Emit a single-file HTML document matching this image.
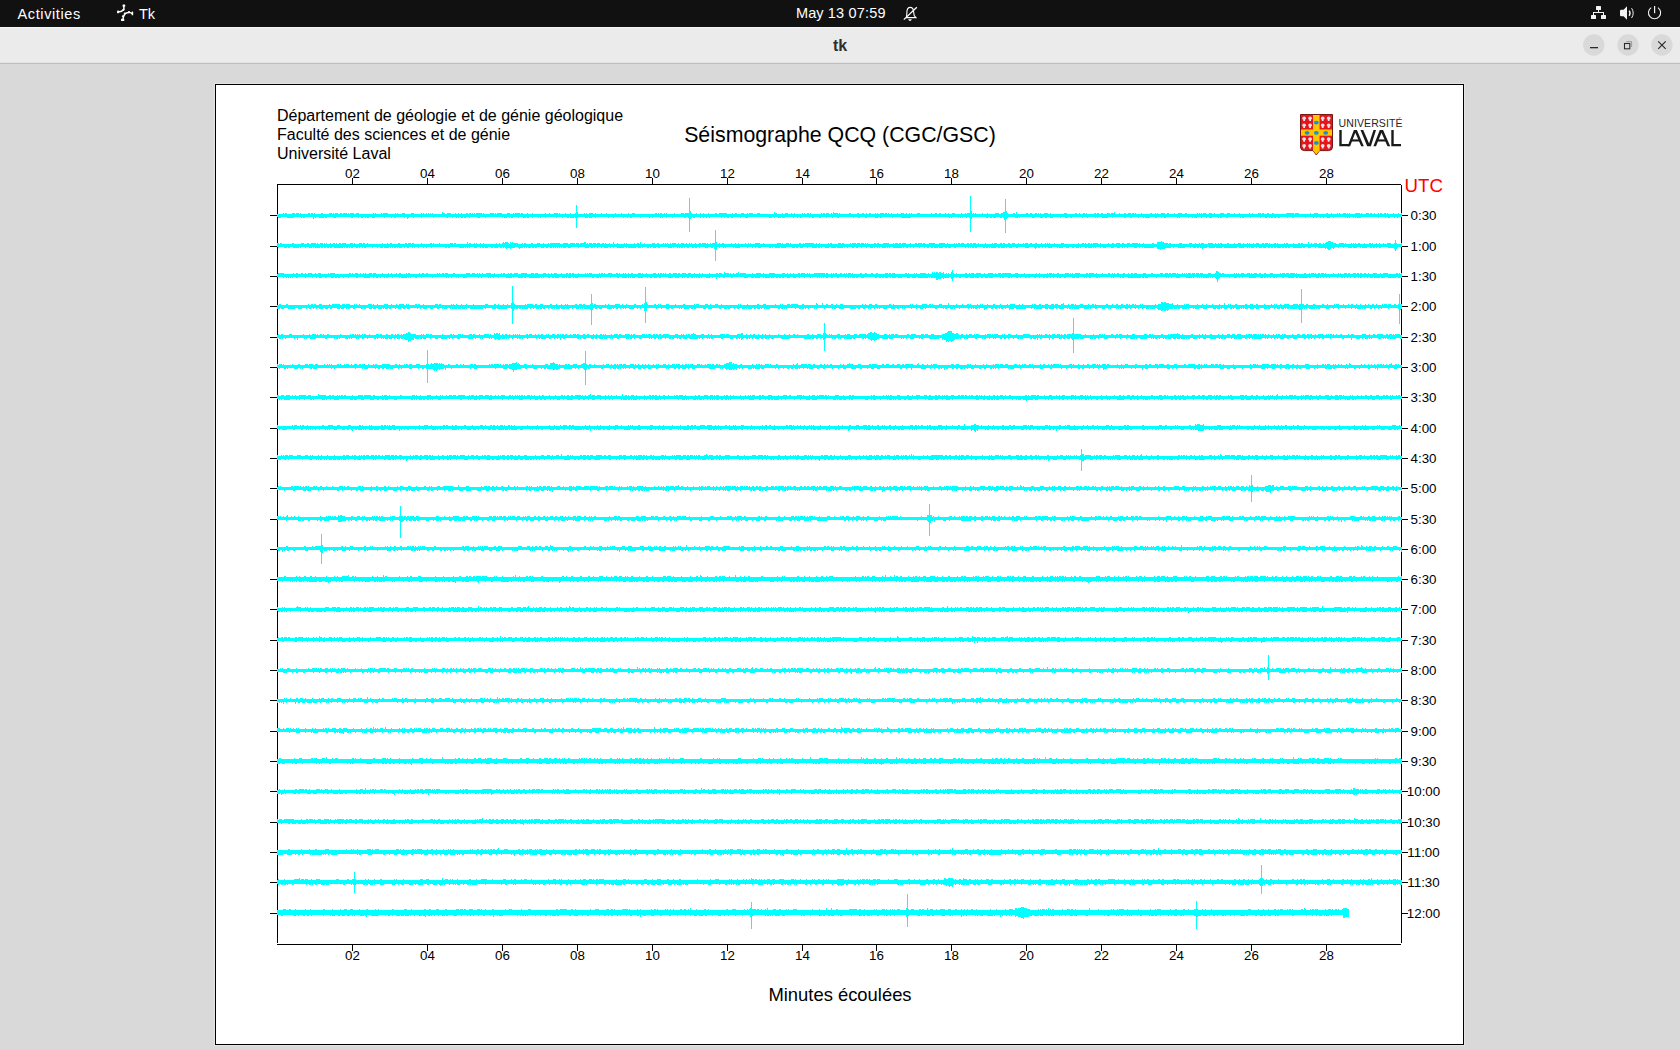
<!DOCTYPE html>
<html><head><meta charset="utf-8"><title>tk</title>
<style>
html,body{margin:0;padding:0}
body{width:1680px;height:1050px;overflow:hidden;background:#d9d9d9;position:relative;font-family:"Liberation Sans",sans-serif}
.abs{position:absolute}
.plot text{font-family:"Liberation Sans",sans-serif}
.t13{font-size:13.33px}.t16{font-size:16px}.t18{font-size:18.4px}.t20{font-size:21.33px}
</style></head><body>
<div class="abs" style="left:0;top:0;width:1680px;height:27px;background:#111111"></div>
<div class="abs" style="left:0;top:27px;width:1680px;height:1px;background:#f6f6f6"></div>
<div class="abs" style="left:0;top:28px;width:1680px;height:34px;background:#ebebeb"></div>
<div class="abs" style="left:0;top:62px;width:1680px;height:1px;background:#e3e3e3"></div>
<div class="abs" style="left:0;top:63px;width:1680px;height:1px;background:#bebebe"></div>
<svg class="abs" style="left:0;top:0" width="1680" height="64" viewBox="0 0 1680 64">
  <text x="17.5" y="19" style="font-family:'Liberation Sans',sans-serif;font-size:14.5px;letter-spacing:0.62px" fill="#ffffff">Activities</text>
  <g fill="none" stroke="#ffffff" stroke-width="1.5" stroke-linecap="round" stroke-linejoin="round">
    <path d="M123.8 5.6 L123.9 9.6 L121.6 11.2 L118.2 12"/>
    <path d="M125 13.6 L127.2 12.8 L129.2 12.4 L131 12.9 L132.3 13.2"/>
    <path d="M125 13.6 L123.6 16.4 L122.8 19.8"/>
  </g>
  <g fill="#ffffff">
    <rect x="122.6" y="4.6" width="2.6" height="2.2" rx="0.6"/>
    <rect x="117.1" y="10.6" width="1.8" height="2.6" rx="0.5"/>
    <rect x="131.6" y="11.6" width="1.6" height="3.6" rx="0.5"/>
    <rect x="121" y="18.8" width="3.3" height="2.3" rx="0.6"/>
    <circle cx="123.4" cy="9.7" r="1"/>
    <circle cx="129" cy="11.9" r="1"/>
    <circle cx="124.8" cy="13.4" r="1"/>
    <circle cx="122.8" cy="16.2" r="0.9"/>
  </g>
  <text x="139" y="19" style="font-family:'Liberation Sans',sans-serif;font-size:14.5px" fill="#ffffff">Tk</text>
  <text x="796" y="18" style="font-family:'Liberation Sans',sans-serif;font-size:14.5px;letter-spacing:0.1px" fill="#ffffff">May 13</text>
  <text x="848.5" y="18" style="font-family:'Liberation Sans',sans-serif;font-size:14.5px;letter-spacing:0.2px" fill="#ffffff">07:59</text>
  <g fill="none" stroke="#ffffff" stroke-width="1.1">
    <path d="M906.5 17.6 L907 11 Q907.5 7.4 910.2 7.4 Q913 7.4 913.5 11 L914.2 15.5 L916 17.6 Z"/>
    <path d="M903.8 19.6 L916.8 7.3" stroke-width="1.3"/>
  </g>
  <path d="M908.2 19.2 L911.8 19.2 Q911.2 21 910 21 Q908.8 21 908.2 19.2Z" fill="#ffffff"/>
  <g fill="#f2f2f2">
    <rect x="1596" y="6" width="5" height="4" rx="0.6"/>
    <rect x="1591" y="15" width="5" height="4" rx="0.6"/>
    <rect x="1601" y="15" width="5" height="4" rx="0.6"/>
    <rect x="1598" y="10" width="1" height="3"/>
    <rect x="1593" y="12" width="11" height="1"/>
    <rect x="1593" y="12" width="1" height="3"/>
    <rect x="1603" y="12" width="1" height="3"/>
    <path d="M1621.2 9.8 L1623.6 9.8 L1627 6.2 L1627 19.8 L1623.6 16.2 L1621.2 16.2 Q1620 16.2 1620 15 L1620 11 Q1620 9.8 1621.2 9.8 Z"/>
  </g>
  <g fill="none" stroke="#f2f2f2">
    <path d="M1629.3 10.6 Q1630.9 13.2 1629.3 15.8" stroke-width="1.6"/>
    <path d="M1631.6 8.2 Q1634.8 13.1 1631.6 18" stroke-width="1.0"/>
    <path d="M1651.2 7.6 A6.1 6.1 0 1 0 1657.9 7.6" stroke-width="1.1"/>
    <path d="M1654.6 6 L1654.6 13.2" stroke-width="1.2"/>
  </g>
  <text x="840" y="51" text-anchor="middle" style="font-family:'Liberation Sans',sans-serif;font-size:16px;font-weight:bold" fill="#2e2e2e">tk</text>
  <circle cx="1593.8" cy="45" r="10.7" fill="#d9d9d9"/>
  <circle cx="1628" cy="45" r="10.7" fill="#d9d9d9"/>
  <circle cx="1661.9" cy="45" r="10.7" fill="#d9d9d9"/>
  <rect x="1590" y="47" width="8" height="1.3" fill="#2a2a2a"/>
  <rect x="1624.5" y="43.5" width="5.3" height="5.3" fill="none" stroke="#2a2a2a" stroke-width="1.1"/>
  <path d="M1626.3 41.6 L1631.6 41.6 L1631.6 47" fill="none" stroke="#8a8a8a" stroke-width="0.8"/>
  <path d="M1658.2 41.3 L1665.7 48.8 M1665.7 41.3 L1658.2 48.8" stroke="#2a2a2a" stroke-width="1.2"/>
</svg>

<svg class="abs plot" style="left:0;top:0" width="1680" height="1050" viewBox="0 0 1680 1050" shape-rendering="crispEdges">
<rect x="214" y="83" width="1251" height="963" fill="#e4e4e4"/>
<rect x="215" y="84" width="1249" height="961" fill="#000"/>
<rect x="216" y="85" width="1247" height="959" fill="#fff"/>
<rect x="277" y="184" width="1124" height="1" fill="#000"/>
<rect x="277" y="944" width="1124" height="1" fill="#000"/>
<rect x="277" y="184" width="1" height="759" fill="#000"/>
<rect x="1401" y="185" width="1" height="758" fill="#000"/>
<rect x="352" y="178" width="1" height="6" fill="#000"/>
<rect x="352" y="945" width="1" height="6" fill="#000"/>
<text x="352.5" y="178" class="t13" text-anchor="middle">02</text>
<text x="352.5" y="960" class="t13" text-anchor="middle">02</text>
<rect x="427" y="178" width="1" height="6" fill="#000"/>
<rect x="427" y="945" width="1" height="6" fill="#000"/>
<text x="427.5" y="178" class="t13" text-anchor="middle">04</text>
<text x="427.5" y="960" class="t13" text-anchor="middle">04</text>
<rect x="502" y="178" width="1" height="6" fill="#000"/>
<rect x="502" y="945" width="1" height="6" fill="#000"/>
<text x="502.5" y="178" class="t13" text-anchor="middle">06</text>
<text x="502.5" y="960" class="t13" text-anchor="middle">06</text>
<rect x="577" y="178" width="1" height="6" fill="#000"/>
<rect x="577" y="945" width="1" height="6" fill="#000"/>
<text x="577.5" y="178" class="t13" text-anchor="middle">08</text>
<text x="577.5" y="960" class="t13" text-anchor="middle">08</text>
<rect x="652" y="178" width="1" height="6" fill="#000"/>
<rect x="652" y="945" width="1" height="6" fill="#000"/>
<text x="652.5" y="178" class="t13" text-anchor="middle">10</text>
<text x="652.5" y="960" class="t13" text-anchor="middle">10</text>
<rect x="727" y="178" width="1" height="6" fill="#000"/>
<rect x="727" y="945" width="1" height="6" fill="#000"/>
<text x="727.5" y="178" class="t13" text-anchor="middle">12</text>
<text x="727.5" y="960" class="t13" text-anchor="middle">12</text>
<rect x="802" y="178" width="1" height="6" fill="#000"/>
<rect x="802" y="945" width="1" height="6" fill="#000"/>
<text x="802.5" y="178" class="t13" text-anchor="middle">14</text>
<text x="802.5" y="960" class="t13" text-anchor="middle">14</text>
<rect x="876" y="178" width="1" height="6" fill="#000"/>
<rect x="876" y="945" width="1" height="6" fill="#000"/>
<text x="876.5" y="178" class="t13" text-anchor="middle">16</text>
<text x="876.5" y="960" class="t13" text-anchor="middle">16</text>
<rect x="951" y="178" width="1" height="6" fill="#000"/>
<rect x="951" y="945" width="1" height="6" fill="#000"/>
<text x="951.5" y="178" class="t13" text-anchor="middle">18</text>
<text x="951.5" y="960" class="t13" text-anchor="middle">18</text>
<rect x="1026" y="178" width="1" height="6" fill="#000"/>
<rect x="1026" y="945" width="1" height="6" fill="#000"/>
<text x="1026.5" y="178" class="t13" text-anchor="middle">20</text>
<text x="1026.5" y="960" class="t13" text-anchor="middle">20</text>
<rect x="1101" y="178" width="1" height="6" fill="#000"/>
<rect x="1101" y="945" width="1" height="6" fill="#000"/>
<text x="1101.5" y="178" class="t13" text-anchor="middle">22</text>
<text x="1101.5" y="960" class="t13" text-anchor="middle">22</text>
<rect x="1176" y="178" width="1" height="6" fill="#000"/>
<rect x="1176" y="945" width="1" height="6" fill="#000"/>
<text x="1176.5" y="178" class="t13" text-anchor="middle">24</text>
<text x="1176.5" y="960" class="t13" text-anchor="middle">24</text>
<rect x="1251" y="178" width="1" height="6" fill="#000"/>
<rect x="1251" y="945" width="1" height="6" fill="#000"/>
<text x="1251.5" y="178" class="t13" text-anchor="middle">26</text>
<text x="1251.5" y="960" class="t13" text-anchor="middle">26</text>
<rect x="1326" y="178" width="1" height="6" fill="#000"/>
<rect x="1326" y="945" width="1" height="6" fill="#000"/>
<text x="1326.5" y="178" class="t13" text-anchor="middle">28</text>
<text x="1326.5" y="960" class="t13" text-anchor="middle">28</text>
<rect x="270" y="215" width="7" height="1" fill="#000"/>
<rect x="1402" y="215" width="6" height="1" fill="#000"/>
<text x="1423.5" y="220" class="t13" text-anchor="middle">0:30</text>
<rect x="270" y="246" width="7" height="1" fill="#000"/>
<rect x="1402" y="246" width="6" height="1" fill="#000"/>
<text x="1423.5" y="251" class="t13" text-anchor="middle">1:00</text>
<rect x="270" y="276" width="7" height="1" fill="#000"/>
<rect x="1402" y="276" width="6" height="1" fill="#000"/>
<text x="1423.5" y="281" class="t13" text-anchor="middle">1:30</text>
<rect x="270" y="306" width="7" height="1" fill="#000"/>
<rect x="1402" y="306" width="6" height="1" fill="#000"/>
<text x="1423.5" y="311" class="t13" text-anchor="middle">2:00</text>
<rect x="270" y="337" width="7" height="1" fill="#000"/>
<rect x="1402" y="337" width="6" height="1" fill="#000"/>
<text x="1423.5" y="342" class="t13" text-anchor="middle">2:30</text>
<rect x="270" y="367" width="7" height="1" fill="#000"/>
<rect x="1402" y="367" width="6" height="1" fill="#000"/>
<text x="1423.5" y="372" class="t13" text-anchor="middle">3:00</text>
<rect x="270" y="397" width="7" height="1" fill="#000"/>
<rect x="1402" y="397" width="6" height="1" fill="#000"/>
<text x="1423.5" y="402" class="t13" text-anchor="middle">3:30</text>
<rect x="270" y="428" width="7" height="1" fill="#000"/>
<rect x="1402" y="428" width="6" height="1" fill="#000"/>
<text x="1423.5" y="433" class="t13" text-anchor="middle">4:00</text>
<rect x="270" y="458" width="7" height="1" fill="#000"/>
<rect x="1402" y="458" width="6" height="1" fill="#000"/>
<text x="1423.5" y="463" class="t13" text-anchor="middle">4:30</text>
<rect x="270" y="488" width="7" height="1" fill="#000"/>
<rect x="1402" y="488" width="6" height="1" fill="#000"/>
<text x="1423.5" y="493" class="t13" text-anchor="middle">5:00</text>
<rect x="270" y="519" width="7" height="1" fill="#000"/>
<rect x="1402" y="519" width="6" height="1" fill="#000"/>
<text x="1423.5" y="524" class="t13" text-anchor="middle">5:30</text>
<rect x="270" y="549" width="7" height="1" fill="#000"/>
<rect x="1402" y="549" width="6" height="1" fill="#000"/>
<text x="1423.5" y="554" class="t13" text-anchor="middle">6:00</text>
<rect x="270" y="579" width="7" height="1" fill="#000"/>
<rect x="1402" y="579" width="6" height="1" fill="#000"/>
<text x="1423.5" y="584" class="t13" text-anchor="middle">6:30</text>
<rect x="270" y="609" width="7" height="1" fill="#000"/>
<rect x="1402" y="609" width="6" height="1" fill="#000"/>
<text x="1423.5" y="614" class="t13" text-anchor="middle">7:00</text>
<rect x="270" y="640" width="7" height="1" fill="#000"/>
<rect x="1402" y="640" width="6" height="1" fill="#000"/>
<text x="1423.5" y="645" class="t13" text-anchor="middle">7:30</text>
<rect x="270" y="670" width="7" height="1" fill="#000"/>
<rect x="1402" y="670" width="6" height="1" fill="#000"/>
<text x="1423.5" y="675" class="t13" text-anchor="middle">8:00</text>
<rect x="270" y="700" width="7" height="1" fill="#000"/>
<rect x="1402" y="700" width="6" height="1" fill="#000"/>
<text x="1423.5" y="705" class="t13" text-anchor="middle">8:30</text>
<rect x="270" y="731" width="7" height="1" fill="#000"/>
<rect x="1402" y="731" width="6" height="1" fill="#000"/>
<text x="1423.5" y="736" class="t13" text-anchor="middle">9:00</text>
<rect x="270" y="761" width="7" height="1" fill="#000"/>
<rect x="1402" y="761" width="6" height="1" fill="#000"/>
<text x="1423.5" y="766" class="t13" text-anchor="middle">9:30</text>
<rect x="270" y="791" width="7" height="1" fill="#000"/>
<rect x="1402" y="791" width="6" height="1" fill="#000"/>
<text x="1423.5" y="796" class="t13" text-anchor="middle">10:00</text>
<rect x="270" y="822" width="7" height="1" fill="#000"/>
<rect x="1402" y="822" width="6" height="1" fill="#000"/>
<text x="1423.5" y="827" class="t13" text-anchor="middle">10:30</text>
<rect x="270" y="852" width="7" height="1" fill="#000"/>
<rect x="1402" y="852" width="6" height="1" fill="#000"/>
<text x="1423.5" y="857" class="t13" text-anchor="middle">11:00</text>
<rect x="270" y="882" width="7" height="1" fill="#000"/>
<rect x="1402" y="882" width="6" height="1" fill="#000"/>
<text x="1423.5" y="887" class="t13" text-anchor="middle">11:30</text>
<rect x="270" y="913" width="7" height="1" fill="#000"/>
<rect x="1402" y="913" width="6" height="1" fill="#000"/>
<text x="1423.5" y="918" class="t13" text-anchor="middle">12:00</text>
<path fill="#00ffff" d="M277 214h6v-1h1v1h1v-1h2v1h5v-1h3v1h1v-1h3v1h1v-1h1v1h7v-1h2v1h1v-1h2v1h1v-1h1v1h6v-1h2v1h6v-1h3v1h1v-1h1v1h1v-1h3v1h2v-1h2v1h1v-1h4v1h1v-1h1v1h1v-1h4v1h2v-1h3v1h14v-1h1v1h1v-1h1v1h5v-1h1v1h1v-1h5v1h7v-1h1v1h1v-1h1v1h4v-1h3v1h6v-1h3v1h7v-1h1v1h1v-1h1v1h2v-1h1v1h1v-1h1v1h1v-1h1v1h1v-1h1v1h9v-2h1v1h2v1h2v-1h4v1h4v-1h1v1h2v-1h1v1h2v-1h1v1h4v-1h2v1h1v-1h2v1h1v-1h1v1h1v-1h1v1h1v-1h6v1h1v-1h1v1h6v-1h4v1h1v-1h1v1h1v-1h5v1h5v-1h3v1h3v-1h1v1h1v-1h5v1h1v-1h2v1h4v-1h1v1h4v-1h1v1h12v-1h1v1h3v-1h1v1h4v-1h4v1h1v-1h1v1h5v-1h1v1h4v-1h1v1h4v-1h2v-1h1v2h6v-1h1v1h1v-1h1v1h2v-1h4v1h2v-1h1v1h5v-1h1v1h4v-1h1v1h8v-1h1v1h5v-1h1v1h6v-1h1v1h3v-1h3v1h20v-1h2v1h1v-1h1v1h1v-1h2v1h2v-1h1v1h1v-1h1v1h7v-1h1v1h6v-1h3v1h1v-1h5v-2h1v2h1v1h4v-1h1v1h3v-1h1v1h2v-1h1v1h4v-1h1v1h6v-1h2v1h2v-1h8v1h5v-1h1v1h2v-1h2v1h4v-1h3v1h3v-1h1v1h1v-1h4v1h4v-1h3v1h14v-2h1v1h2v1h5v-1h1v1h2v-1h3v1h3v-1h1v1h2v-1h1v1h7v-1h1v1h1v-1h1v1h2v-1h2v1h1v-1h1v1h10v-1h1v1h1v-1h2v1h1v-1h3v1h2v-1h1v1h1v-2h1v1h4v1h1v-1h1v1h9v-1h2v1h6v-1h2v1h3v-1h2v1h2v-1h1v1h2v-1h2v1h4v-1h1v1h1v-1h1v1h2v-1h4v1h1v-1h2v1h1v-1h1v1h2v-1h1v1h5v-1h1v1h3v-1h3v1h2v-1h1v1h2v-1h1v1h1v-1h1v1h5v-1h3v1h11v-1h1v1h3v-1h2v1h2v-1h2v1h4v-1h1v1h2v-1h1v1h3v-1h3v1h6v-1h1v1h3v-1h1v1h1v-1h4v-2h1v3h1v-1h1v1h1v-1h1v1h6v-1h1v1h4v-1h1v1h7v-1h4v1h2v-1h2v-1h2v1h1v-2h1v2h1v1h5v-1h2v1h1v-2h1v2h9v-1h2v1h2v-1h2v1h3v-1h2v1h1v-1h1v1h1v-1h1v1h3v-1h4v1h2v-1h1v1h13v-1h3v1h8v-1h2v1h2v-1h1v1h3v-1h2v1h1v-1h1v1h7v-1h2v1h1v-1h2v1h2v-1h2v1h4v-1h3v1h1v-1h3v-1h1v2h4v-1h1v1h4v-1h2v1h2v-1h3v1h1v-1h2v1h1v-1h1v1h5v-1h1v1h8v-1h2v1h3v-1h1v1h1v-1h1v1h3v-1h4v1h2v-1h2v1h5v-1h1v1h3v-1h4v1h3v-1h2v1h10v-1h1v1h1v-1h1v1h1v-1h1v1h1v-1h3v1h3v-1h3v1h2v-1h1v1h5v-1h4v1h3v-1h3v1h4v-1h1v1h4v-1h1v1h9v-1h1v1h2v-1h1v1h5v-1h3v1h1v-1h2v1h3v-1h2v1h3v-1h2v1h12v-1h8v1h1v-1h4v1h11v-1h1v1h3v-1h4v1h8v-1h2v1h3v-1h1v1h5v-1h1v1h1v-1h1v1h3v-1h3v1h1v-1h1v1h1v-1h1v1h5v-1h5v1h1v-1h1v1h4v-1h3v1h1v-1h2v1h2v-1h1v1h3v-1h1v1h1v-1h2v1h2v-1h2v1h1v-1h1v1h5v-1h1v1h4v-1h1v1h2v-1h1v4h-4v1h-1v-1h-2v1h-1v-1h-4v1h-2v-1h-2v1h-1v-1h-6v1h-1v-1h-17v1h-4v-1h-1v1h-1v-1h-1v1h-1v-1h-3v1h-1v-1h-1v1h-1v-1h-1v1h-1v-1h-11v1h-1v-1h-3v1h-3v-1h-3v1h-1v-1h-2v1h-1v-1h-3v1h-1v-1h-2v1h-1v-1h-7v1h-1v-1h-11v1h-2v-1h-4v1h-1v-1h-7v1h-2v-1h-2v1h-2v-1h-1v1h-2v-1h-1v1h-1v-1h-2v1h-2v-1h-4v1h-1v-1h-9v1h-1v-1h-6v1h-2v-1h-1v1h-1v-1h-12v1h-2v-1h-4v1h-2v-1h-1v1h-1v-1h-6v1h-3v-1h-2v1h-1v-1h-4v1h-1v-1h-4v1h-3v-1h-1v1h-1v-1h-3v1h-1v-1h-8v1h-1v-1h-1v1h-1v-1h-11v1h-2v-1h-2v1h-1v-1h-4v1h-2v-1h-5v1h-5v-1h-1v1h-1v-1h-4v1h-1v-1h-6v1h-2v-1h-4v1h-2v-1h-11v1h-1v-1h-4v1h-6v-1h-4v1h-1v-1h-1v1h-1v-1h-7v1h-1v-1h-4v1h-1v-1h-10v1h-2v-1h-2v1h-3v-1h-4v1h-1v-1h-7v1h-3v-1h-3v1h-2v-1h-2v1h-3v-1h-5v1h-3v-1h-12v1h-1v-1h-1v1h-3v-1h-7v1h-1v1h-1v-2h-1v3h-1v-2h-1v-1h-1v1h-2v-1h-4v1h-3v-1h-1v1h-2v-1h-2v1h-2v-1h-14v2h-1v-2h-1v1h-1v-1h-2v1h-1v-1h-3v1h-1v-1h-1v1h-1v-1h-1v1h-1v-1h-6v1h-1v-1h-1v1h-1v-1h-38v1h-10v-1h-8v1h-1v-1h-10v1h-2v-1h-2v1h-3v-1h-8v1h-2v-1h-5v1h-2v-1h-4v1h-1v-1h-14v1h-2v-1h-4v1h-1v-1h-5v1h-1v-1h-5v1h-2v-1h-5v1h-2v-1h-2v1h-1v-1h-7v1h-2v-1h-2v1h-1v-1h-3v1h-1v-1h-8v1h-3v-1h-1v1h-3v-1h-3v1h-1v-1h-2v1h-3v-1h-21v1h-3v-1h-4v1h-1v-1h-7v1h-2v-1h-2v1h-2v-1h-2v1h-1v-1h-2v1h-1v-1h-11v1h-1v-1h-2v1h-1v-1h-2v1h-1v-1h-2v1h-1v-1h-5v1h-2v-1h-1v1h-1v1h-1v-1h-2v-1h-2v1h-2v-1h-11v1h-1v-1h-5v1h-1v-1h-3v1h-1v-1h-1v1h-1v-1h-7v1h-1v-1h-2v1h-1v-1h-8v1h-1v-1h-8v1h-2v-1h-2v1h-1v-1h-3v1h-1v-1h-9v1h-1v-1h-4v1h-1v-1h-12v1h-1v-1h-3v1h-3v-1h-1v1h-3v-1h-7v1h-1v-1h-1v1h-1v-1h-1v1h-4v-1h-1v1h-2v-1h-4v1h-1v-1h-5v1h-1v-1h-10v1h-1v-1h-4v1h-1v-1h-1v1h-1v-1h-5v1h-1v-1h-3v1h-2v-1h-1v1h-3v-1h-4v1h-1v-1h-5v1h-2v-1h-1v1h-1v-1h-2v1h-3v-1h-1v1h-1v-1h-16v1h-1v-1h-5v1h-3v-1h-7v1h-1v-1h-3v1h-2v-1h-1v1h-2v-1h-2v1h-1v-1h-1v1h-1v-1h-3v1h-1v-1h-4v1h-2v-1h-12v1h-1v-1h-11v1h-1v-1h-7v1h-1v-1h-4v1h-1v1h-1v-2h-2v1h-1v-1h-8v1h-2v-1h-2v1h-1v-1h-6v1h-1v-1h-9v1h-3v-1h-3v1h-2v-1h-1v1h-1v-1h-2v1h-2v-1h-2v1h-1v-1h-5v1h-2v-1h-15v1h-3v-1h-6v1h-2v-1h-1v1h-5v-1h-3v1h-1v-1h-1v2h-1v-2h-8v1h-2v-1h-1v1h-1v-1h-7v1h-7v-1h-6v1h-3v-1h-1z M277 243h2v1h1v-1h2v1h10v-1h2v1h7v-1h3v1h3v-1h2v1h2v-1h5v1h1v-1h1v1h2v-1h3v1h1v-1h1v1h1v-1h1v1h3v-1h1v1h2v-1h2v1h1v-1h1v1h2v-1h2v1h1v-1h4v1h4v-1h3v1h1v-1h1v1h4v-1h3v1h1v-1h2v1h2v-1h1v1h14v-1h1v1h4v-1h1v1h2v-1h2v1h6v-1h2v1h5v-1h2v1h1v-1h3v1h1v-1h2v1h7v-1h1v1h8v-1h2v1h1v-1h1v1h5v-1h1v1h10v-1h3v1h1v-1h2v1h11v-2h1v2h1v-1h2v1h3v-1h1v1h1v-1h1v1h3v-1h1v1h2v-1h1v1h12v-1h1v1h2v-1h1v1h2v-1h1v-1h1v1h1v-1h3v1h1v1h1v-2h1v1h1v-1h1v1h5v1h4v-1h1v1h1v-1h2v1h5v-1h2v1h4v-1h3v1h3v-1h1v1h4v-1h1v1h1v-1h10v1h3v-1h5v1h2v-1h5v1h1v-1h3v1h1v-1h4v-1h2v2h1v-1h1v1h1v-1h3v1h1v-1h3v1h1v-1h3v1h2v-1h2v1h1v-1h1v1h3v-1h1v1h3v-2h1v2h3v-1h1v1h6v-1h1v1h1v-1h1v1h7v-1h1v1h2v-1h2v1h1v-2h1v2h3v-1h1v1h7v-1h3v1h2v-1h2v1h4v-1h1v1h1v-1h1v1h1v-1h1v1h2v-1h1v1h1v-1h4v1h2v-1h1v1h2v-1h3v1h2v-1h1v1h2v-1h1v1h1v-1h1v1h3v-1h1v1h3v-1h2v1h1v-1h4v1h1v-1h1v1h2v-1h1v1h1v-1h3v1h1v-2h1v2h2v-1h1v1h2v-1h2v1h7v-1h1v1h3v-1h1v1h2v-1h1v1h6v-1h1v1h2v-1h1v1h1v-1h1v1h4v-1h5v1h3v-1h1v1h13v-1h4v1h1v-1h1v1h3v-1h3v1h1v-1h1v1h8v-1h2v1h2v-1h1v1h1v-1h9v1h2v-1h1v1h2v-1h1v1h8v-1h1v1h1v-1h2v1h6v-1h3v1h1v-1h2v1h6v-1h1v1h1v-1h4v1h1v-1h3v1h1v-1h3v1h1v-1h1v1h1v-1h1v1h6v-1h2v1h1v-1h2v1h4v-1h6v1h4v-1h1v1h1v-1h3v1h1v-1h2v1h1v-1h4v1h4v-1h1v1h4v-1h2v1h1v-1h4v1h1v-1h2v1h4v-1h6v1h4v-1h6v1h2v-1h1v1h6v-1h1v1h1v-1h1v1h1v-1h2v1h1v-1h3v1h3v-1h2v1h1v-1h2v1h1v-1h3v1h2v-1h1v1h6v-1h1v1h6v-1h1v1h1v-1h3v1h3v-1h2v1h1v-1h2v1h3v-1h2v1h2v-1h3v1h3v-1h1v1h4v-1h1v1h1v-1h3v1h2v-1h2v1h3v-1h2v1h4v-1h1v1h3v-1h1v1h1v-1h1v1h1v-1h1v1h4v-1h1v1h6v-1h3v1h14v-1h1v1h3v-1h2v1h1v-1h1v1h2v-1h2v1h1v-1h1v1h1v-1h5v1h2v-1h1v1h7v-1h1v1h3v-1h2v1h2v-1h4v1h2v-1h2v1h3v-1h3v1h2v-1h6v1h1v-1h1v1h3v-1h1v1h8v-1h2v1h3v-2h4v-1h1v1h2v1h4v1h1v-1h2v1h8v-1h3v1h7v-1h3v1h3v-1h1v1h3v-1h1v1h1v-1h3v1h4v-1h5v1h2v-1h1v1h2v-1h1v1h1v-1h2v1h5v-1h2v1h5v-1h1v1h3v-1h3v1h2v-1h1v1h3v-1h1v1h1v-1h1v1h3v-1h1v1h2v-1h3v1h3v-1h2v1h1v-1h3v1h1v-1h1v1h4v-1h2v1h1v-1h1v1h6v-1h1v1h1v-1h2v1h5v-1h1v1h4v-1h2v1h1v-1h2v1h5v-2h1v2h2v-1h1v1h2v-1h3v1h2v-1h2v1h2v-1h1v1h1v-1h1v-1h2v-1h3v1h2v1h3v1h3v-1h5v1h1v-1h1v1h5v-1h1v1h1v-1h1v1h1v-1h1v1h2v-1h2v1h4v-1h1v1h4v-1h2v1h1v-1h1v1h3v-1h1v1h2v-1h1v1h3v-1h1v1h3v-1h4v1h3v-1h1v1h1v-1h1v1h4v-1h1v4h-4v1h-1v1h-1v-2h-1v2h-1v-1h-6v-1h-7v1h-2v-1h-2v1h-1v-1h-1v1h-2v-1h-1v1h-2v-1h-3v1h-5v-1h-1v1h-1v-1h-3v1h-4v-1h-1v1h-4v-1h-4v1h-1v-1h-4v1h-1v-1h-3v1h-1v1h-1v-1h-2v1h-1v1h-2v-1h-1v-1h-1v1h-1v-1h-7v-1h-2v1h-1v-1h-4v1h-3v-1h-3v1h-2v-1h-1v1h-9v-1h-3v1h-2v-1h-1v1h-2v-1h-1v1h-2v-1h-1v1h-4v-1h-1v1h-2v-1h-1v1h-2v-1h-1v1h-2v-1h-2v1h-3v-1h-1v1h-3v-1h-2v1h-1v-1h-2v1h-3v-1h-1v1h-1v-1h-1v1h-1v-1h-3v1h-5v-1h-2v1h-13v-1h-2v1h-6v-1h-1v1h-6v-1h-2v1h-4v1h-1v-1h-2v-1h-1v1h-2v-1h-1v1h-3v-1h-2v1h-1v-1h-5v1h-7v-1h-4v1h-1v-1h-2v1h-6v1h-4v1h-1v-1h-3v-2h-3v1h-10v-1h-1v1h-1v-1h-2v1h-1v-1h-2v1h-3v-1h-6v1h-1v-1h-2v1h-1v-1h-1v1h-1v-1h-2v1h-3v-1h-3v1h-3v-1h-5v1h-3v-1h-2v1h-1v-1h-4v1h-1v-1h-1v1h-1v-1h-1v1h-4v-1h-1v1h-2v-1h-4v1h-1v-1h-1v1h-3v-1h-2v1h-2v-1h-3v1h-3v-1h-3v1h-4v-1h-1v1h-1v-1h-5v1h-4v-1h-2v1h-1v-1h-2v1h-1v-1h-2v1h-2v-1h-1v1h-1v1h-1v-1h-1v-1h-5v1h-4v-1h-7v1h-2v-1h-4v1h-3v-1h-2v1h-1v-1h-1v1h-4v-1h-1v1h-2v-1h-2v1h-5v-1h-1v1h-1v-1h-1v1h-2v-1h-1v1h-2v-1h-6v1h-2v-1h-1v1h-2v-1h-1v1h-1v-1h-1v1h-1v-1h-2v1h-1v-1h-9v1h-2v-1h-3v1h-3v-1h-1v1h-2v-1h-2v1h-4v-1h-1v1h-4v-1h-1v1h-2v-1h-2v1h-2v-1h-2v1h-1v-1h-4v1h-1v-1h-5v1h-1v-1h-2v1h-1v-1h-2v1h-2v-1h-2v1h-1v-1h-1v1h-9v-1h-3v1h-1v-1h-1v1h-1v-1h-1v1h-4v-1h-2v1h-1v-1h-1v1h-1v-1h-2v1h-1v-1h-1v1h-3v-1h-3v1h-1v-1h-4v1h-1v-1h-3v1h-2v-1h-2v1h-2v-1h-4v1h-1v-1h-2v1h-1v-1h-1v1h-6v-1h-1v1h-5v-1h-2v1h-4v-1h-3v1h-1v-1h-1v1h-2v-1h-1v1h-5v-1h-4v1h-1v-1h-4v1h-3v-1h-2v1h-2v-1h-1v1h-3v-1h-6v1h-5v-1h-1v1h-5v-1h-2v1h-1v-1h-1v1h-2v-1h-8v1h-3v-1h-2v1h-1v-1h-2v1h-1v-1h-4v1h-1v-1h-7v1h-5v-1h-1v1h-1v-1h-7v1h-1v-1h-1v1h-1v-1h-3v1h-1v-1h-2v3h-1v-2h-1v1h-1v-2h-1v1h-2v-1h-3v1h-3v-1h-5v1h-1v-1h-2v1h-2v-1h-1v1h-2v-1h-3v1h-2v-1h-2v1h-1v-1h-1v1h-2v-1h-1v1h-1v-1h-1v1h-1v-1h-3v1h-1v-1h-1v1h-4v-1h-8v1h-2v-1h-2v1h-3v-1h-2v1h-1v-1h-1v1h-2v-1h-4v1h-1v-1h-1v1h-3v-1h-2v1h-8v-1h-1v1h-1v-1h-2v1h-7v-1h-3v1h-1v-1h-2v1h-1v-1h-2v1h-4v-1h-2v1h-1v-1h-3v1h-1v-1h-2v1h-1v-1h-1v1h-2v-1h-2v1h-4v-1h-6v1h-1v-1h-7v1h-3v-1h-2v1h-3v-1h-1v1h-1v-1h-1v1h-1v-1h-1v1h-1v-1h-1v1h-1v-1h-1v1h-1v-1h-1v1h-2v-1h-2v1h-2v-1h-2v1h-3v-1h-4v1h-2v-1h-1v1h-2v-1h-1v1h-3v-1h-1v1h-1v-1h-1v1h-1v-1h-1v1h-3v1h-1v-1h-1v-1h-3v1h-4v1h-1v-1h-3v1h-1v-1h-1v-1h-1v1h-1v-1h-1v1h-2v-1h-2v1h-4v-1h-1v1h-2v-1h-3v1h-3v-1h-1v1h-2v-1h-1v1h-1v-1h-3v1h-3v-1h-4v1h-1v-1h-1v1h-1v-1h-1v1h-1v-1h-1v1h-5v-1h-9v1h-2v-1h-1v1h-2v-1h-13v1h-1v-1h-4v1h-1v-1h-2v1h-1v-1h-4v1h-1v-1h-3v1h-1v-1h-1v1h-1v-1h-3v1h-2v-1h-2v1h-1v-1h-2v1h-3v-1h-1v1h-1v-1h-1v1h-2v-1h-1v1h-1v-1h-1v1h-1v-1h-1v1h-5v-1h-1v1h-3v-1h-2v1h-1v-1h-4v1h-1v-1h-6v1h-2v-1h-1v1h-1v-1h-2v1h-1v-1h-1v1h-2v-1h-3v1h-2v-1h-1v1h-1v-1h-1v1h-2v-1h-1v1h-1v-1h-1v1h-9v-1h-2v1h-2v-1h-1v1h-2v-1h-1v1h-2v-1h-1v1h-2v-1h-1v1h-5v-1h-1v1h-1v-1h-1v1h-3v-1h-3v1h-1v-1h-4v1h-1v-1h-1v1h-6v-1h-3v1h-2v-1h-1v1h-3v-1h-5v1h-1v-1h-1z M277 274h1v-1h6v1h9v-1h1v1h2v-1h2v1h3v-1h2v1h2v-1h1v1h2v-1h4v1h3v-1h1v1h2v-1h3v1h7v-1h1v1h1v-1h5v1h14v-1h2v1h1v-1h1v1h2v-1h3v1h2v-1h1v1h2v-1h1v1h1v-1h1v1h3v-1h3v1h1v-1h3v1h6v-1h1v1h5v-1h1v1h2v-1h1v1h4v-1h1v1h2v-1h2v1h5v-1h1v1h1v-1h2v1h9v-1h1v1h2v-1h2v1h2v-1h2v1h9v-1h1v1h1v-1h1v1h2v-1h2v1h1v-1h3v1h5v-1h2v1h11v-1h4v1h2v-1h3v1h2v-1h1v1h1v-1h1v1h2v-1h1v1h3v-1h5v1h3v-1h1v1h6v-1h1v1h1v-1h2v1h3v-1h1v1h1v-1h2v1h2v-1h4v1h3v-1h6v1h4v-1h3v1h1v-1h3v1h5v-1h3v1h2v-1h1v1h2v-1h1v1h2v-1h3v1h4v-1h1v1h4v-1h2v1h1v-1h2v1h1v-1h2v1h4v-1h1v1h6v-1h1v1h1v-1h1v1h1v-1h3v1h7v-1h1v1h1v-1h2v1h1v-1h1v1h3v-1h4v1h4v-1h2v1h1v-1h1v1h3v-1h1v1h1v-1h1v1h2v-1h1v1h2v-1h2v1h5v-1h3v1h1v-1h1v1h3v-1h1v1h6v-1h3v1h2v-1h1v1h1v-1h2v1h1v-1h1v1h1v-1h1v1h3v-1h2v1h2v-1h4v1h1v-1h2v1h2v-1h4v1h2v-1h3v1h3v-1h1v1h4v-1h1v1h2v-1h1v1h6v-1h1v1h6v-1h2v1h1v-1h3v1h2v-2h1v1h4v1h1v-1h1v1h2v-1h1v1h2v-1h2v-1h1v2h1v-1h6v1h6v-1h1v1h3v-1h5v1h2v-1h1v1h5v-1h6v1h7v-1h3v1h2v-1h1v1h2v-1h1v1h2v-1h1v1h4v-1h2v1h1v-1h4v1h2v-1h1v1h1v-1h1v1h4v-1h11v1h1v-1h2v1h3v-1h1v1h1v-1h1v1h1v-1h2v1h3v-1h2v1h2v-1h1v1h1v-1h1v1h1v-1h3v1h1v-1h1v1h7v-1h2v1h3v-1h2v1h4v-1h2v1h3v-1h2v1h7v-1h3v1h1v-1h2v1h1v-1h3v1h10v-1h2v1h1v-1h1v1h5v-1h1v1h1v-1h1v1h3v-1h6v1h2v-1h1v1h3v-2h1v1h1v-1h1v1h1v-1h2v1h1v-1h2v1h2v-1h1v2h2v-1h1v1h1v-1h1v1h2v-2h1v2h1v-1h1v1h2v-1h1v1h8v-1h2v1h2v-1h1v1h1v-1h3v1h2v-1h5v1h3v-1h1v1h3v-1h5v1h2v-1h1v1h2v-1h3v1h1v-1h9v1h4v-1h3v1h6v-1h1v1h11v-1h1v1h2v-1h1v1h7v-1h1v1h1v-1h3v1h1v-1h1v1h3v-1h2v1h6v-1h4v1h1v-1h1v1h1v-1h1v1h2v-1h5v1h6v-1h2v1h1v-1h5v1h2v-1h1v1h5v-1h1v1h5v-1h2v1h2v-1h1v1h1v-1h1v1h2v-1h2v1h4v-1h2v1h3v-1h1v1h2v-1h2v1h1v-1h3v1h6v-1h3v1h5v-1h2v1h7v-1h3v1h2v-1h3v1h1v-1h2v1h1v-1h4v1h1v-1h1v1h4v-1h1v1h1v-1h1v1h1v-1h1v1h1v-1h3v1h1v-1h3v1h1v-1h3v1h1v-1h3v1h5v-1h3v1h4v-1h1v-2h1v2h1v-1h1v1h2v1h1v-1h2v1h10v-1h1v1h1v-1h1v1h1v-1h1v1h2v-1h3v1h3v-1h3v1h1v-1h1v1h2v-1h3v1h2v-1h2v1h3v-1h2v1h4v-1h3v1h7v-1h1v1h1v-1h3v1h1v-1h3v1h1v-1h5v1h1v-1h1v1h7v-1h2v1h3v-1h1v1h1v-1h3v1h1v-1h1v1h2v-1h2v1h1v-1h3v1h1v-1h1v1h7v-1h1v1h4v-1h1v1h1v-1h1v1h3v-1h3v1h1v-1h2v1h3v-1h3v1h1v-1h2v1h1v-1h2v1h2v-1h2v1h2v-1h1v1h4v-1h4v1h3v-1h1v1h2v-1h5v1h8v-1h2v1h1v-1h1v1h1v-1h1v5h-4v-1h-2v1h-8v-1h-3v1h-4v-1h-1v1h-6v-1h-1v1h-3v-1h-2v1h-1v-1h-2v1h-1v-1h-2v1h-2v-1h-1v1h-1v-1h-2v1h-2v-1h-3v1h-1v-1h-2v1h-1v-1h-2v1h-1v-1h-1v1h-2v-1h-3v1h-1v-1h-7v1h-1v-1h-2v1h-1v-1h-2v1h-1v-1h-2v1h-1v-1h-1v1h-3v-1h-5v1h-2v-1h-1v1h-9v-1h-1v1h-2v-1h-2v1h-6v-1h-4v1h-2v-1h-5v1h-1v-1h-1v1h-2v-1h-2v1h-1v-1h-2v1h-1v-1h-1v1h-2v-1h-1v1h-3v-1h-4v1h-7v-1h-6v1h-1v-1h-2v1h-1v-1h-2v1h-3v-1h-4v1h-1v-1h-9v1h-1v1h-1v-1h-1v1h-1v-1h-1v-1h-2v1h-1v-1h-1v1h-1v-1h-1v1h-6v-1h-1v1h-1v-1h-1v1h-1v-1h-1v1h-1v-1h-3v1h-1v-1h-1v1h-6v-1h-6v1h-4v-1h-4v1h-1v-1h-2v1h-1v-1h-1v1h-1v-1h-9v1h-1v-1h-8v1h-3v-1h-1v1h-2v-1h-1v1h-13v-1h-4v1h-2v-1h-1v1h-1v-1h-6v1h-1v-1h-1v1h-1v-1h-11v1h-1v-1h-1v1h-2v-1h-5v1h-2v-1h-2v1h-1v-1h-1v1h-1v-1h-5v1h-3v-1h-1v1h-3v-1h-6v1h-2v-1h-3v1h-2v-1h-1v1h-1v-1h-3v1h-1v-1h-2v1h-1v-1h-2v1h-2v-1h-1v1h-2v-1h-3v1h-1v-1h-3v1h-2v-1h-4v1h-2v-1h-1v1h-2v-1h-4v1h-1v-1h-2v1h-2v-1h-4v1h-1v-1h-1v1h-2v-1h-4v1h-2v-1h-1v1h-1v-1h-7v1h-4v-1h-1v1h-3v-1h-2v1h-2v-1h-2v1h-4v-1h-1v1h-4v-1h-2v1h-3v-1h-4v1h-2v-1h-2v1h-1v-1h-2v1h-2v1h-1v-2h-2v1h-5v1h-1v-1h-2v1h-3v1h-2v-2h-5v-1h-1v1h-1v-1h-1v1h-10v-1h-2v1h-4v-1h-2v1h-3v-1h-5v1h-4v-1h-2v1h-4v-1h-1v1h-1v-1h-2v1h-3v-1h-1v1h-2v-1h-1v1h-2v-1h-2v1h-2v-1h-11v1h-3v-1h-3v1h-2v-1h-1v1h-3v-1h-1v1h-1v-1h-1v1h-1v-1h-2v1h-1v-1h-6v1h-2v-1h-4v1h-2v-1h-3v1h-2v-1h-2v1h-1v-1h-1v1h-1v-1h-1v1h-1v-1h-1v1h-1v-1h-4v1h-1v-1h-1v1h-1v-1h-5v1h-1v-1h-4v1h-1v-1h-3v1h-3v-1h-3v1h-3v-1h-3v1h-2v-1h-1v1h-2v-1h-1v1h-2v-1h-2v1h-3v-1h-1v1h-5v-1h-1v1h-1v-1h-3v1h-5v-1h-1v1h-3v-1h-3v1h-4v-1h-11v1h-2v-1h-6v1h-2v-1h-3v1h-1v-1h-2v2h-1v-2h-3v1h-1v-1h-2v1h-4v-1h-4v1h-1v-1h-1v1h-2v-1h-1v1h-1v-1h-1v1h-1v-1h-1v1h-2v-1h-2v1h-2v-1h-2v1h-1v-1h-1v1h-1v-1h-3v1h-4v-1h-2v1h-5v-1h-7v1h-2v-1h-2v1h-3v-1h-2v1h-2v-1h-2v1h-1v-1h-4v1h-5v-1h-3v1h-3v-1h-1v1h-1v-1h-1v1h-1v-1h-1v1h-5v-1h-3v1h-2v-1h-6v1h-1v-1h-9v1h-1v-1h-1v1h-3v-1h-2v1h-2v-1h-14v1h-3v-1h-1v1h-1v-1h-2v1h-3v-1h-1v1h-1v-1h-1v1h-3v-1h-3v1h-4v-1h-1v1h-2v-1h-2v1h-2v-1h-4v1h-1v-1h-1v1h-1v-1h-1v1h-11v-1h-3v1h-2v-1h-1v1h-5v-1h-4v1h-1v-1h-1v1h-6v-1h-7v1h-1v-1h-4v1h-1v-1h-2v1h-1v-1h-1v1h-1v-1h-6v1h-1v-1h-2v1h-1v-1h-11v1h-4v-1h-4v1h-1v-1h-1v1h-1v-1h-4v1h-1v-1h-2v1h-1v-1h-1v1h-1v-1h-13v1h-1v-1h-10v1h-1v-1h-4v1h-2v-1h-4v1h-1v-1h-1v1h-1v-1h-1v1h-6v-1h-1v1h-1v-1h-6v1h-1v-1h-4v1h-2v-1h-1v1h-1v-1h-3v1h-1v-1h-2v1h-2v-1h-2v1h-1v-1h-3v1h-6v-1h-6v1h-2v-1h-7v1h-1v-1h-4v1h-1v-1h-3v1h-2v-1h-1v1h-2v-1h-1v1h-3v-1h-4v1h-2v-1h-3v1h-3v-1h-2v1h-1v-1h-3v1h-1v-1h-6v1h-1v-1h-7v1h-2v-1h-3v1h-1v-1h-1v1h-1v-1h-1v1h-1v-1h-1v1h-1v-1h-2v1h-1v-1h-6z M277 305h2v-1h2v1h5v-1h2v1h20v-1h1v1h2v-1h2v1h1v-1h2v1h3v-1h3v1h7v-1h1v1h2v-1h8v1h2v-1h3v1h1v-1h4v1h4v-1h1v1h1v-1h1v1h2v-1h1v1h8v-1h4v1h1v-1h1v1h3v-1h1v1h6v-1h4v1h3v-1h1v1h4v-1h1v1h2v-1h5v1h2v-1h1v1h1v-1h1v1h6v-1h2v1h1v-1h2v1h3v-1h1v1h11v-1h3v1h1v-1h2v1h10v-1h1v1h1v-1h1v1h2v-1h1v1h4v-1h1v1h4v-1h1v1h6v-1h1v1h11v-1h3v1h6v-1h2v1h2v-1h1v1h4v-1h1v1h3v-1h1v1h3v-2h1v1h1v-2h1v2h1v1h10v-1h1v1h1v-1h6v1h2v-1h2v1h3v-1h3v1h7v-1h2v1h4v-1h1v1h4v-1h1v1h3v-1h1v1h1v-1h1v1h7v-1h2v1h2v-1h3v1h1v-1h2v1h5v-1h2v-1h1v2h1v-1h2v1h9v-1h1v1h2v-1h1v1h6v-1h5v1h2v-1h1v1h3v-1h1v1h7v-1h2v1h6v-1h1v1h1v-2h1v1h1v-2h1v2h1v1h6v-1h2v1h2v-1h1v1h1v-1h1v1h5v-1h3v1h6v-1h1v1h7v-1h2v1h9v-1h1v1h1v-1h3v1h6v-1h3v1h2v-1h1v1h4v-1h3v1h3v-1h1v1h16v-1h1v1h1v-1h1v1h6v-1h1v1h9v-1h2v1h4v-1h3v1h9v-1h1v1h4v-1h1v1h1v-1h1v1h4v-1h3v1h1v-1h7v1h4v-1h2v1h12v-2h1v1h1v1h4v-2h1v2h3v-1h2v1h3v-1h2v1h3v-1h1v1h3v-1h3v1h19v-1h1v1h2v-1h1v1h3v-1h3v1h3v-1h2v1h12v-1h2v1h2v-1h1v1h16v-1h1v1h1v-1h1v1h3v-1h1v1h5v-1h5v1h2v-1h2v1h1v-1h1v1h6v-1h3v1h6v-2h1v2h7v-1h1v1h5v-1h1v1h4v-1h2v1h1v-1h1v1h6v-1h1v1h2v-1h1v1h1v-1h1v1h4v-1h1v1h5v-1h2v1h5v-1h1v1h6v-1h1v1h2v-1h5v1h4v-1h1v1h2v-1h1v1h9v-1h1v1h1v-1h2v1h3v-1h2v1h4v-1h3v1h3v-1h3v1h1v-1h3v1h3v-1h2v-1h1v2h4v-1h1v1h2v-1h3v1h1v-1h1v1h4v-1h3v1h5v-1h1v1h3v-1h2v1h1v-1h1v1h10v-1h2v1h4v-1h1v1h3v-1h2v1h3v-1h2v1h3v-1h2v1h1v-1h1v1h2v-1h2v1h1v-1h1v1h4v-1h1v1h1v-1h1v1h12v-1h1v1h2v-1h3v-2h2v1h1v-1h2v1h3v1h3v-1h1v2h4v-1h1v1h6v-1h1v1h1v-1h3v1h8v-1h1v1h4v-1h1v1h3v-1h1v1h5v-1h1v1h6v-1h1v1h4v-2h1v2h3v-1h1v1h1v-1h1v1h4v-1h2v1h8v-1h2v1h3v-1h3v1h3v-1h2v1h6v-1h1v1h6v-1h1v1h2v-1h1v1h1v-1h1v1h3v-1h1v1h3v-1h5v1h4v-1h5v1h1v-1h2v1h1v-1h2v1h2v-1h2v1h5v-1h2v1h7v-1h2v1h3v-1h1v1h6v-1h1v1h1v-1h3v1h4v-1h1v1h4v-1h1v1h2v-1h2v1h3v-1h1v1h3v-1h1v1h4v-1h1v1h2v-1h1v1h3v-1h2v1h2v-1h1v1h5v-1h1v1h1v-1h3v1h1v-1h3v1h3v-1h2v1h2v-1h1v1h1v-1h2v5h-1v1h-1v-2h-1v1h-1v-1h-9v1h-1v-1h-6v1h-1v-1h-2v1h-1v-1h-3v1h-1v-1h-2v1h-2v-1h-4v1h-2v-1h-1v1h-1v-1h-1v1h-4v-1h-1v1h-1v-1h-3v1h-1v-1h-5v1h-1v-1h-6v1h-1v-1h-4v1h-1v-1h-4v1h-3v-1h-6v1h-2v-1h-1v1h-1v-1h-1v1h-6v-1h-2v1h-1v-1h-1v1h-1v-1h-1v1h-1v-1h-1v2h-2v-1h-1v-1h-1v1h-7v-1h-1v1h-2v-1h-1v1h-1v-1h-1v1h-3v-1h-1v1h-3v-1h-2v1h-1v-1h-4v1h-2v-1h-1v1h-3v-1h-5v1h-3v-1h-2v1h-4v-1h-2v1h-3v-1h-1v1h-1v-1h-1v1h-1v-1h-1v1h-4v-1h-2v1h-1v-1h-1v1h-2v-1h-3v1h-3v-1h-2v1h-1v-1h-1v1h-3v-1h-1v1h-3v-1h-6v1h-4v-1h-4v1h-4v-1h-1v1h-1v-1h-4v1h-1v-1h-1v1h-5v-1h-2v1h-2v-1h-1v1h-3v-1h-1v1h-4v1h-1v1h-1v-1h-1v1h-2v-1h-1v1h-2v-1h-3v-1h-1v-1h-2v1h-5v-1h-1v1h-3v-1h-3v1h-1v-1h-3v1h-1v-1h-2v1h-1v-1h-4v1h-1v-1h-2v1h-3v-1h-4v1h-1v-1h-1v1h-1v-1h-1v1h-1v-1h-5v1h-1v-1h-1v1h-1v-1h-3v1h-3v-1h-5v1h-2v-1h-4v1h-1v-1h-1v1h-5v-1h-5v1h-5v-1h-1v1h-1v-1h-1v1h-2v-1h-1v1h-1v-1h-3v1h-5v-1h-2v1h-1v-1h-2v1h-5v-1h-1v1h-3v-1h-3v1h-6v-1h-1v1h-1v-1h-2v1h-1v-1h-5v1h-10v-1h-2v1h-4v1h-1v-2h-3v1h-1v-1h-2v1h-2v-1h-1v1h-1v-1h-2v1h-2v-1h-2v1h-2v-1h-4v1h-2v1h-1v-2h-4v1h-1v-1h-2v1h-2v-1h-1v1h-1v-1h-1v1h-1v-1h-2v1h-1v-1h-8v1h-1v-1h-4v1h-1v-1h-1v1h-3v-1h-3v1h-2v-1h-1v1h-1v-1h-6v1h-2v-1h-9v1h-1v-1h-2v1h-3v-1h-3v1h-1v-1h-4v1h-1v-1h-6v1h-1v-1h-1v1h-1v-1h-3v1h-2v-1h-2v1h-4v-1h-4v1h-4v-1h-3v1h-1v-1h-1v1h-1v-1h-2v1h-1v-1h-3v1h-1v-1h-1v1h-1v-1h-3v1h-2v-1h-3v1h-2v-1h-2v1h-6v-1h-6v1h-5v-1h-3v1h-2v-1h-1v1h-1v-1h-7v1h-1v-1h-7v1h-1v-1h-1v1h-1v-1h-5v1h-1v-1h-2v1h-1v-1h-1v1h-2v-1h-1v1h-2v-1h-3v1h-1v-1h-8v1h-1v-1h-1v1h-1v-1h-1v1h-2v-1h-1v1h-2v-1h-8v1h-4v-1h-1v1h-1v-1h-2v1h-1v-1h-1v1h-3v-1h-1v1h-2v-1h-2v1h-4v-1h-1v1h-1v-1h-1v1h-3v-1h-3v1h-2v-1h-2v1h-1v-1h-4v1h-2v-1h-1v1h-3v-1h-3v1h-2v-1h-7v1h-4v-1h-2v1h-3v-1h-7v1h-2v-1h-1v1h-2v-1h-2v1h-5v-1h-2v1h-1v-1h-1v1h-1v-1h-6v1h-2v-1h-2v1h-3v-1h-4v1h-1v-1h-4v1h-1v-1h-9v3h-1v-3h-1v3h-1v-3h-3v1h-1v-1h-2v1h-1v-1h-3v1h-5v-1h-3v1h-1v-1h-1v1h-1v-1h-2v1h-1v-1h-2v1h-2v-1h-2v1h-1v-1h-1v1h-5v-1h-5v1h-3v-1h-2v1h-2v-1h-2v2h-1v-1h-1v1h-1v-1h-6v-1h-1v1h-1v-1h-1v1h-1v-1h-1v1h-3v-1h-3v1h-1v-1h-3v1h-3v-1h-1v1h-4v-1h-1v1h-4v-1h-1v1h-1v-1h-1v1h-2v-1h-2v1h-1v-1h-3v1h-2v-1h-1v1h-2v-1h-1v1h-3v-1h-2v1h-1v-1h-2v1h-1v-1h-2v1h-6v-1h-1v1h-2v-1h-1v1h-2v-1h-1v1h-1v2h-1v-2h-2v-1h-4v1h-10v-1h-1v1h-4v-1h-6v1h-1v-1h-2v1h-13v-1h-3v1h-1v-1h-1v1h-3v-1h-1v1h-3v-1h-1v1h-5v-1h-1v1h-1v-1h-3v1h-3v-1h-1v1h-1v-1h-3v1h-2v-1h-4v1h-3v-1h-3v1h-4v-1h-2v1h-1v-1h-2v1h-1v-1h-7v1h-3v-1h-2v1h-2v-1h-2v1h-3v-1h-2v1h-1v-1h-4v1h-2v-1h-1v1h-3v-1h-1v1h-1v-1h-1v1h-4v-1h-2v1h-3v-1h-1v1h-3v-1h-3v1h-2v-1h-1v1h-2v-1h-6v1h-2v-1h-3v1h-2v-1h-1v1h-1v-1h-2v1h-3v-1h-1v1h-3v-1h-5v1h-2v-1h-2v1h-3v-1h-2v1h-4v-1h-2v1h-1v-1h-2v1h-1v-1h-2v1h-2v-1h-2v1h-1v-1h-4v1h-4v-1h-3v1h-7v-1h-4v1h-3v-1h-1v1h-3z M277 335h1v-1h1v1h2v-1h2v1h6v-1h3v1h11v-1h1v1h5v-1h1v1h2v-1h4v1h1v-1h1v1h2v-1h2v1h1v-1h1v1h3v-1h2v1h11v-1h1v1h9v-1h1v1h1v-1h2v1h1v-1h1v1h1v-1h1v1h1v-1h1v1h2v-1h1v1h1v-1h2v1h3v-1h1v1h6v-1h3v1h1v-1h2v1h4v-1h2v1h3v-1h2v1h2v-1h1v1h1v-1h2v1h2v-1h1v1h1v-1h3v-1h2v-1h2v1h1v1h5v1h5v-1h1v1h1v-1h1v1h2v-1h3v1h1v-1h2v1h10v-1h1v1h7v-1h2v1h1v-1h1v1h4v-1h3v1h1v-1h1v1h6v-1h3v1h1v-1h2v1h4v-1h1v1h4v-1h5v1h1v-1h1v1h3v-2h1v1h1v-1h2v1h1v-1h1v2h2v-1h1v1h2v-1h2v1h2v-1h1v1h3v-1h1v1h1v-1h1v1h1v-1h1v1h1v-1h1v1h6v-1h2v1h1v-1h3v1h3v-1h1v1h2v-1h1v1h2v-1h2v1h3v-1h1v1h1v-1h1v1h3v-1h3v1h2v-1h2v1h1v-1h1v1h1v-1h2v1h1v-1h2v1h3v-1h1v1h2v-1h3v1h1v-1h2v1h4v-1h2v1h2v-1h2v1h4v-1h1v1h2v-1h1v1h3v-1h2v1h1v-1h1v1h1v-1h1v1h5v-1h1v1h2v-1h4v1h1v-1h2v1h4v-1h5v1h1v-1h1v1h1v-1h2v1h7v-1h3v1h1v-1h1v1h1v-1h3v1h2v-1h2v1h1v-1h2v1h1v-1h2v1h2v-1h6v1h6v-1h3v1h3v-1h1v1h1v-1h1v1h2v-1h1v1h1v-1h2v1h1v-1h2v-1h1v1h2v1h5v-1h3v1h4v-1h1v1h2v-1h1v1h8v-1h5v1h1v-1h3v1h8v-1h4v-1h2v2h3v-1h1v1h3v-1h1v1h2v-1h2v1h3v-1h1v1h3v-1h1v1h2v-1h1v1h3v-1h1v1h8v-1h1v1h5v-1h1v1h4v-1h1v1h3v-1h2v1h2v-1h1v1h9v-1h2v1h3v-1h1v1h4v-1h4v1h2v-2h1v2h1v-2h1v1h1v1h2v-1h1v1h1v-1h1v1h5v-1h3v1h5v-1h1v1h1v-1h3v1h4v-1h3v1h2v-1h7v1h1v-1h1v-1h2v-1h2v1h2v-1h1v1h2v1h2v1h5v-1h3v1h2v-1h1v1h1v-1h3v1h1v-1h3v1h9v-1h2v1h2v-1h5v1h5v-1h3v1h1v-1h3v1h3v-1h3v1h8v-1h3v-1h2v-1h1v-1h4v2h2v1h2v-1h2v1h1v1h2v-1h2v1h3v-1h1v1h2v-1h3v1h2v-1h1v1h1v-1h3v1h6v-1h1v1h1v-1h4v1h1v-1h1v1h1v-1h4v1h4v-1h1v1h1v-1h1v1h3v-1h3v1h5v-1h1v1h6v-1h7v1h7v-1h1v1h1v-1h1v1h1v-1h1v1h3v-1h2v1h2v-1h1v1h2v-1h3v1h2v-1h3v1h1v-1h1v1h2v-1h2v1h1v-1h5v-1h1v2h1v-1h7v1h4v-1h1v1h7v-1h1v1h5v-1h2v1h1v-1h1v1h1v-1h1v1h6v-1h2v1h3v-1h2v1h1v-1h3v1h5v-1h1v1h4v-1h3v1h9v-1h3v1h2v-1h2v1h1v-1h1v1h8v-1h2v1h5v-1h1v1h1v-1h7v-1h1v1h2v1h2v-1h1v1h8v-1h2v1h6v-1h1v1h2v-1h1v1h2v-1h1v1h4v-1h2v1h6v-1h1v1h3v-1h1v1h4v-1h3v1h2v-1h3v1h2v-1h4v1h5v-1h1v1h1v-1h4v1h1v-1h4v1h1v-1h1v1h1v-1h1v1h1v-1h2v1h1v-1h1v1h2v-1h1v1h4v-1h1v1h2v-1h1v1h1v-1h2v1h2v-1h1v1h1v-1h2v1h6v-1h1v1h4v-1h3v1h2v-1h3v1h2v-1h2v1h1v-1h2v1h3v-1h1v1h2v-1h5v1h3v-1h1v1h1v-1h1v1h1v-1h2v1h1v-1h1v1h2v-1h1v1h3v-1h2v1h6v-1h1v1h2v-1h3v1h8v-1h4v1h3v-1h1v1h3v-1h2v1h2v-1h6v1h3v-1h2v1h1v-1h3v1h1v-1h1v1h1v-1h5v1h2v4h-2v-1h-4v1h-6v-1h-1v1h-2v-1h-1v1h-1v-1h-1v1h-1v-1h-2v1h-3v-1h-6v1h-1v-1h-1v1h-1v-1h-1v1h-3v-1h-2v1h-1v-1h-2v1h-4v-1h-4v2h-1v-2h-7v1h-2v-1h-11v1h-1v-1h-6v1h-2v-1h-2v1h-1v-1h-4v1h-1v-1h-2v1h-1v-1h-2v1h-1v-1h-2v1h-2v-1h-7v1h-4v-1h-4v1h-2v-1h-3v1h-4v-1h-2v1h-1v-1h-2v1h-1v-1h-2v1h-1v-1h-3v1h-1v-1h-1v1h-1v-1h-3v1h-8v-1h-1v1h-1v-1h-2v1h-1v-1h-2v1h-2v-1h-3v1h-4v-1h-1v1h-3v-1h-2v1h-1v-1h-5v1h-2v-1h-1v1h-2v-1h-1v1h-1v-1h-3v1h-6v-1h-4v1h-3v-1h-3v1h-1v-1h-2v1h-4v-1h-3v1h-2v-1h-1v1h-1v-1h-1v1h-4v-1h-1v1h-3v-1h-1v1h-3v-1h-2v1h-3v-1h-1v1h-2v-1h-1v1h-1v-1h-3v1h-1v-1h-2v1h-2v-1h-1v1h-1v-1h-1v1h-1v-1h-4v1h-7v-1h-3v1h-1v-1h-1v1h-5v-1h-3v1h-1v-1h-5v1h-1v-1h-4v1h-1v-1h-7v1h-4v-1h-5v1h-1v-1h-2v1h-2v-1h-1v1h-3v-1h-6v1h-4v-1h-1v1h-6v1h-1v-1h-1v-1h-1v1h-3v-1h-2v1h-2v-1h-1v1h-3v-1h-5v1h-2v-1h-2v2h-1v-2h-7v1h-2v-1h-2v2h-1v-2h-1v1h-3v-1h-1v1h-2v-1h-7v1h-3v-1h-1v1h-2v-1h-3v1h-1v-1h-4v1h-1v-1h-2v1h-2v-1h-2v1h-2v-1h-4v1h-1v-1h-1v1h-1v-1h-3v1h-1v-1h-3v1h-2v-1h-1v1h-1v-1h-5v1h-2v-1h-7v1h-2v-1h-1v1h-1v-1h-3v1h-1v-1h-1v1h-4v1h-1v1h-2v1h-1v-1h-2v1h-1v-1h-1v1h-1v-2h-2v-1h-1v1h-1v-2h-3v1h-10v-1h-6v1h-2v-1h-1v1h-1v-1h-5v1h-4v-1h-3v1h-1v-1h-2v1h-1v-1h-1v1h-1v-1h-8v1h-4v-1h-1v1h-6v-1h-3v1h-2v1h-2v1h-1v-1h-2v1h-1v-1h-1v-1h-2v-1h-2v1h-1v-1h-1v1h-2v-1h-7v1h-2v-1h-1v1h-6v-1h-1v1h-1v-1h-3v1h-1v-1h-1v1h-1v-1h-2v1h-2v-1h-1v1h-1v-1h-6v1h-1v-1h-1v2h-1v-2h-2v1h-1v-1h-2v1h-2v-1h-2v1h-2v-1h-1v1h-7v-1h-14v1h-9v-1h-7v1h-3v-1h-2v1h-1v-1h-1v1h-2v-1h-2v1h-2v-1h-2v1h-4v-1h-2v1h-1v-1h-2v1h-1v-1h-1v1h-2v-1h-3v1h-1v1h-1v-2h-1v1h-1v-1h-1v1h-2v-1h-3v1h-3v-1h-7v1h-2v-1h-8v1h-2v-1h-1v1h-1v-1h-1v1h-1v-1h-4v1h-1v-1h-2v1h-1v-1h-1v1h-9v-1h-2v1h-4v-1h-2v1h-2v-1h-1v1h-1v-1h-3v1h-2v-1h-1v1h-2v-1h-3v1h-1v-1h-3v1h-2v-1h-1v1h-1v-1h-2v1h-2v-1h-2v1h-1v-1h-1v1h-1v-1h-7v1h-3v-1h-4v1h-1v-1h-2v1h-2v-1h-1v1h-3v-1h-7v1h-2v-1h-4v1h-1v-1h-1v1h-1v-1h-3v1h-3v-1h-1v1h-4v-1h-2v1h-2v-1h-1v1h-3v-1h-5v1h-3v-1h-2v1h-1v-1h-1v1h-2v-1h-12v1h-2v-1h-2v2h-1v-2h-2v1h-1v-1h-2v1h-1v-1h-3v1h-2v-1h-3v1h-5v-1h-1v1h-1v-1h-2v1h-1v-1h-8v1h-1v-1h-4v1h-1v-1h-1v1h-2v-1h-1v1h-1v-1h-4v1h-1v-1h-3v1h-1v-1h-1v1h-1v-1h-1v1h-3v-1h-1v1h-1v1h-2v-1h-2v1h-1v-1h-1v-1h-2v1h-1v-1h-1v1h-1v-1h-6v1h-1v-1h-1v1h-1v-1h-4v1h-1v-1h-2v1h-5v-1h-8v1h-3v-1h-4v1h-1v-1h-2v1h-1v-1h-2v1h-6v-1h-3v1h-3v-1h-4v1h-1v-1h-4v1h-3v-1h-1v1h-2v-1h-1v1h-4v-1h-1v2h-3v1h-2v1h-1v-2h-3v-1h-1v-1h-1v1h-2v-1h-1v1h-3v-1h-2v1h-1v-1h-2v1h-3v-1h-1v1h-3v-1h-1v1h-1v-1h-1v1h-1v-1h-3v1h-1v-1h-1v1h-2v-1h-6v1h-1v-1h-3v1h-2v-1h-3v1h-1v-1h-1v1h-1v-1h-4v1h-1v-1h-1v1h-1v-1h-1v1h-3v-1h-5v1h-1v-1h-1v1h-2v-1h-1v1h-1v-1h-7v1h-2v-1h-9v1h-6v-1h-3v1h-1v-1h-1v1h-1v-1h-6v2h-1v-2h-2v1h-1v-1h-8v1h-1v-1h-2v1h-1v-1h-1v1h-2v-1h-1v1h-1z M277 364h1v1h1v-1h3v1h1v-1h1v1h8v-1h1v1h5v-1h2v1h5v-1h3v1h1v-1h4v1h2v-1h3v1h6v-1h1v1h2v-1h1v1h1v-1h1v1h1v-1h1v1h5v-1h2v1h1v-1h1v1h3v-1h1v1h1v-1h3v1h2v-1h1v1h2v-1h3v1h2v-1h2v1h1v-1h3v1h3v-1h1v1h4v-1h1v1h1v-1h2v1h5v-1h8v1h5v-1h2v1h2v-1h1v1h4v-1h1v1h1v-1h2v1h1v-1h3v1h4v-1h4v1h6v-1h1v1h1v-1h1v1h1v-1h1v-1h1v1h2v-1h4v1h1v-1h1v1h1v-1h1v1h2v1h4v-1h2v1h6v-1h2v1h2v-1h1v1h2v-1h1v1h6v-1h3v1h1v-1h2v1h13v-1h1v1h1v-1h2v1h1v-1h5v1h1v-1h1v1h2v-1h1v1h1v-1h3v1h1v-1h3v-1h4v-1h1v2h1v-1h1v1h1v1h4v-1h3v1h5v-1h1v1h12v-1h3v1h2v-2h3v-1h1v1h1v1h3v1h1v-1h1v1h5v-1h2v1h1v-1h2v1h3v-1h4v1h4v-1h2v-1h2v2h1v-1h1v1h2v-1h2v1h3v-1h1v1h8v-1h1v1h2v-1h3v1h2v-1h1v1h2v-1h2v1h1v-1h1v1h1v-1h3v1h1v-1h3v1h4v-1h4v1h1v-1h1v1h2v-1h1v1h3v-1h1v1h2v-1h1v1h2v-1h1v1h4v-1h1v1h2v-1h1v1h1v-1h1v1h4v-1h3v1h2v-1h1v1h3v-1h3v1h1v-1h4v1h2v-1h1v1h2v-1h2v1h1v-1h1v1h1v-1h3v1h4v-1h3v1h1v-1h1v1h3v-1h1v1h1v-1h4v1h1v-1h2v1h2v-1h2v1h1v-1h1v1h4v-1h2v-1h3v-1h3v2h1v-1h1v1h3v1h3v-1h2v1h10v-1h1v1h3v-1h1v1h1v-1h2v1h1v-1h1v1h3v-1h4v1h1v-1h1v1h5v-1h2v1h15v-1h1v1h2v-1h1v-1h1v2h3v-1h6v1h1v-1h3v1h2v-1h2v1h5v-1h2v1h2v-1h1v1h2v-1h1v1h2v-1h2v1h8v-1h1v1h2v-1h1v1h3v-1h2v-1h1v1h3v1h5v-1h3v1h8v-1h2v1h1v-1h5v1h5v-1h2v1h2v-1h3v1h3v-1h2v1h3v-1h3v1h2v-1h2v1h1v-1h8v1h4v-1h1v-1h1v2h3v-1h2v1h3v-1h1v1h3v-1h1v1h1v-1h4v1h14v-1h3v1h2v-1h3v1h8v-1h2v1h1v-1h1v1h4v-1h1v1h7v-1h1v1h2v-1h1v1h6v-1h1v1h1v-1h4v1h1v-1h3v1h2v-1h3v1h6v-1h3v1h2v-1h1v1h2v-1h1v1h1v-1h2v1h3v-1h2v1h1v-1h1v1h7v-1h1v1h2v-1h2v1h3v-1h1v1h2v-1h1v1h1v-1h6v1h1v-1h1v1h8v-1h3v1h1v-1h1v1h4v-1h1v1h4v-1h1v1h3v-1h2v1h3v-1h4v1h1v-1h1v1h1v-1h1v1h2v-1h4v1h1v-1h2v1h8v-1h1v1h3v-1h1v1h3v-1h3v1h7v-1h2v1h8v-1h2v1h2v-1h2v1h4v-1h3v1h1v-1h5v1h3v-1h2v1h5v-1h3v1h7v-1h2v1h2v-1h7v1h3v-1h2v1h1v-1h1v1h2v-1h1v1h1v-1h1v1h4v-1h3v1h1v-1h3v1h1v-1h2v1h2v-1h1v1h9v-1h1v1h16v-1h1v1h2v-1h3v1h1v-1h1v1h4v-1h7v1h2v-1h5v1h1v-1h1v1h2v-1h2v1h4v-1h3v1h3v-1h2v1h3v-1h1v1h7v-1h4v1h8v-1h1v1h4v-1h2v1h1v-1h1v1h1v-1h3v1h3v-1h1v1h1v-1h1v1h2v-1h1v1h2v-1h1v1h4v-1h1v1h2v-2h1v1h1v1h10v-1h1v1h2v-1h1v1h3v-1h1v1h2v-1h1v1h2v-1h1v1h2v-1h2v1h1v-1h2v1h1v-1h1v1h2v-1h1v1h2v-1h2v-1h1v2h3v-1h2v1h1v-1h1v1h3v3h-5v1h-3v-1h-5v1h-1v-1h-10v2h-1v-2h-1v1h-1v-1h-5v1h-2v-1h-8v1h-1v-1h-3v1h-2v-1h-6v1h-1v-1h-1v1h-1v-1h-10v1h-2v-1h-1v1h-4v-1h-1v1h-2v-1h-7v1h-1v-1h-2v1h-1v-1h-4v1h-4v-1h-5v1h-2v-1h-1v1h-2v-1h-3v1h-1v-1h-2v1h-2v-1h-1v1h-2v-1h-4v1h-1v-1h-5v1h-3v-1h-4v1h-1v-1h-2v1h-4v-1h-9v1h-2v-1h-7v1h-1v-1h-6v1h-3v-1h-3v1h-3v-1h-3v1h-4v-1h-18v1h-1v-1h-1v1h-3v-1h-1v1h-2v-1h-17v1h-1v-1h-3v1h-1v-1h-2v1h-3v-1h-9v1h-1v-1h-9v1h-3v-1h-2v2h-1v-2h-6v1h-1v-1h-3v1h-1v-1h-7v1h-1v-1h-1v1h-1v-1h-1v1h-1v-1h-12v1h-3v1h-1v-2h-4v1h-1v-1h-4v1h-1v-1h-3v1h-1v-1h-5v1h-2v-1h-2v1h-2v-1h-6v1h-1v-1h-4v1h-1v-1h-4v1h-1v-1h-9v1h-2v-1h-7v1h-3v-1h-6v1h-1v-1h-12v1h-1v-1h-6v1h-4v-1h-1v1h-1v-1h-9v1h-1v-1h-2v1h-1v-1h-1v1h-1v-1h-1v1h-2v-1h-4v1h-2v-1h-3v1h-2v-1h-5v1h-3v-1h-3v1h-1v-1h-2v1h-1v-1h-1v1h-3v-1h-2v1h-2v-1h-2v1h-2v-1h-4v1h-2v-1h-1v2h-1v-2h-2v1h-1v-1h-1v1h-2v-1h-3v1h-1v-1h-3v1h-1v-1h-4v1h-5v-1h-9v2h-1v-2h-4v1h-1v-1h-4v1h-2v-1h-20v1h-3v-1h-3v1h-3v-1h-3v1h-1v-1h-5v1h-2v-1h-4v1h-5v-1h-5v1h-3v-1h-4v1h-1v-1h-5v1h-1v-1h-7v1h-2v-1h-4v1h-2v-1h-4v1h-4v-1h-1v1h-1v-1h-3v1h-1v-1h-3v1h-1v-1h-1v1h-3v-1h-2v1h-2v-1h-2v1h-2v-1h-3v1h-1v-1h-4v1h-1v-1h-2v1h-1v-1h-11v1h-3v-1h-1v1h-5v-1h-1v1h-1v-1h-1v1h-4v-1h-5v1h-1v-1h-2v1h-1v-1h-2v2h-1v-1h-2v1h-1v-1h-1v1h-3v-1h-2v1h-1v-1h-1v-1h-2v1h-1v-1h-1v1h-1v-1h-5v1h-6v-1h-14v1h-3v-1h-3v1h-1v-1h-2v1h-4v-1h-2v1h-2v-1h-2v1h-2v-1h-5v1h-1v-1h-1v1h-1v-1h-8v1h-2v-1h-5v1h-3v-1h-3v1h-2v-1h-2v1h-3v-1h-3v1h-2v-1h-3v1h-1v-1h-3v1h-1v-1h-1v1h-1v-1h-2v1h-1v-1h-1v1h-2v-1h-1v1h-3v-1h-2v1h-1v-1h-7v1h-2v-1h-11v1h-2v-1h-1v2h-1v-2h-1v2h-1v-1h-1v-1h-4v1h-1v-1h-2v1h-1v-1h-3v1h-8v-1h-4v1h-2v1h-2v-1h-1v1h-2v-1h-6v-1h-1v1h-2v-1h-2v1h-1v-1h-4v1h-4v-1h-6v1h-2v-1h-4v1h-4v1h-3v2h-1v-2h-1v-1h-3v-1h-2v1h-4v-1h-7v1h-1v-1h-18v1h-3v-1h-3v1h-1v-1h-18v1h-1v-1h-5v2h-1v-2h-1v1h-4v1h-1v-1h-1v1h-1v1h-1v-1h-1v1h-1v-1h-1v-1h-5v-1h-1v1h-1v-1h-2v1h-2v-1h-3v1h-1v-1h-6v1h-3v-1h-7v1h-1v-1h-2v1h-1v-1h-5v1h-3v-1h-1v1h-3v-1h-2v1h-2v-1h-2v1h-2v-1h-2v1h-1v-1h-7v1h-4v-1h-1v1h-1v-1h-6v1h-1v-1h-20v1h-1v-1h-2v1h-1v-1h-14v1h-4v-1h-1v1h-2v-1h-7v1h-1v-1h-1v1h-1v-1h-2v1h-4v-1h-6v1h-1v-1h-1v1h-2v-1h-4v1h-1v-1h-2z M277 395h2v1h2v-1h3v1h2v-1h4v1h2v-1h1v1h2v-1h1v1h3v-1h7v1h2v-1h3v1h7v-2h1v1h7v1h3v-1h2v1h1v-1h2v1h3v-1h1v1h1v-1h1v1h1v-1h2v1h1v-1h2v1h6v-1h1v1h5v-1h5v1h1v-1h7v1h2v-1h2v1h7v-1h1v1h1v-1h3v1h2v-1h1v1h10v-1h2v1h10v-1h3v1h1v-1h1v1h3v-1h1v1h6v-1h4v1h5v-1h1v1h3v-1h1v1h1v-1h1v1h3v-1h1v1h2v-1h3v1h1v-1h3v1h2v-1h7v1h4v-1h1v1h1v-1h3v1h2v-1h1v1h2v-1h4v1h2v-1h4v1h1v-1h2v1h3v-1h1v1h2v-1h1v1h2v-1h4v1h4v-1h2v1h1v-1h1v1h2v-1h1v1h1v-1h1v1h1v-1h1v1h1v-1h2v1h1v-1h1v1h2v-1h3v1h1v-1h1v1h2v-1h1v1h4v-1h1v1h2v-1h2v1h5v-1h1v1h5v-1h1v1h5v-1h2v1h1v-1h1v1h2v-1h2v1h2v-1h2v1h2v-1h6v1h1v-1h1v1h2v-1h1v1h2v-1h2v-1h1v2h1v-1h3v1h2v-1h4v1h4v-1h1v1h2v-1h1v1h2v-1h1v1h4v-1h1v1h5v-2h1v2h2v-1h2v1h1v-1h1v1h2v-1h3v1h2v-1h1v1h7v-1h1v1h4v-1h2v1h1v-1h2v1h1v-1h2v1h2v-1h1v1h3v-1h2v1h3v-1h1v1h5v-1h1v1h1v-1h2v1h1v-1h4v1h2v-1h1v1h9v-1h1v1h2v-1h2v1h4v-1h4v1h2v-1h3v1h1v-1h1v1h1v-1h3v1h5v-1h1v1h1v-1h2v1h2v-1h1v1h2v-1h1v1h6v-1h1v1h4v-1h1v1h2v-1h1v1h1v-1h1v1h1v-1h3v1h4v-1h2v1h1v-1h2v1h4v-1h4v1h6v-1h1v1h4v-1h4v1h2v-1h2v1h6v-1h5v1h1v-1h1v1h5v-1h1v1h2v-1h3v1h2v-1h1v1h1v-1h5v1h1v-1h2v1h1v-1h1v1h6v-1h4v1h4v-1h1v1h5v-1h2v1h1v-1h2v1h17v-1h1v1h1v-1h2v1h8v-1h1v1h2v-1h1v1h1v-1h1v1h1v-1h2v1h5v-1h3v1h7v-1h2v1h3v-1h1v1h3v-1h4v1h4v-1h3v1h2v-1h2v1h4v-1h2v1h1v-1h2v1h2v-1h1v1h1v-1h1v1h1v-1h2v1h3v-1h3v1h4v-1h2v1h1v-1h3v1h1v-1h2v1h2v-1h1v1h1v-1h2v1h3v-1h2v1h1v-1h1v1h1v-1h1v1h2v-1h1v1h4v-1h1v1h3v-1h2v1h2v-1h1v1h2v-1h3v1h2v-1h1v1h3v-1h2v1h14v-1h2v1h1v-1h1v1h2v-1h5v1h1v-1h2v1h5v-1h1v1h4v-1h3v1h4v-1h1v1h2v-1h1v1h2v-1h3v1h6v-1h3v1h1v-1h1v1h4v-1h3v1h2v-1h1v1h1v-1h1v1h2v-1h1v1h10v-1h1v1h4v-1h1v1h7v-1h1v1h4v-1h2v1h2v-1h1v1h3v-1h3v1h2v-1h2v1h3v-1h1v1h3v-1h1v1h9v-1h2v1h6v-1h3v1h2v-1h2v1h1v-1h1v1h6v-1h2v1h2v-1h1v1h1v-1h1v1h1v-1h2v1h3v-1h1v1h4v-1h3v1h3v-1h2v1h2v-1h3v1h3v-1h4v1h2v-1h1v1h1v-1h2v1h1v-1h2v1h7v-1h1v1h1v-1h2v1h8v-1h4v1h1v-1h2v1h4v-1h2v1h3v-1h2v1h5v-1h1v1h4v-1h1v1h1v-1h1v1h1v-1h1v1h3v-1h1v-1h1v2h4v-1h1v1h3v-1h1v1h2v-1h4v1h1v-1h2v1h5v-1h1v1h1v-1h1v1h1v-1h4v1h1v-1h2v1h4v-1h1v1h2v-1h2v1h4v-1h4v1h2v-1h1v1h3v-1h3v1h1v-1h3v1h1v-1h1v1h6v-1h1v1h1v-1h1v1h4v-1h1v1h3v-1h1v1h3v-1h2v1h3v-1h2v1h4v-1h3v1h4v-1h2v1h1v-1h2v1h2v-1h1v1h1v-1h1v1h3v-1h1v1h1v-1h2v1h2v3h-10v1h-2v-1h-8v1h-1v-1h-1v1h-1v-1h-4v1h-3v-1h-3v1h-1v-1h-12v1h-1v-1h-1v1h-2v-1h-2v1h-3v-1h-1v1h-1v-1h-4v1h-1v-1h-1v1h-4v-1h-4v1h-4v-1h-8v1h-2v-1h-4v1h-1v-1h-1v1h-2v-1h-3v1h-1v-1h-3v1h-1v-1h-2v1h-2v-1h-5v1h-1v-1h-9v1h-1v-1h-4v1h-1v-1h-1v1h-1v-1h-4v1h-2v-1h-1v1h-3v-1h-4v1h-1v-1h-2v1h-2v-1h-1v1h-1v-1h-2v1h-5v-1h-2v1h-3v-1h-7v1h-3v-1h-7v1h-1v-1h-3v1h-2v-1h-1v1h-2v-1h-3v1h-2v-1h-2v1h-2v-1h-2v1h-1v-1h-9v1h-1v-1h-7v1h-3v-1h-2v1h-2v-1h-2v1h-2v-1h-2v1h-2v-1h-8v1h-3v-1h-1v1h-1v-1h-3v1h-1v-1h-4v1h-1v-1h-1v1h-3v-1h-1v1h-1v-1h-4v1h-2v-1h-2v1h-1v-1h-2v1h-2v-1h-6v1h-7v-1h-7v1h-1v-1h-1v1h-1v-1h-4v1h-2v-1h-3v1h-2v-1h-4v1h-1v-1h-2v1h-1v-1h-1v1h-2v-1h-3v1h-1v-1h-1v1h-1v-1h-3v1h-1v-1h-3v1h-1v-1h-3v1h-1v-1h-3v1h-2v-1h-2v1h-1v-1h-6v1h-2v-1h-2v1h-1v-1h-2v1h-1v-1h-7v1h-3v-1h-2v1h-6v1h-1v-1h-3v-1h-2v1h-3v-1h-1v1h-1v-1h-3v1h-1v-1h-8v1h-1v-1h-4v1h-3v-1h-1v1h-1v-1h-1v1h-2v-1h-1v1h-3v-1h-2v1h-2v-1h-4v1h-3v-1h-23v1h-1v-1h-2v1h-4v-1h-3v1h-1v-1h-4v1h-3v-1h-2v1h-5v-1h-2v1h-1v-1h-7v1h-1v-1h-5v1h-4v-1h-2v1h-2v-1h-3v1h-3v-1h-2v1h-1v-1h-1v1h-1v-1h-1v1h-3v-1h-1v1h-1v-1h-6v1h-1v-1h-4v1h-3v-1h-1v1h-1v-1h-3v1h-3v-1h-12v1h-2v-1h-1v1h-1v-1h-3v1h-3v-1h-1v1h-3v-1h-1v1h-1v-1h-1v1h-3v-1h-6v1h-1v-1h-9v1h-5v-1h-2v1h-4v-1h-5v1h-1v-1h-5v1h-1v-1h-8v1h-1v-1h-3v1h-1v-1h-2v1h-5v-1h-1v1h-2v-1h-1v1h-2v-1h-2v1h-1v-1h-4v1h-2v-1h-5v1h-5v-1h-5v1h-1v-1h-1v1h-1v-1h-10v1h-1v-1h-1v1h-1v-1h-1v1h-2v-1h-2v1h-2v-1h-2v1h-3v-1h-1v1h-1v-1h-1v1h-1v-1h-1v1h-1v-1h-2v1h-1v-1h-3v1h-1v-1h-1v1h-3v-1h-1v1h-1v-1h-1v1h-3v-1h-4v1h-1v-1h-1v1h-1v-1h-1v1h-3v-1h-3v1h-1v-1h-13v1h-1v-1h-3v1h-1v-1h-1v1h-4v-1h-2v1h-1v-1h-1v1h-1v-1h-3v1h-1v-1h-1v1h-1v-1h-4v1h-1v-1h-2v1h-4v-1h-1v1h-1v-1h-1v1h-2v-1h-1v1h-4v-1h-1v1h-1v-1h-8v1h-1v-1h-2v1h-1v-1h-3v1h-1v-1h-4v1h-1v-1h-5v1h-3v-1h-3v1h-1v-1h-3v1h-2v-1h-3v1h-2v-1h-5v1h-6v-1h-3v1h-1v-1h-3v1h-3v-1h-3v1h-1v-1h-2v1h-1v-1h-4v1h-2v-1h-2v1h-2v-1h-2v1h-3v-1h-4v1h-1v-1h-7v1h-4v-1h-5v1h-1v-1h-4v1h-1v-1h-5v1h-1v-1h-10v1h-3v-1h-9v1h-1v-1h-2v1h-3v-1h-3v1h-1v-1h-1v1h-1v-1h-6v1h-2v-1h-19v1h-3v-1h-5v1h-1v-1h-1v1h-1v-1h-1v1h-2v-1h-2v1h-2v-1h-1v1h-3v-1h-2v1h-1v-1h-1v1h-1v-1h-1v1h-2v-1h-14v1h-3v-1h-6v1h-3v-1h-1v1h-2v-1h-3v1h-2v-1h-3v1h-4v-1h-6v1h-3v-1h-4v1h-3v-1h-1v1h-3v-1h-11v1h-5v-1h-3v1h-1v-1h-3v1h-1v-1h-1v1h-3v-1h-8v1h-1v-1h-1v1h-2v-1h-5v1h-1v-1h-4v1h-1v-1h-2v1h-1v-1h-6v1h-6v-1h-2v1h-1v-1h-1v1h-1v-1h-2z M277 425h1v1h14v-1h1v1h1v-1h3v1h3v-1h1v1h1v-1h2v1h3v-1h1v1h14v-1h2v1h4v-1h5v1h4v-1h3v1h8v-1h3v1h8v-1h2v1h1v-1h1v1h6v-1h1v1h1v-1h1v1h9v-1h2v1h1v-1h2v1h1v-1h1v1h1v-1h1v1h2v-1h3v1h24v-1h1v1h4v-1h4v1h3v-1h1v1h11v-1h2v1h1v-1h2v1h4v-1h1v1h2v-1h2v1h7v-1h2v1h6v-1h1v1h7v-1h3v1h2v-1h1v1h4v-1h2v1h1v-1h2v1h2v-1h1v1h2v-1h3v1h1v-1h1v1h3v-1h2v1h1v-1h1v1h2v-1h1v1h12v-1h1v1h9v-1h1v1h11v-1h1v1h4v-1h1v1h5v-1h1v1h2v-1h4v1h2v-1h2v1h1v-1h2v1h11v-1h1v1h3v-1h1v1h7v-1h1v1h2v-1h1v1h8v-1h1v1h5v-1h3v1h3v-1h1v1h6v-1h1v1h1v-1h1v1h1v-1h1v1h5v-1h2v1h10v-1h3v1h6v-1h1v1h3v-1h1v1h8v-1h1v1h7v-1h1v1h6v-1h2v1h2v-1h2v1h1v-1h2v1h4v-1h5v1h2v-1h5v1h3v-1h1v1h2v-1h1v1h6v-1h2v1h2v-1h1v1h3v-1h1v1h1v-1h1v1h5v-1h3v1h7v-1h1v1h10v-1h1v1h2v-1h2v1h2v-1h2v1h3v-1h1v1h11v-1h2v1h1v-1h3v1h1v-1h1v1h3v-1h1v1h2v-1h1v1h3v-1h1v1h4v-1h1v1h1v-1h1v1h1v-1h1v1h6v-1h1v1h8v-1h1v1h8v-1h1v1h3v-1h1v1h6v-1h2v1h5v-1h3v1h4v-1h4v1h1v-1h2v1h2v-1h1v1h4v-1h2v1h3v-1h1v1h1v-1h1v1h4v-1h2v1h4v-1h1v1h6v-1h1v1h7v-1h3v1h2v-1h2v1h1v-1h1v1h2v-1h2v1h4v-1h1v1h1v-1h2v1h7v-1h4v1h4v-1h1v1h5v-1h1v1h5v-1h2v1h4v-2h1v2h6v-1h3v-1h2v1h3v1h2v-1h1v1h6v-1h1v1h4v-1h1v1h8v-1h2v1h5v-1h2v1h2v-1h2v1h8v-1h4v1h1v-1h1v1h1v-1h3v1h12v-1h3v1h1v-1h1v1h9v-1h2v1h4v-1h1v1h1v-1h3v1h4v-1h1v1h8v-1h1v1h3v-1h1v1h4v-1h2v1h3v-1h1v1h8v-1h3v1h2v-1h1v1h12v-1h2v1h1v-1h2v1h13v-1h2v1h15v-1h3v1h3v-1h2v1h8v-1h1v1h1v-1h1v1h11v-1h2v1h4v-2h1v1h1v-1h3v1h3v-1h1v2h13v-1h4v1h9v-1h1v1h1v-1h3v1h2v-1h1v1h1v-1h1v1h14v-1h1v1h4v-1h1v1h5v-1h1v1h2v-1h1v1h5v-1h1v1h3v-1h1v1h2v-1h1v1h3v-1h2v1h6v-1h1v1h3v-1h2v1h5v-1h1v1h34v-1h1v1h14v-1h1v1h7v-1h1v1h2v-1h1v1h11v-1h1v1h1v-1h1v1h12v-1h4v1h3v-1h1v1h2v4h-1v-1h-3v1h-1v-1h-1v1h-2v-1h-2v1h-4v-1h-3v1h-4v-1h-6v1h-3v-1h-3v1h-6v-1h-1v1h-2v-1h-2v1h-4v-1h-3v1h-3v-1h-6v1h-3v-1h-2v1h-3v-1h-3v1h-3v-1h-3v1h-2v-1h-1v1h-1v-1h-4v1h-5v-1h-3v1h-1v-1h-4v1h-1v-1h-1v1h-3v-1h-1v1h-1v-1h-2v1h-1v-1h-2v1h-3v-1h-2v1h-1v-1h-3v1h-1v-1h-1v1h-2v-1h-1v1h-2v-1h-4v1h-1v-1h-2v1h-1v-1h-2v1h-6v-1h-1v1h-1v-1h-4v1h-3v-1h-2v1h-2v-1h-10v1h-1v-1h-4v1h-3v-1h-6v1h-4v-1h-1v1h-4v-1h-2v1h-1v-1h-1v1h-1v-1h-3v1h-1v-1h-1v2h-6v-1h-3v-1h-1v1h-1v-1h-1v1h-2v-1h-6v1h-3v-1h-9v1h-2v-1h-5v1h-1v-1h-1v1h-1v-1h-3v1h-1v-1h-1v1h-2v-1h-2v1h-1v-1h-4v1h-1v-1h-2v1h-3v-1h-10v1h-2v-1h-1v1h-4v-1h-2v1h-5v-1h-3v1h-3v-1h-1v1h-2v-1h-2v1h-1v-1h-1v1h-3v-1h-3v1h-1v-1h-3v1h-1v-1h-3v1h-1v-1h-1v1h-1v-1h-5v1h-2v-1h-3v1h-9v-1h-9v1h-1v-1h-2v2h-1v-2h-2v1h-1v-1h-2v1h-2v-1h-4v1h-3v-1h-2v1h-3v-1h-3v1h-1v-1h-2v1h-2v-1h-2v1h-1v-1h-2v1h-3v-1h-8v1h-2v-1h-2v1h-2v-1h-1v1h-1v-1h-1v1h-2v-1h-3v1h-2v-1h-2v1h-1v-1h-1v1h-1v-1h-3v1h-2v-1h-1v1h-1v-1h-7v2h-1v-1h-1v2h-1v-1h-1v-1h-2v1h-1v-2h-3v1h-1v-1h-1v1h-5v-1h-3v1h-1v-1h-10v1h-2v-1h-2v1h-2v-1h-1v1h-1v-1h-1v1h-1v-1h-1v1h-3v-1h-1v1h-2v-1h-2v1h-1v-1h-10v1h-1v-1h-1v1h-1v-1h-1v1h-1v-1h-2v1h-1v-1h-5v1h-3v-1h-1v1h-2v-1h-3v1h-2v-1h-2v1h-1v-1h-3v1h-1v-1h-1v1h-1v-1h-3v1h-3v-1h-2v1h-1v-1h-1v1h-1v-1h-2v1h-5v-1h-1v1h-1v-1h-4v1h-1v-1h-2v1h-1v-1h-1v1h-1v-1h-4v1h-1v1h-1v-2h-8v1h-2v-1h-1v1h-2v-1h-5v1h-1v-1h-1v1h-2v-1h-5v1h-4v-1h-1v1h-3v-1h-1v1h-1v-1h-3v1h-2v-1h-2v1h-1v-1h-8v1h-1v-1h-1v1h-2v-1h-7v1h-1v-1h-4v1h-1v-1h-2v1h-4v-1h-5v1h-1v-1h-1v1h-1v-1h-1v1h-1v-1h-2v1h-1v-1h-4v1h-1v-1h-1v1h-1v-1h-1v1h-1v-1h-2v1h-1v-1h-4v1h-2v-1h-2v1h-1v-1h-1v1h-3v-1h-1v1h-4v-1h-7v1h-2v-1h-1v1h-1v-1h-1v1h-1v-1h-1v1h-2v-1h-1v1h-4v-1h-8v1h-3v-1h-4v1h-1v-1h-1v1h-1v-1h-1v1h-6v-1h-2v1h-1v-1h-1v1h-1v-1h-6v1h-3v-1h-4v1h-3v-1h-1v1h-1v-1h-1v1h-1v-1h-2v1h-1v-1h-3v1h-3v-1h-1v1h-1v-1h-6v1h-4v-1h-1v1h-3v-1h-3v1h-6v-1h-8v1h-2v-1h-4v1h-3v-1h-2v1h-2v-1h-2v1h-3v-1h-1v1h-1v-1h-1v1h-1v-1h-3v2h-1v-2h-1v1h-3v-1h-2v1h-1v-1h-1v1h-8v-1h-2v1h-1v-1h-1v1h-1v-1h-4v1h-2v-1h-3v1h-4v-1h-2v1h-4v-1h-7v1h-2v-1h-2v1h-1v-1h-1v1h-1v-1h-3v1h-1v-1h-1v1h-1v-1h-7v1h-3v-1h-3v1h-6v-1h-1v1h-1v-1h-1v1h-3v-1h-1v1h-6v-1h-2v1h-4v-1h-1v1h-3v-1h-4v1h-1v-1h-4v1h-1v-1h-2v1h-3v-1h-2v1h-4v-1h-5v1h-1v-1h-2v1h-1v-1h-1v1h-5v-1h-8v1h-1v-1h-2v1h-1v-1h-2v1h-1v-1h-1v1h-4v-1h-6v1h-1v-1h-1v1h-1v-1h-3v1h-1v-1h-3v1h-1v-1h-6v1h-2v-1h-2v1h-1v-1h-2v1h-1v-1h-1v2h-1v-2h-3v1h-3v-1h-1v1h-4v-1h-3v1h-4v-1h-2v1h-5v-1h-1v1h-4v-1h-3v1h-1v-1h-1v1h-1v-1h-1v1h-4v-1h-1v1h-2v-1h-2v2h-1v-1h-1v-1h-2v1h-2v-1h-2v1h-3v-1h-5v1h-3v-1h-4v1h-1v-1h-1v1h-1v-1h-1v1h-1v-1h-5v1h-1v-1h-3v1h-1v-1h-2v1h-1v-1h-1v1h-1v-1h-1v1h-1v-1h-1v1h-1v-1h-3v1h-2v-1h-6v1h-2v-1h-6v1h-5v-1h-2v1h-1v-1h-2z M277 455h1v1h3v-1h1v1h1v-1h1v1h1v-1h3v1h1v-1h4v1h4v-1h4v1h4v-1h3v1h2v-1h1v1h1v-1h1v1h5v-1h1v1h2v-1h1v1h5v-1h1v1h6v-1h1v1h8v-1h2v1h1v-1h3v1h3v-1h1v1h1v-1h2v1h3v-1h1v1h1v-1h1v1h1v-1h2v1h1v-1h3v1h2v-1h3v1h1v-1h2v1h1v-1h2v1h2v-1h1v1h2v-1h5v1h1v-1h3v1h1v-1h2v1h2v-1h3v1h8v-1h1v1h2v-1h1v1h1v-1h3v1h2v-1h2v1h2v-1h4v1h1v-1h2v1h1v-1h1v1h5v-1h1v1h3v-1h2v1h3v-1h1v1h1v-1h3v1h1v-1h3v1h1v-1h1v1h2v-1h5v1h3v-1h1v1h2v-1h3v1h2v-1h2v1h4v-1h1v1h1v-1h2v1h1v-1h3v1h8v-1h1v1h1v-1h1v1h1v-1h3v1h2v-1h2v1h1v-1h3v1h2v-1h1v1h2v-1h2v1h4v-1h3v1h8v-1h1v1h5v-1h3v1h3v-1h3v1h2v-1h1v1h3v-1h3v1h2v-2h1v2h5v-1h2v1h1v-1h1v1h1v-1h1v1h7v-1h2v1h1v-1h3v1h1v-1h2v1h1v-1h3v1h3v-1h6v1h2v-1h2v1h2v-1h3v1h8v-1h3v1h1v-1h3v1h4v-1h2v1h2v-1h1v1h1v-1h1v1h1v-1h4v1h1v-1h2v1h1v-1h1v1h3v-1h2v1h1v-1h1v1h7v-1h3v1h1v-1h1v1h6v-1h1v1h1v-1h1v1h1v-1h5v1h2v-1h3v1h1v-1h2v1h1v-1h3v1h1v-1h1v1h1v-1h1v1h1v-1h2v1h4v-1h2v-1h1v1h1v1h1v-1h4v1h3v-1h2v1h1v-1h2v1h4v-1h5v1h7v-1h2v1h5v-1h1v1h7v-1h4v1h2v-1h5v1h1v-1h2v1h1v-1h1v1h10v-1h2v1h5v-1h1v1h4v-1h1v1h2v-1h1v1h1v-1h1v1h1v-1h2v1h5v-1h3v1h1v-1h1v1h1v-1h1v1h1v-1h1v1h8v-1h2v1h1v-1h4v1h2v-1h2v1h2v-1h1v1h5v-1h1v1h7v-1h3v1h8v-1h1v1h3v-1h1v1h2v-1h1v1h2v-1h3v1h2v-1h1v1h1v-1h3v1h2v-1h2v1h2v-1h1v1h1v-1h3v1h4v-1h1v1h1v-1h3v1h2v-1h1v1h1v-1h1v1h1v-1h2v1h2v-1h1v1h1v-2h1v2h1v-1h1v1h9v-1h1v1h3v-1h1v1h3v-1h12v1h2v-1h2v1h2v-1h2v1h4v-1h2v1h2v-1h1v1h1v-1h3v1h2v-1h3v1h2v-1h1v1h10v-1h1v1h6v-1h1v1h1v-1h1v1h3v-1h4v1h1v-1h1v1h1v-1h1v1h5v-1h3v1h5v-1h3v1h1v-1h2v1h3v-1h2v1h3v-1h2v1h3v-1h2v1h1v-1h1v1h8v-1h2v1h8v-1h1v1h2v-1h3v1h3v-1h1v1h1v-1h1v1h1v-1h1v1h3v-1h1v1h1v-1h1v1h3v-1h2v-1h2v2h1v-1h6v1h3v-1h1v1h1v-1h2v1h1v-1h3v1h2v-1h2v1h7v-1h1v1h1v-1h5v1h4v-1h3v1h2v-1h1v1h2v-1h3v1h2v-1h1v1h2v-1h1v-1h1v2h4v-1h1v1h4v-1h1v1h5v-1h2v1h19v-1h2v1h1v-1h1v1h1v-1h2v1h1v-1h1v1h3v-1h2v1h2v-1h1v1h4v-1h1v1h1v-1h2v1h6v-1h3v1h2v-1h1v1h3v-1h1v1h1v-2h1v1h1v1h3v-1h5v1h1v-1h4v1h2v-1h4v1h1v-1h1v1h5v-1h2v1h2v-1h1v1h2v-1h3v1h4v-1h1v1h3v-1h1v1h3v-1h3v1h5v-1h1v1h4v-1h2v1h2v-1h1v1h1v-1h1v1h2v-1h3v1h1v-1h2v1h1v-1h1v1h5v-1h1v1h5v-1h2v1h3v-1h1v1h4v-1h1v1h1v-1h1v1h6v-1h2v1h3v-1h2v1h1v-1h2v1h7v-1h2v1h7v-1h1v1h2v-1h3v1h2v-1h1v1h5v-1h2v1h1v-1h2v1h1v-1h2v1h2v-1h7v1h3v-1h1v1h1v-1h1v1h3v-1h1v1h1v-1h2v1h2v3h-4v1h-2v-1h-7v1h-3v-1h-3v1h-1v-1h-1v1h-4v-1h-2v1h-1v-1h-2v1h-1v-1h-2v1h-2v-1h-6v1h-1v-1h-2v1h-2v-1h-8v1h-1v-1h-1v1h-1v-1h-3v1h-2v-1h-4v1h-2v-1h-2v1h-2v-1h-8v1h-1v-1h-1v1h-1v-1h-1v1h-1v-1h-1v1h-2v-1h-1v1h-2v-1h-2v1h-2v-1h-1v1h-2v-1h-8v1h-1v-1h-7v1h-5v-1h-7v1h-1v-1h-2v1h-2v-1h-5v1h-2v-1h-5v1h-3v-1h-1v1h-1v-1h-5v1h-1v-1h-2v1h-5v-1h-2v1h-3v-1h-1v1h-1v-1h-11v1h-1v-1h-2v1h-1v-1h-3v1h-2v-1h-2v1h-1v-1h-6v1h-6v-1h-1v1h-3v-1h-5v1h-1v-1h-2v1h-1v-1h-7v1h-2v-1h-2v1h-1v-1h-1v1h-4v-1h-1v1h-1v-1h-2v1h-2v-1h-4v1h-2v-1h-3v1h-1v-1h-2v1h-3v-1h-5v1h-5v-1h-1v1h-3v-1h-1v1h-3v-1h-2v1h-1v-1h-6v1h-4v-1h-2v1h-1v-1h-1v1h-1v-1h-1v1h-1v-1h-1v1h-1v-1h-4v1h-1v-1h-2v1h-1v-1h-3v1h-1v-1h-3v1h-3v-1h-4v1h-2v1h-2v-2h-1v1h-2v-1h-9v1h-1v-1h-3v1h-3v-1h-6v1h-4v-1h-3v1h-1v1h-1v-2h-1v1h-1v-1h-1v1h-1v-1h-3v1h-2v-1h-2v1h-1v-1h-3v1h-2v-1h-4v1h-3v-1h-1v1h-6v-1h-5v1h-2v-1h-5v1h-1v-1h-1v1h-1v-1h-7v1h-4v-1h-1v1h-2v-1h-3v1h-1v-1h-1v1h-1v-1h-5v1h-2v-1h-3v1h-1v-1h-5v1h-2v-1h-1v1h-2v-1h-1v1h-2v-1h-1v1h-1v-1h-1v1h-1v-1h-3v1h-1v-1h-2v1h-1v-1h-2v1h-2v-1h-1v1h-1v-1h-2v1h-3v-1h-2v1h-5v-1h-8v1h-3v-1h-4v1h-1v-1h-5v1h-2v-1h-3v1h-1v-1h-3v1h-1v-1h-2v1h-3v-1h-3v1h-1v-1h-7v1h-3v-1h-1v1h-3v-1h-3v1h-6v-1h-5v1h-1v-1h-3v1h-2v-1h-3v1h-1v-1h-1v1h-1v-1h-1v1h-3v-1h-2v1h-1v-1h-3v1h-2v-1h-3v1h-3v-1h-1v1h-2v-1h-2v1h-2v-1h-4v2h-1v-1h-1v-1h-2v1h-1v-1h-3v1h-1v-1h-2v1h-2v-1h-2v1h-4v-1h-3v1h-2v-1h-8v1h-2v-1h-2v1h-1v-1h-2v1h-1v-1h-1v1h-2v-1h-3v1h-1v-1h-1v1h-2v-1h-3v1h-1v-1h-3v1h-1v-1h-3v1h-1v-1h-9v1h-2v-1h-1v1h-1v-1h-2v1h-1v-1h-1v1h-2v-1h-10v1h-1v-1h-1v1h-1v-1h-2v1h-1v-1h-1v1h-1v-1h-1v1h-1v-1h-2v1h-1v-1h-2v1h-3v-1h-2v1h-1v-1h-2v1h-4v-1h-1v1h-1v-1h-1v1h-1v-1h-2v1h-1v-1h-5v1h-4v-1h-3v1h-4v-1h-2v1h-2v-1h-5v1h-2v-1h-3v1h-1v-1h-1v1h-1v-1h-2v1h-5v-1h-1v1h-2v-1h-4v1h-2v-1h-2v1h-2v-1h-1v1h-5v-1h-2v1h-1v-1h-7v1h-2v-1h-4v1h-1v-1h-2v1h-1v-1h-5v1h-2v-1h-9v1h-6v-1h-3v1h-3v-1h-2v1h-3v-1h-3v1h-2v-1h-2v1h-2v-1h-4v1h-6v-1h-10v1h-1v-1h-1v1h-1v-1h-6v1h-1v-1h-4v1h-1v-1h-2v1h-1v-1h-2v1h-1v-1h-1v1h-2v-1h-1v1h-4v-1h-2v1h-3v-1h-2v1h-4v-1h-2v1h-1v-1h-2v1h-2v-1h-2v1h-2v-1h-3v1h-4v-1h-2v1h-2v-1h-2v1h-4v-1h-6v1h-2v-1h-4v1h-1v-1h-5v1h-4v-1h-7v1h-1v-1h-5v1h-1v-1h-1v1h-2v-1h-3v1h-1v-1h-3v1h-2v-1h-3v1h-5v-1h-2v1h-2v-1h-4v1h-3v-1h-2v1h-1v-1h-3v1h-1v-1h-1v1h-1v-1h-2v1h-1v1h-1v-2h-2v1h-1v-1h-2v1h-1v-1h-4v1h-1v-1h-1v1h-2v-1h-1v1h-3v-1h-2v1h-2v-1h-8v1h-1v-1h-1v1h-1v-1h-8v1h-2v-1h-2v1h-4v-1h-1v1h-2v-1h-5v1h-1v-1h-2v1h-3v-1h-1v1h-1v-1h-1v1h-3v-1h-1v1h-3v-1h-1v1h-3v-1h-2v1h-1v-1h-1v1h-1v-1h-2v1h-2v-1h-1v1h-1v-1h-1v1h-1v-1h-4v1h-3v-1h-6v1h-1v-1h-13v1h-1v-1h-2v1h-2v-1h-3v1h-4z M277 487h1v-1h1v1h1v-1h1v1h10v-1h2v1h1v-1h5v1h1v-1h1v1h2v-1h1v1h1v-1h2v1h1v-1h1v1h4v-1h2v1h1v-1h1v1h3v-1h2v1h4v-1h1v1h5v-1h1v1h6v-1h4v1h1v-1h1v1h2v-1h2v1h9v-1h3v1h1v-1h1v1h8v-1h1v1h4v-1h2v1h6v-1h2v1h2v-1h1v1h8v-1h1v1h2v-1h3v1h5v-1h3v1h5v-1h1v1h7v-1h2v1h3v-1h1v1h1v-1h1v1h5v-1h3v1h3v-1h10v1h5v-2h1v2h7v-1h3v1h12v-1h1v1h2v-1h3v1h1v-1h2v1h2v-1h2v1h2v-1h1v1h4v-1h2v1h5v-2h1v1h1v1h4v-1h1v1h2v-1h1v1h8v-1h2v1h1v-1h1v1h1v-1h1v1h5v-1h1v1h1v-1h2v1h2v-1h3v1h1v-1h3v1h1v-1h1v1h5v-1h3v1h3v-1h1v1h5v-1h3v1h1v-1h1v1h2v-1h5v1h3v-1h5v1h1v-1h8v1h1v-1h1v1h5v-1h3v1h1v-1h4v1h1v-1h1v1h4v-1h1v1h1v-1h1v1h5v-1h1v1h1v-1h3v1h1v-1h1v1h3v-1h6v1h2v-1h1v1h8v-1h1v1h3v-1h1v1h2v-1h1v1h1v-1h1v1h2v-1h3v1h1v-1h4v1h1v-1h3v-1h1v2h2v-1h2v1h4v-1h1v1h5v-1h1v1h5v-1h1v1h1v-1h2v1h2v-1h1v1h1v-1h3v1h3v-1h1v1h2v-1h1v1h3v-1h1v1h2v-1h1v1h1v-1h6v1h1v-1h4v1h1v-1h1v1h2v-1h3v1h1v-1h1v1h1v-1h2v1h1v-1h1v1h2v-1h2v1h2v-1h2v1h1v-1h2v1h5v-1h2v1h3v-1h3v1h1v-1h2v1h1v-1h6v1h1v-1h1v1h1v-1h2v1h1v-1h1v1h2v-1h3v1h4v-1h2v1h2v-1h2v1h1v-1h2v1h2v-1h4v1h2v-1h1v1h1v-1h2v1h2v-1h4v1h3v-1h4v1h1v-1h1v1h3v-1h3v1h10v-1h1v1h1v-1h5v1h1v-1h1v1h2v-1h4v1h3v-1h2v1h3v-1h1v1h3v-1h2v1h2v-1h1v1h3v-1h1v1h1v-1h2v1h2v-1h4v1h3v-1h3v1h1v-1h1v1h2v-1h4v1h2v-1h1v1h3v-1h1v1h1v-1h1v1h1v-1h1v1h2v-1h4v1h5v-1h1v1h5v-1h2v1h3v-1h1v1h1v-1h3v1h1v-1h1v1h1v-1h6v1h7v-1h1v1h4v-1h1v1h2v-1h1v1h6v-1h5v1h3v-1h3v1h1v-1h1v1h3v-1h3v1h1v-1h4v1h2v-1h1v1h2v-1h4v1h4v-1h1v1h2v-2h1v1h1v1h1v-1h1v1h7v-1h3v1h6v-1h4v1h5v-1h1v1h2v-1h1v1h1v-1h1v1h3v-1h3v1h3v-1h2v1h3v-1h1v1h6v-1h3v1h1v-1h2v1h2v-1h3v1h1v-1h1v1h3v-1h2v1h1v-1h1v1h5v-1h2v1h4v-1h1v1h1v-1h1v1h1v-1h3v1h1v-1h4v1h2v-1h1v1h7v-1h1v1h1v-1h3v1h5v-1h2v1h2v-1h1v1h3v-1h1v1h7v-1h1v1h2v-1h1v1h4v-1h2v1h9v-1h5v1h3v-1h3v1h8v-1h1v1h1v-1h1v1h6v-1h2v1h3v-1h1v1h2v-1h1v1h1v-1h4v1h2v-1h3v1h4v-1h1v1h2v-1h1v1h1v-1h2v1h1v-1h1v1h2v-1h3v1h2v-1h3v1h2v-1h1v1h2v-2h1v1h2v-1h1v2h4v-1h1v1h7v-1h3v-1h3v1h1v-1h2v2h2v-1h1v1h3v-1h4v1h4v-1h3v1h1v-1h5v1h8v-1h3v1h2v-1h1v1h7v-1h2v1h2v-1h1v1h3v-1h1v1h4v-1h2v1h5v-1h2v1h4v-1h1v1h3v-1h2v1h3v-1h3v1h6v-1h1v1h1v-1h1v1h6v-1h7v1h2v-1h4v1h3v-1h2v1h3v-1h2v1h2v-1h1v1h5v4h-1v-1h-4v1h-2v-1h-1v1h-1v-1h-4v1h-3v-1h-2v1h-1v-1h-2v1h-3v-1h-2v1h-1v-1h-7v1h-2v-1h-9v1h-1v-1h-4v1h-1v-1h-8v1h-1v-1h-2v1h-1v-1h-2v1h-1v-1h-1v1h-3v-1h-4v1h-1v-1h-1v1h-4v-1h-2v1h-1v-1h-8v1h-1v-1h-2v1h-1v-1h-1v1h-5v-1h-10v1h-2v-1h-10v1h-2v-1h-3v1h-3v2h-1v-1h-4v-1h-1v-1h-1v1h-3v-1h-2v1h-3v-1h-1v1h-1v-1h-1v2h-1v-2h-1v1h-3v-1h-2v1h-2v-1h-1v1h-2v-1h-5v1h-4v-1h-2v1h-1v-1h-2v1h-2v-1h-2v1h-1v-1h-7v1h-1v-1h-6v1h-1v-1h-1v1h-1v-1h-2v1h-1v-1h-1v1h-2v-1h-2v1h-1v-1h-2v1h-1v1h-1v-2h-3v1h-1v-1h-1v1h-1v-1h-1v1h-1v-1h-4v1h-1v-1h-10v1h-1v-1h-3v1h-2v-1h-3v1h-2v-1h-6v1h-1v-1h-7v1h-1v-1h-3v1h-4v-1h-4v1h-1v-1h-1v1h-1v-1h-2v1h-1v-1h-2v1h-3v-1h-9v1h-3v-1h-1v1h-2v-1h-5v1h-1v-1h-2v1h-2v-1h-8v1h-1v-1h-7v1h-1v-1h-1v1h-1v-1h-3v1h-1v-1h-8v1h-2v-1h-2v1h-1v-1h-5v1h-1v-1h-1v1h-1v-1h-4v1h-2v-1h-4v1h-1v-1h-1v1h-3v-1h-1v1h-2v-1h-2v1h-3v-1h-2v1h-1v-1h-1v1h-1v-1h-13v1h-2v-1h-2v1h-2v-1h-7v1h-4v-1h-2v1h-1v-1h-1v1h-1v-1h-5v1h-1v-1h-4v1h-2v-1h-1v1h-1v-1h-3v1h-3v-1h-3v1h-1v-1h-2v1h-1v-1h-5v1h-3v-1h-1v1h-1v-1h-4v1h-1v-1h-5v1h-1v-1h-11v1h-3v-1h-1v1h-1v-1h-3v1h-1v-1h-10v1h-1v-1h-7v1h-1v-1h-2v1h-1v-1h-1v1h-3v-1h-4v1h-1v-1h-5v1h-2v1h-1v-2h-6v1h-2v-1h-1v1h-3v-1h-7v1h-4v-1h-4v1h-1v-1h-3v1h-2v-1h-2v1h-2v-1h-8v1h-1v-1h-2v1h-1v-1h-1v1h-4v-1h-1v1h-1v-1h-9v1h-2v-1h-1v1h-1v-1h-13v1h-1v-1h-1v1h-1v-1h-1v1h-1v-1h-7v1h-1v-1h-1v1h-2v-1h-1v1h-1v-1h-2v1h-2v-1h-11v1h-2v-1h-2v1h-1v-1h-1v1h-2v-1h-4v1h-2v-1h-1v1h-2v-1h-9v1h-1v-1h-3v1h-2v-1h-5v1h-3v-1h-1v1h-1v-1h-1v1h-1v-1h-3v1h-1v-1h-3v1h-1v-1h-1v1h-1v-1h-11v1h-1v-1h-1v1h-1v-1h-8v1h-1v-1h-4v1h-1v-1h-10v1h-1v-1h-5v1h-1v-1h-1v1h-2v-1h-1v1h-1v-1h-14v1h-3v-1h-1v1h-1v-1h-1v1h-2v-1h-1v1h-2v-1h-2v1h-1v-1h-2v1h-1v-1h-1v1h-1v-1h-11v1h-1v-1h-11v1h-1v-1h-7v1h-2v-1h-6v1h-1v-1h-13v1h-2v-1h-3v1h-3v-1h-3v1h-1v-1h-12v2h-1v-2h-1v1h-2v-1h-1v1h-1v-1h-3v1h-3v-1h-2v1h-3v-1h-1v1h-1v-1h-3v1h-2v-1h-2v1h-1v-1h-10v1h-1v-1h-8v1h-2v-1h-1v1h-2v-1h-7v1h-1v-1h-1v1h-1v-1h-3v1h-3v-1h-5v1h-4v-1h-6v1h-5v-1h-3v1h-4v-1h-6v1h-1v-1h-1v1h-3v-1h-3v1h-1v-1h-6v1h-1v-1h-4v1h-2v-1h-2v1h-2v-1h-8v1h-2v-1h-2v1h-4v-1h-1v1h-1v-1h-1v1h-2v-1h-5v1h-1v-1h-3v1h-4v-1h-6v1h-3v-1h-3v1h-1v-1h-2v1h-2v-1h-4v1h-2v-1h-6v1h-4v-1h-2v1h-2v-1h-4v1h-1v-1h-8v1h-1v-1h-3v1h-2v-1h-13v1h-1v-1h-4v1h-1v-1h-7v1h-4v-1h-1v1h-3v-1h-8v1h-2v-1h-8v1h-1v-1h-7z M277 516h2v1h1v-1h1v1h2v-1h1v1h2v-1h1v-1h1v2h3v-1h1v1h2v-1h1v1h3v-1h1v1h21v-1h1v1h5v-1h1v1h1v-1h3v1h1v-1h1v1h1v-1h2v1h2v-2h1v1h1v-1h2v1h3v1h6v-1h2v1h4v-1h3v1h2v-1h1v1h1v-1h1v1h7v-1h1v1h1v-1h1v1h1v-1h2v1h1v-1h1v1h1v-1h2v1h7v-1h1v1h1v-1h3v1h4v-1h1v1h1v-1h2v1h1v-1h2v1h1v-1h2v1h1v-1h4v1h2v-1h3v1h17v-1h3v1h5v-1h1v1h4v-1h1v1h3v-1h6v1h4v-1h2v1h1v-1h2v1h4v-1h5v1h1v-1h1v1h10v-1h3v1h1v-1h3v1h1v-1h1v1h1v-1h3v1h1v-1h3v1h2v-1h1v1h1v-1h1v1h1v-1h3v1h2v-1h3v1h3v-1h1v1h1v-1h1v1h1v-1h3v1h4v-1h2v1h2v-1h2v1h3v-1h2v1h2v-1h1v1h2v-1h3v1h2v-1h2v1h3v-1h3v1h2v-1h1v1h2v-1h1v1h4v-1h3v1h1v-1h4v1h3v-1h2v1h3v-1h1v1h1v-1h1v1h2v-1h2v1h13v-1h1v1h4v-1h3v1h1v-1h2v1h16v-1h3v1h2v-1h5v1h5v-1h3v1h1v-1h3v1h5v-1h2v1h4v-1h2v1h2v-1h1v1h3v-1h4v1h1v-1h4v1h3v-1h1v1h11v-1h1v1h8v-1h4v1h6v-1h1v1h6v-1h2v1h1v-1h2v1h3v-1h1v1h1v-1h5v1h2v-1h2v1h12v-1h2v1h1v-1h1v1h3v-1h2v1h11v-1h2v1h4v-1h1v1h6v-1h3v1h1v-1h2v1h1v-1h1v1h1v-1h3v1h1v-1h1v1h2v-1h1v1h1v-1h4v1h1v-1h1v1h4v-1h1v1h7v-1h3v1h4v-1h1v1h5v-1h1v1h1v-1h2v1h2v-1h3v1h4v-1h1v1h2v-1h4v1h3v-1h1v1h3v-1h2v1h10v-1h1v1h6v-1h1v1h1v-1h1v1h1v-1h1v1h1v-1h6v1h2v-1h1v1h20v-1h1v1h5v-2h2v1h1v-1h2v2h1v-1h1v1h4v-1h1v1h10v-1h3v1h2v-1h1v1h4v-1h1v1h1v-1h4v1h1v-1h2v1h1v-1h3v1h2v-1h2v1h5v-1h2v1h2v-1h3v1h1v-1h1v1h2v-1h3v1h3v-1h2v1h1v-1h1v1h2v-1h1v1h4v-1h1v1h2v-1h2v1h2v-1h4v1h4v-1h1v1h1v-1h1v1h8v-1h2v1h1v-1h3v1h1v-1h6v1h4v-1h1v1h1v-1h2v1h11v-1h1v1h2v-1h1v1h1v-1h3v1h5v-1h2v1h9v-1h1v1h3v-1h2v1h1v-1h3v1h2v-1h1v1h2v-1h1v1h3v-1h2v1h6v-1h1v1h1v-1h3v1h3v-1h2v1h3v-1h3v1h1v-1h3v1h1v-1h2v1h17v-1h1v1h7v-1h5v1h3v-1h1v1h3v-1h1v1h3v-1h3v1h1v-1h1v1h7v-1h1v1h5v-1h3v1h3v-1h1v1h1v-1h4v1h10v-1h3v1h1v-1h4v1h2v-1h1v1h6v-1h2v1h1v-1h2v1h6v-1h1v1h4v-1h2v1h1v-1h2v1h1v-1h5v1h4v-1h1v1h5v-1h1v1h2v-1h1v1h4v-1h1v1h3v-1h7v1h14v-1h1v1h1v-1h1v1h1v-1h1v1h3v-1h1v1h9v-1h2v1h1v-1h1v1h1v-1h1v1h4v-1h1v1h12v-1h5v1h5v-1h2v1h1v-1h1v1h4v-1h2v1h2v-1h3v1h4v-1h1v1h2v-1h1v1h1v-1h2v1h1v-1h1v1h1v-1h1v1h1v-1h1v1h6v-1h2v1h2v3h-3v1h-1v-1h-3v1h-2v-1h-2v1h-1v-1h-5v1h-1v-1h-1v1h-2v-1h-5v1h-4v-1h-1v1h-2v-1h-1v1h-1v-1h-1v1h-1v-1h-6v1h-5v-1h-1v1h-1v-1h-7v1h-1v-1h-2v2h-1v-2h-2v1h-1v-1h-4v1h-1v-1h-3v1h-2v-1h-2v1h-2v-1h-6v1h-3v-1h-6v1h-2v-1h-1v1h-1v-1h-1v1h-2v-1h-9v1h-3v-1h-5v1h-1v-1h-2v1h-8v-1h-5v1h-1v-1h-5v1h-1v-1h-1v1h-1v-1h-5v1h-1v-1h-6v1h-2v-1h-1v1h-1v-1h-11v1h-4v-1h-5v1h-1v-1h-1v1h-1v-1h-3v1h-1v-1h-1v1h-1v1h-1v-1h-3v-1h-4v1h-2v-1h-2v1h-5v-1h-7v1h-3v-1h-1v1h-1v-1h-3v1h-1v-1h-2v1h-2v-1h-6v1h-1v-1h-4v2h-1v-2h-2v1h-1v-1h-3v1h-1v-1h-3v1h-1v-1h-5v1h-1v-1h-1v1h-1v-1h-9v1h-1v-1h-4v1h-1v-1h-7v1h-2v-1h-1v1h-3v-1h-2v1h-4v-1h-4v1h-1v-1h-12v1h-1v-1h-6v1h-8v-1h-2v1h-1v-1h-4v1h-3v-1h-2v1h-1v-1h-3v1h-1v-1h-1v1h-2v-1h-6v1h-2v-1h-1v1h-2v-1h-2v1h-1v-1h-4v1h-2v-1h-4v1h-1v-1h-15v1h-1v-1h-2v1h-4v-1h-1v1h-1v-1h-12v1h-3v-1h-1v1h-3v-1h-1v1h-1v-1h-8v1h-2v-1h-5v1h-2v-1h-3v1h-10v-1h-11v1h-1v-1h-3v1h-3v-1h-8v2h-1v-2h-1v1h-2v2h-1v-3h-1v2h-1v-1h-1v-1h-9v1h-1v-1h-31v1h-3v-1h-1v1h-1v-1h-3v1h-4v-1h-7v1h-1v-1h-2v1h-1v-1h-1v1h-1v-1h-3v1h-2v-1h-3v1h-1v-1h-3v1h-1v-1h-2v1h-2v-1h-17v1h-10v-1h-6v1h-1v-1h-1v1h-5v-1h-4v1h-3v-1h-2v1h-1v-1h-2v1h-3v-1h-6v1h-5v-1h-1v1h-1v-1h-10v1h-2v-1h-4v1h-4v-1h-3v1h-1v-1h-4v1h-3v-1h-3v1h-1v-1h-2v1h-1v-1h-1v1h-1v-1h-3v1h-1v-1h-15v1h-1v-1h-6v1h-2v-1h-6v1h-3v-1h-7v1h-2v-1h-13v1h-1v-1h-1v1h-1v-1h-2v1h-2v-1h-3v1h-1v-1h-7v1h-1v-1h-10v1h-1v-1h-1v1h-2v-1h-1v1h-1v-1h-1v1h-4v-1h-2v1h-4v-1h-2v1h-2v-1h-5v1h-2v-1h-2v1h-1v-1h-1v1h-1v-1h-3v1h-1v-1h-2v1h-1v-1h-1v1h-3v-1h-11v1h-1v-1h-1v1h-1v-1h-1v1h-1v-1h-3v1h-1v-1h-4v1h-5v-1h-1v1h-1v-1h-5v1h-1v-1h-2v1h-4v-1h-2v1h-1v-1h-3v1h-1v-1h-6v1h-3v-1h-5v1h-2v-1h-4v1h-4v-1h-2v1h-2v-1h-3v1h-1v-1h-5v1h-1v-1h-8v1h-1v-1h-2v1h-1v-1h-9v1h-3v-1h-3v1h-2v-1h-4v1h-1v-1h-4v1h-2v-1h-1v1h-1v-1h-2v1h-2v-1h-5v1h-3v-1h-1v1h-3v-1h-1v1h-3v-1h-2v1h-3v-1h-8v1h-1v-1h-1v1h-3v-1h-2v1h-1v-1h-4v1h-3v-1h-7v1h-2v-1h-1v1h-3v-1h-1v1h-3v-1h-2v1h-1v-1h-2v1h-1v1h-2v-2h-1v1h-1v-1h-6v1h-1v-1h-1v1h-1v-1h-2v1h-1v-1h-2v1h-6v-1h-2v1h-2v-1h-1v1h-1v-1h-3v1h-1v-1h-1v1h-2v-1h-3v1h-1v-1h-5v1h-2v-1h-3v1h-1v-1h-2v1h-1v-1h-2v1h-4v1h-4v-2h-9v1h-5v-1h-2v1h-2v-1h-2v1h-1v-1h-7v1h-2v-1h-4v1h-2v-1h-1v1h-3v-1h-11v1h-1v-1h-9z M277 547h9v-1h2v1h16v-1h2v1h6v-1h1v1h2v-1h6v1h1v-2h1v2h18v-1h2v1h2v-1h1v1h4v-1h3v1h11v-1h2v1h4v-1h1v1h1v-1h1v1h12v-1h1v1h1v-1h1v1h2v-1h1v1h3v-1h2v1h4v-1h2v1h5v-1h2v1h1v-1h1v1h1v-1h2v1h1v-1h1v1h2v-1h1v1h1v-1h1v1h1v-1h3v1h9v-1h2v1h26v-1h2v1h1v-1h4v1h4v-1h1v1h4v-1h1v1h1v-1h1v1h1v-1h1v1h1v-1h4v1h6v-1h2v1h2v-1h4v1h16v-1h4v1h5v-1h3v1h2v-1h1v1h2v-1h2v1h2v-1h2v1h4v-1h3v1h2v-2h1v1h2v1h16v-1h2v1h13v-1h2v1h4v-1h1v1h2v-1h1v1h5v-1h3v1h5v-1h1v1h2v-1h1v1h1v-1h3v1h7v-1h3v1h3v-1h4v1h8v-1h4v1h4v-1h1v1h1v-1h1v1h3v-1h1v1h1v-1h1v1h2v-1h2v1h3v-1h2v1h7v-1h1v1h1v-1h1v1h2v-1h1v1h1v-1h1v1h5v-2h1v2h7v-1h1v1h4v-1h1v1h5v-1h5v1h1v-1h2v1h3v-1h2v1h5v-1h7v1h9v-1h1v1h1v-1h3v1h10v-1h1v1h5v-1h1v1h5v-1h2v1h2v-1h2v1h8v-1h3v1h8v-1h1v1h4v-1h3v1h8v-1h1v1h1v-1h1v1h14v-1h2v1h1v-1h2v1h2v-1h1v1h1v-1h1v1h6v-1h2v1h1v-1h2v1h7v-1h1v1h3v-1h2v1h5v-1h1v1h5v-1h1v1h5v-1h1v1h6v-1h1v1h1v-1h1v1h3v-1h1v1h5v-1h1v1h6v-1h1v1h5v-1h1v1h8v-1h3v1h6v-1h1v1h2v-1h1v1h1v-1h1v1h8v-1h2v1h4v-1h1v1h8v-1h1v1h11v-1h3v1h2v-1h2v1h4v-1h4v1h3v-1h1v1h1v-1h2v1h2v-1h1v1h3v-1h1v1h10v-1h1v1h1v-1h2v1h2v-1h2v1h1v-1h1v1h5v-1h1v1h1v-1h1v1h7v-1h1v1h2v-1h4v1h1v-1h1v1h2v-1h1v1h1v-1h3v1h17v-1h2v1h7v-1h2v1h1v-1h5v1h3v-1h5v1h1v-1h1v1h3v-1h1v1h10v-1h1v1h7v-1h1v1h1v-1h1v1h1v-1h3v1h2v-1h1v1h12v-1h3v1h3v-1h3v1h2v-1h1v1h1v-1h1v1h3v-1h1v1h1v-1h1v1h2v-1h3v1h3v-1h1v1h1v-1h1v1h3v-1h1v1h3v-1h1v1h2v-1h1v1h5v-2h1v2h15v-1h1v1h1v-1h3v1h2v-1h1v1h7v-1h1v1h1v-1h2v1h2v-1h3v1h2v-1h2v1h4v-1h2v1h19v-1h1v1h3v-1h1v1h2v-1h1v1h1v-1h1v1h4v-1h3v1h16v-1h3v1h12v-1h3v1h1v-1h3v1h4v-1h1v1h6v-1h2v1h2v-1h5v1h4v-1h1v1h4v-1h1v1h9v-1h1v1h10v-1h1v1h1v-1h2v1h2v-2h1v1h1v1h3v-1h1v1h2v-1h3v1h2v-1h2v1h6v-1h1v1h4v-1h2v1h4v-1h4v1h5v5h-1v-2h-1v1h-1v-1h-6v1h-1v-1h-1v1h-1v-1h-9v1h-1v-1h-5v1h-3v-1h-1v1h-3v-1h-1v1h-1v-1h-8v1h-1v-1h-3v1h-1v-1h-2v1h-1v-1h-2v1h-1v-1h-3v1h-2v-1h-2v1h-1v-1h-2v1h-3v-1h-1v1h-1v-1h-7v1h-1v-1h-1v1h-1v-1h-5v1h-1v-1h-9v1h-1v-1h-6v1h-3v-1h-6v1h-1v-1h-5v1h-2v-1h-1v1h-2v-1h-1v1h-2v-1h-15v1h-2v-1h-4v1h-1v-1h-5v1h-2v-1h-8v1h-2v-1h-9v1h-1v-1h-2v1h-1v-1h-1v1h-1v-1h-7v1h-1v-1h-2v1h-1v-1h-1v1h-2v-1h-6v1h-1v-1h-2v1h-1v-1h-5v1h-1v-1h-5v1h-1v-1h-5v1h-3v-1h-13v1h-5v-1h-2v1h-1v-1h-2v1h-1v-1h-9v1h-1v-1h-1v1h-1v-1h-8v1h-1v-1h-3v1h-1v-1h-3v1h-1v-1h-3v1h-6v-1h-4v1h-1v-1h-3v1h-3v-1h-4v1h-1v-1h-1v1h-1v-1h-1v1h-2v-1h-2v1h-1v-1h-3v1h-3v-1h-1v1h-1v-1h-3v1h-1v-1h-4v1h-1v-1h-3v1h-1v-1h-1v1h-1v-1h-3v1h-3v-1h-2v1h-1v-1h-3v1h-1v-1h-3v1h-1v-1h-2v1h-2v-1h-4v1h-1v-1h-15v1h-1v-1h-1v1h-2v-1h-2v1h-1v-1h-5v1h-5v-1h-3v1h-1v-1h-10v1h-2v-1h-1v1h-2v-1h-4v1h-1v-1h-3v1h-1v-1h-7v1h-1v-1h-6v1h-6v-1h-8v1h-1v-1h-1v1h-1v-1h-4v1h-1v-1h-9v1h-1v-1h-11v1h-3v-1h-4v1h-1v-1h-3v1h-1v-1h-2v1h-1v-1h-13v1h-1v-1h-7v1h-3v-1h-7v1h-2v-1h-2v1h-2v-1h-4v1h-1v-1h-13v1h-1v-1h-7v1h-1v-1h-1v1h-2v-1h-3v1h-1v-1h-1v1h-1v-1h-5v1h-3v-1h-8v1h-1v-1h-4v1h-1v-1h-1v1h-3v-1h-1v1h-2v-1h-2v1h-1v-1h-2v1h-2v-1h-2v1h-1v-1h-1v1h-3v-1h-1v1h-2v-1h-7v1h-5v-1h-1v1h-2v-1h-2v1h-1v-1h-13v1h-2v-1h-5v1h-1v-1h-1v1h-1v-1h-2v1h-3v-1h-3v1h-4v-1h-14v1h-4v-1h-2v1h-2v-1h-7v1h-1v-1h-2v1h-2v-1h-5v1h-1v-1h-11v1h-1v-1h-2v1h-1v-1h-2v1h-2v-1h-6v1h-3v-1h-1v1h-1v-1h-5v1h-6v-1h-6v1h-4v-1h-5v1h-2v-1h-6v1h-6v-1h-1v1h-1v-1h-2v1h-1v-1h-5v2h-1v-2h-1v1h-1v-1h-11v1h-1v-1h-4v1h-2v-1h-1v1h-1v-1h-7v1h-1v-1h-10v1h-2v-1h-4v1h-1v-1h-1v1h-1v-1h-1v2h-1v-1h-1v-1h-3v1h-1v-1h-6v1h-1v-1h-1v1h-1v-1h-1v1h-1v-1h-2v1h-2v-1h-5v1h-1v-1h-7v1h-1v-1h-1v1h-1v-1h-1v1h-1v-1h-12v1h-4v-1h-1v1h-1v-1h-9v1h-1v-1h-2v1h-4v-1h-4v1h-3v-1h-5v1h-3v-1h-5v1h-2v-1h-1v1h-1v-1h-3v1h-2v-1h-2v1h-2v-1h-9v1h-1v-1h-2v1h-1v-1h-2v1h-1v-1h-1v1h-2v-1h-2v1h-2v-1h-6v1h-2v-1h-3v1h-2v-1h-7v1h-1v-1h-1v1h-1v-1h-1v1h-2v-1h-1v1h-2v-1h-9v1h-1v-1h-3v1h-1v-1h-2v1h-2v-1h-2v1h-4v-1h-9v1h-1v-1h-9v1h-1v-1h-1v1h-2v-1h-5v1h-1v-1h-8v1h-1v-1h-3v1h-4v-1h-4v1h-1v-1h-2v1h-2v-1h-3v1h-1v-1h-2v1h-3v-1h-1v3h-1v-3h-1v2h-1v-2h-12v1h-3v-1h-10v1h-2v-1h-4v1h-2v-1h-2v1h-1v-1h-1v2h-1v-2h-2v1h-2v-1h-1z M277 577h7v-1h2v1h10v-1h1v1h2v-1h1v1h4v-1h2v1h4v-1h2v1h3v-1h1v1h10v-1h1v1h7v-1h1v1h2v-1h1v1h4v-1h6v-1h1v2h3v-1h2v1h1v-1h1v1h16v-1h1v1h4v-1h1v1h5v-2h1v2h1v-1h2v1h12v-1h1v1h7v-1h1v1h2v-1h2v1h6v-1h3v1h14v-1h1v1h7v-1h1v1h9v-1h1v1h5v-1h2v1h5v-1h2v1h1v-1h2v1h2v-1h2v1h1v-1h5v1h1v-1h5v1h7v-1h1v1h1v-1h1v1h5v-1h1v1h10v-1h1v1h1v-2h1v2h3v-1h1v1h6v-1h2v1h1v-1h2v1h1v-1h1v1h8v-1h2v1h19v-1h2v1h2v-1h1v1h4v-1h2v1h7v-1h2v1h6v-1h2v1h3v-1h1v1h5v-1h4v1h3v-1h1v1h4v-1h1v1h2v-1h3v1h2v-1h3v1h3v-1h1v1h1v-1h1v1h3v-1h2v1h6v-1h1v1h6v-1h2v1h4v-1h1v1h10v-1h3v1h1v-1h4v1h2v-1h1v1h7v-1h1v1h8v-1h1v1h5v-1h2v1h2v-2h1v1h1v1h5v-1h1v1h7v-1h2v1h2v-1h2v1h1v-1h3v1h4v-1h1v1h5v-2h1v2h4v-1h1v1h3v-1h1v1h3v-1h2v1h11v-1h2v1h14v-1h1v1h4v-1h1v1h1v-1h1v1h12v-1h2v1h5v-1h1v1h4v-1h1v1h6v-1h1v1h4v-1h2v1h3v-1h1v1h2v-1h4v1h22v-1h1v1h6v-1h2v1h1v-1h1v1h1v-1h2v1h3v-1h3v1h7v-1h1v1h2v-2h1v2h4v-1h1v1h3v-2h1v2h1v-1h2v1h2v-1h2v1h6v-1h1v1h4v-1h1v1h1v-1h2v1h2v-1h1v1h3v-1h3v1h4v-1h5v1h2v-1h1v1h4v-1h1v1h5v-1h2v1h7v-1h1v1h3v-1h2v1h1v-1h2v1h7v-1h1v1h1v-1h2v1h1v-1h1v1h4v-1h1v1h1v-1h4v1h3v-1h1v1h4v-1h2v1h1v-1h1v1h6v-1h2v1h1v-1h1v1h1v-1h2v1h4v-1h1v1h4v-1h3v1h6v-1h2v1h8v-1h1v1h4v-1h1v1h2v-1h3v1h2v-1h1v1h1v-1h1v1h1v-1h2v1h1v-1h2v1h1v-1h1v1h5v-1h1v1h2v-1h2v1h3v-1h2v1h15v-1h4v1h5v-1h1v1h1v-1h3v1h4v-1h1v1h3v-1h1v1h4v-1h1v1h1v-1h2v1h1v-1h1v1h7v-1h1v1h2v-1h3v1h2v-1h1v1h9v-1h1v1h2v-1h3v1h1v-1h4v1h2v-1h1v1h5v-1h4v1h7v-1h1v1h1v-1h1v1h2v-1h2v1h4v-1h1v1h10v-1h3v1h2v-1h4v1h5v-1h2v1h1v-1h2v1h1v-1h1v1h8v-1h1v1h1v-1h2v1h6v-1h1v1h1v-1h2v1h1v-1h3v1h1v-1h4v1h2v-1h6v1h1v-1h1v1h4v-1h1v1h2v-1h2v1h5v-1h1v1h3v-1h1v1h5v-1h1v1h3v-1h3v1h1v-1h1v1h2v-1h4v1h1v-1h1v1h2v-1h2v1h4v-1h2v1h1v-1h1v1h9v-1h2v1h4v-1h3v1h1v-1h2v1h7v-1h3v1h1v-1h2v1h6v-1h1v1h1v-1h2v1h4v-1h1v1h2v-1h1v1h4v-1h1v1h20v-1h1v1h2v-1h1v5h-4v1h-2v-1h-4v1h-1v-1h-1v1h-3v-1h-14v1h-1v-1h-15v1h-1v-1h-3v1h-2v-1h-5v1h-1v-1h-2v1h-2v-1h-1v1h-1v-1h-1v1h-3v-1h-1v1h-2v-1h-2v1h-1v-1h-4v1h-4v-1h-5v1h-1v-1h-3v1h-1v-1h-1v1h-1v-1h-4v1h-1v-1h-1v1h-3v-1h-4v1h-2v-1h-2v1h-3v-1h-3v1h-3v-1h-6v1h-1v-1h-1v1h-1v-1h-9v1h-1v-1h-6v1h-3v-1h-2v1h-1v-1h-2v1h-1v-1h-1v1h-3v-1h-1v1h-1v-1h-1v1h-1v-1h-6v1h-2v-1h-1v1h-1v-1h-8v1h-1v-1h-1v1h-2v-1h-2v1h-3v-1h-1v1h-2v-1h-2v1h-2v-1h-13v1h-3v-1h-14v1h-2v-1h-2v1h-2v-1h-1v1h-3v-1h-1v1h-1v-1h-5v1h-3v-1h-1v1h-2v-1h-9v1h-1v-1h-1v1h-1v-1h-3v1h-1v-1h-8v1h-1v-1h-2v1h-1v-1h-7v1h-1v-1h-3v1h-1v-1h-6v1h-2v-1h-5v1h-1v-1h-1v1h-1v-1h-1v1h-1v-1h-4v1h-3v1h-1v-1h-2v-1h-3v1h-1v-1h-7v1h-2v-1h-8v1h-1v-1h-1v1h-1v-1h-3v1h-2v-1h-1v1h-1v-1h-3v1h-3v-1h-1v1h-1v-1h-6v1h-2v-1h-2v1h-1v-1h-2v1h-4v-1h-1v1h-1v-1h-1v1h-1v-1h-1v1h-2v-1h-3v1h-1v-1h-5v1h-2v-1h-2v1h-1v-1h-4v1h-1v-1h-4v1h-3v-1h-6v1h-4v-1h-4v1h-1v-1h-3v1h-2v-1h-7v1h-1v-1h-1v1h-1v-1h-2v1h-1v-1h-3v1h-1v-1h-1v1h-1v-1h-2v1h-2v-1h-1v1h-3v-1h-2v1h-2v-1h-1v1h-3v-1h-4v1h-4v-1h-2v1h-6v-1h-1v1h-1v-1h-5v1h-8v-1h-5v1h-2v-1h-1v1h-2v-1h-1v1h-1v-1h-2v1h-1v-1h-11v1h-1v-1h-1v1h-1v-1h-2v1h-1v-1h-3v1h-1v-1h-2v1h-1v-1h-12v1h-1v-1h-2v1h-1v-1h-6v1h-1v-1h-1v1h-1v-1h-4v1h-1v-1h-8v1h-1v-1h-5v1h-1v-1h-3v1h-1v-1h-1v1h-1v-1h-1v1h-5v-1h-1v1h-3v-1h-1v1h-1v-1h-4v1h-3v-1h-2v1h-1v-1h-1v1h-2v-1h-1v1h-2v-1h-1v1h-2v-1h-8v1h-1v-1h-3v1h-1v-1h-3v1h-4v-1h-12v1h-3v-1h-1v1h-5v-1h-3v1h-3v-1h-1v1h-1v-1h-2v1h-3v-1h-12v1h-1v-1h-3v1h-1v-1h-2v1h-1v-1h-1v1h-2v-1h-3v1h-1v-1h-2v1h-2v-1h-3v1h-1v-1h-4v1h-1v-1h-3v1h-5v-1h-2v1h-4v-1h-5v1h-3v-1h-1v1h-2v-1h-1v1h-2v-1h-4v1h-2v-1h-2v1h-3v-1h-2v1h-1v-1h-5v1h-3v-1h-1v1h-2v-1h-5v1h-2v-1h-1v1h-1v-1h-1v1h-4v-1h-3v1h-3v-1h-3v1h-1v-1h-2v1h-1v-1h-15v1h-1v-1h-1v1h-1v-1h-9v1h-1v-1h-3v1h-1v-1h-5v1h-2v-1h-3v1h-1v-1h-2v1h-1v-1h-9v1h-1v1h-1v-2h-6v1h-1v-1h-3v1h-3v-1h-1v1h-2v-1h-9v1h-3v-1h-6v1h-2v-1h-2v1h-1v-1h-1v1h-1v-1h-6v1h-1v-1h-2v1h-8v-1h-8v1h-2v-1h-5v1h-1v-1h-6v2h-1v-1h-1v-1h-8v1h-4v-1h-1v1h-2v-1h-6v2h-1v-1h-3v-1h-2v1h-2v-1h-3v1h-1v-1h-1v1h-1v-1h-2v1h-1v-1h-1v1h-3v-1h-8v1h-1v-1h-3v1h-4v-1h-7v1h-1v-1h-1v1h-2v-1h-4v1h-1v-1h-8v1h-1v-1h-1v1h-1v-1h-7v1h-2v-1h-1v1h-3v-1h-1v1h-1v-1h-1v1h-2v-1h-4v1h-5v-1h-2v1h-1v-1h-2v1h-1v-1h-4v1h-1v-1h-11v1h-2v-1h-1v1h-1v-1h-2v1h-1v-1h-5v1h-2v1h-1v-1h-3v-1h-3v1h-3v-1h-2v1h-8v-1h-1v1h-1v-1h-3v1h-1v-1h-1v1h-3v-1h-2v1h-1v-1h-1v1h-1v-1h-1v1h-1v-1h-1v1h-1v-1h-7v1h-1v-1h-5z M277 607h1v1h4v-1h1v1h1v-1h1v1h11v-1h1v-1h1v1h3v1h4v-1h1v1h1v-1h1v1h2v-1h1v1h14v-1h4v1h3v-1h4v1h1v-1h3v1h6v-1h1v1h3v-1h2v1h1v-1h1v1h2v-1h3v1h1v-1h1v1h3v-1h2v1h1v-1h1v1h1v-1h5v1h4v-1h1v1h1v-1h2v1h1v-1h2v1h4v-1h2v1h2v-1h1v1h1v-1h3v1h8v-1h3v1h4v-1h5v1h5v-1h2v1h4v-1h2v1h1v-1h3v1h2v-1h2v1h3v-1h1v1h6v-1h1v1h1v-1h3v1h1v-1h1v1h1v-1h3v1h2v-1h2v1h4v-1h4v1h6v-2h1v2h1v-1h2v1h2v-1h1v1h1v-1h1v1h3v-1h2v1h1v-1h3v1h3v-1h3v1h9v-1h2v1h4v-1h4v1h2v-1h3v1h1v-1h1v-1h1v2h4v-1h1v1h2v-1h1v1h2v-1h3v1h2v-1h2v1h4v-1h1v1h6v-1h1v1h2v-1h2v1h4v-1h1v1h2v-2h1v1h1v1h1v-1h2v1h5v-1h1v1h6v-1h2v1h2v-1h1v1h3v-1h1v1h1v-1h1v1h4v-1h2v1h3v-1h1v1h9v-1h2v1h1v-1h1v1h13v-1h1v1h2v-1h2v1h7v-1h1v1h5v-1h4v1h3v-1h1v1h3v-1h3v1h4v-1h3v1h1v-1h1v1h6v-1h4v1h2v-1h1v1h3v-1h1v1h1v-1h3v1h4v-1h4v1h3v-1h2v1h1v-1h1v1h3v-1h4v1h2v-1h1v1h2v-1h1v1h1v-1h3v1h1v-1h2v1h4v-1h1v1h5v-1h2v1h1v-1h1v1h3v-1h3v1h1v-1h1v1h3v-1h1v1h2v-1h2v1h1v-1h1v1h4v-1h1v1h1v-1h1v1h2v-1h1v1h1v-1h1v1h1v-1h1v1h2v-1h4v1h1v-1h1v1h3v-1h1v1h2v-1h1v1h4v-1h1v1h3v-1h2v1h1v-1h1v1h8v-1h1v1h3v-1h1v1h3v-1h2v1h8v-1h5v1h2v-1h3v1h1v-1h2v1h1v-1h3v1h2v-1h2v1h3v-1h1v1h1v-1h2v1h11v-1h1v1h2v-1h1v1h3v-1h1v1h1v-1h1v1h1v-1h2v1h1v-1h2v1h6v-1h1v1h3v-1h1v1h1v-1h2v1h5v-1h1v1h1v-1h2v1h3v-1h1v1h1v-1h2v1h3v-1h1v1h1v-1h3v1h2v-1h6v1h1v-1h1v1h10v-1h2v1h3v-2h1v2h3v-1h1v1h3v-1h1v1h1v-1h1v1h2v-1h2v1h4v-1h3v1h1v-1h2v1h1v-1h1v1h2v-1h2v1h1v-1h3v1h4v-1h2v1h3v-1h1v1h7v-1h2v1h1v-1h3v1h8v-1h1v1h5v-1h1v1h2v-1h2v1h4v-1h1v1h4v-1h2v1h2v-1h2v1h1v-1h1v1h1v-1h1v1h2v-1h4v1h3v-1h1v1h3v-1h1v1h5v-1h2v1h1v-1h1v1h1v-1h3v1h1v-1h1v1h1v-1h1v1h2v-1h5v1h1v-1h1v1h2v-1h2v1h3v-1h5v1h4v-1h1v1h1v-1h1v1h1v-1h2v1h11v-1h1v1h2v-1h3v1h6v-1h1v1h2v-1h1v1h1v-1h1v1h8v-1h3v1h1v-1h1v1h2v-1h1v1h1v-1h3v1h1v-1h1v1h2v-1h1v1h8v-1h2v1h1v-1h1v1h1v-1h2v1h2v-1h4v1h4v-1h2v1h1v-1h1v1h5v-1h1v1h3v-1h2v1h1v-1h1v1h1v-1h1v1h9v-1h4v1h4v-1h1v1h5v-1h1v1h1v-1h1v1h2v-1h5v1h1v-1h1v1h4v-1h3v1h1v-1h4v1h2v-1h2v1h4v-1h2v1h4v-1h3v1h1v-1h4v1h1v-1h5v1h1v-1h1v1h2v-1h1v1h4v-1h8v1h2v-1h1v1h2v-1h7v1h3v-1h1v1h1v-1h7v1h3v-2h1v2h11v-1h8v1h2v-1h1v1h2v-1h3v1h2v-1h1v1h2v-1h1v1h9v-1h2v1h4v-1h1v1h5v-1h1v1h1v-1h2v1h1v-1h2v1h4v-1h3v1h4v-1h2v1h2v-1h1v1h2v3h-5v1h-3v-1h-1v1h-1v-1h-1v1h-1v-1h-1v1h-7v-1h-1v1h-1v-1h-4v1h-3v-1h-2v1h-1v-1h-1v1h-1v-1h-1v1h-7v-1h-5v1h-1v-1h-6v2h-1v-2h-1v1h-7v-1h-3v1h-1v-1h-1v1h-2v-1h-1v1h-1v-1h-5v1h-2v-1h-1v1h-3v-1h-3v1h-3v-1h-1v1h-1v-1h-4v1h-5v-1h-2v1h-1v-1h-1v1h-1v-1h-3v1h-1v-1h-3v1h-2v-1h-4v1h-3v-1h-3v1h-5v-1h-1v1h-1v-1h-2v1h-5v-1h-2v1h-3v-1h-1v1h-8v-1h-3v1h-1v-1h-3v1h-2v-1h-1v1h-2v-1h-1v1h-1v-1h-1v1h-1v-1h-3v1h-2v-1h-3v1h-5v-1h-1v1h-1v-1h-1v1h-5v-1h-3v1h-5v-1h-1v1h-1v-1h-4v1h-1v-1h-1v1h-1v-1h-2v1h-1v-1h-1v1h-3v1h-1v-2h-2v1h-1v-1h-3v1h-1v-1h-1v1h-1v-1h-1v1h-3v-1h-2v1h-2v-1h-1v1h-3v-1h-2v1h-3v-1h-2v1h-2v-1h-1v1h-1v-1h-2v1h-2v-1h-1v1h-2v-1h-4v1h-1v-1h-7v1h-1v-1h-3v1h-1v-1h-7v1h-2v-1h-5v1h-4v-1h-1v1h-1v-1h-8v1h-3v-1h-2v1h-3v-1h-7v1h-1v-1h-4v1h-2v-1h-1v1h-1v-1h-1v1h-2v-1h-1v1h-1v-1h-1v1h-1v-1h-4v1h-3v-1h-5v1h-1v-1h-1v1h-2v-1h-1v1h-1v-1h-1v1h-1v-1h-4v1h-1v-1h-2v1h-1v-1h-1v1h-3v-1h-8v1h-1v-1h-1v1h-2v-1h-2v1h-6v-1h-8v1h-1v-1h-3v1h-3v-1h-5v1h-2v-1h-4v1h-3v-1h-7v1h-1v-1h-2v1h-1v-1h-1v1h-2v-1h-1v1h-4v-1h-1v1h-4v-1h-1v1h-1v-1h-11v1h-1v-1h-1v1h-2v-1h-2v1h-5v-1h-1v1h-3v-1h-1v1h-1v-1h-4v1h-6v-1h-4v1h-1v-1h-6v1h-1v-1h-2v1h-3v-1h-1v1h-1v-1h-1v1h-3v-1h-10v1h-6v-1h-4v1h-2v-1h-1v1h-1v-1h-1v1h-1v-1h-3v2h-1v-1h-1v-1h-8v1h-1v-1h-2v1h-1v-1h-1v1h-5v-1h-6v1h-2v-1h-3v1h-3v-1h-2v1h-1v-1h-3v1h-3v-1h-3v1h-3v-1h-2v1h-2v-1h-1v1h-1v-1h-1v1h-2v-1h-1v1h-2v-1h-4v1h-2v-1h-3v1h-3v-1h-7v1h-1v-1h-1v1h-5v-1h-1v1h-1v-1h-1v1h-2v-1h-4v1h-1v-1h-2v1h-1v-1h-4v1h-1v-1h-5v1h-1v-1h-5v1h-3v-1h-1v1h-3v-1h-2v1h-1v-1h-1v1h-1v-1h-2v1h-1v-1h-2v1h-1v-1h-1v1h-1v-1h-1v1h-1v-1h-2v1h-1v-1h-1v1h-4v-1h-1v1h-1v-1h-1v1h-1v-1h-2v1h-6v-1h-3v1h-2v-1h-8v1h-3v-1h-1v1h-1v-1h-3v1h-1v-1h-2v1h-1v-1h-1v1h-4v-1h-1v1h-2v-1h-2v1h-1v-1h-2v1h-4v-1h-7v1h-4v-1h-2v1h-1v-1h-1v1h-3v-1h-8v1h-1v-1h-14v1h-4v-1h-1v1h-6v-1h-8v1h-1v-1h-4v1h-2v-1h-2v1h-1v-1h-9v1h-4v-1h-2v1h-2v-1h-3v1h-2v-1h-2v1h-2v-1h-2v1h-4v-1h-5v1h-2v-1h-5v1h-1v-1h-1v1h-1v-1h-4v1h-1v-1h-2v1h-2v-1h-2v1h-1v-1h-2v1h-3v-1h-1v1h-6v-1h-2v1h-3v-1h-1v1h-1v-1h-1v1h-1v-1h-3v1h-3v-1h-2v1h-2v-1h-2v1h-1v-1h-2v1h-3v-1h-6v1h-1v-1h-1v1h-1v-1h-1v1h-1v-1h-1v1h-1v-1h-2v1h-1v-1h-3v1h-1v-1h-2v1h-1v-1h-6v1h-1v-1h-1v1h-2v-1h-2v1h-2v-1h-2v1h-1v-1h-1v1h-6v-1h-1v1h-7v-1h-2v1h-3v-1h-3v1h-2v-1h-1v1h-1v-1h-3v1h-1v-1h-4v1h-1v-1h-7v1h-1v-1h-8v1h-1v-1h-2v1h-3v-1h-1v1h-1v-1h-1v1h-2v-1h-3v1h-1v-1h-2v1h-2v-1h-4v1h-1v-1h-3v1h-1v-1h-4v1h-3v-1h-9v1h-4v-1h-2v1h-3v-1h-4v1h-1v-1h-3v1h-2v-1h-1v1h-1v-1h-1v1h-1v-1h-5v1h-1v-1h-2v1h-5v-1h-1v1h-1v-1h-8v1h-2v-1h-2v1h-6v-1h-2v1h-3v-1h-1v1h-2v-1h-7v1h-1v-1h-9v1h-1v-1h-3v1h-1v-1h-1v1h-1v-1h-1v1h-2v-1h-1v1h-2v-1h-1z M277 638h1v-1h1v1h2v-1h2v1h1v-1h3v1h1v-1h2v1h5v-1h2v1h1v-1h5v1h3v-1h1v1h1v-1h1v1h4v-1h1v1h2v-1h1v1h2v-2h1v1h2v1h2v-1h1v1h4v-1h3v1h2v-1h1v1h2v-1h1v1h1v-1h3v1h7v-1h1v1h3v-1h1v1h3v-1h3v1h2v-1h1v1h7v-1h1v1h5v-1h5v1h2v-1h2v1h1v-1h1v1h1v-1h1v1h3v-1h2v1h3v-1h1v1h6v-1h1v1h1v-1h2v1h1v-1h3v1h8v-1h1v1h6v-1h1v1h1v-1h1v1h1v-1h2v1h2v-1h2v1h2v-1h1v1h2v-1h3v1h1v-1h1v1h7v-1h2v1h2v-1h2v1h4v-1h2v1h2v-1h1v1h3v-1h1v1h6v-1h2v1h1v-1h1v1h3v-1h1v1h5v-1h2v1h3v-1h1v1h2v-2h1v2h1v-1h1v1h1v-1h2v1h2v-1h4v1h3v-1h2v1h3v-1h3v1h2v-1h1v1h2v-1h2v1h4v-1h2v1h1v-1h1v1h2v-1h2v1h6v-1h2v1h2v-1h1v1h2v-1h2v1h1v-1h1v1h1v-1h1v1h1v-1h1v1h1v-1h1v1h2v-1h1v1h5v-1h2v1h3v-1h2v1h4v-1h3v1h3v-1h1v1h2v-1h1v1h3v-1h1v1h3v-1h2v1h1v-1h1v1h2v-1h1v1h2v-1h3v1h2v-1h2v1h3v-1h2v1h2v-1h2v1h1v-1h1v1h7v-1h1v1h1v-1h2v1h2v-1h3v1h2v-1h1v1h4v-1h1v1h3v-1h3v1h1v-1h1v1h1v-1h2v1h2v-1h1v1h3v-1h1v1h14v-1h1v1h2v-1h1v1h15v-1h3v1h3v-1h1v1h4v-1h2v1h2v-1h2v1h2v-1h1v1h1v-1h4v1h2v-1h1v1h2v-1h5v1h2v-1h1v1h5v-1h1v1h1v-1h4v1h1v-1h3v1h4v-1h2v1h3v-1h1v1h4v-1h1v1h6v-1h1v1h3v-1h3v1h2v-1h2v1h1v-1h2v1h7v-1h3v1h1v-1h1v1h1v-1h1v1h2v-1h1v1h3v-1h2v1h1v-1h1v1h2v-1h2v1h1v-1h1v1h3v-1h1v1h5v-1h1v1h1v-1h9v1h2v-1h1v1h15v-1h3v1h6v-1h1v1h1v-1h1v1h2v-1h2v1h15v-1h1v1h6v-2h1v1h1v1h10v-1h3v1h5v-1h1v1h4v-1h3v1h7v-1h1v1h1v-1h3v1h1v-1h1v1h5v-1h2v1h9v-1h1v1h3v-1h4v1h4v-1h2v1h3v-2h1v1h3v1h1v-1h3v1h2v-1h1v1h1v-1h2v1h3v-1h1v1h2v-1h4v1h5v-1h3v1h1v-1h2v-1h1v2h1v-1h4v1h6v-1h1v1h1v-1h1v1h2v-1h1v1h2v-1h3v1h2v-1h1v1h1v-1h2v1h2v-1h2v1h2v-1h1v1h4v-1h3v1h1v-1h5v1h1v-1h3v1h5v-1h1v1h6v-1h1v1h2v-1h4v1h1v-1h1v1h7v-1h1v1h1v-1h1v1h4v-1h1v1h4v-1h1v1h3v-1h1v1h8v-1h2v1h9v-1h3v1h5v-1h1v1h1v-1h1v1h8v-1h2v1h2v-1h2v1h2v-1h2v1h1v-1h1v1h14v-1h2v1h7v-1h2v1h2v-1h2v1h4v-1h4v1h4v-1h1v1h3v-1h3v1h2v-1h1v1h2v-1h8v1h4v-1h1v1h5v-1h1v1h1v-1h1v1h2v-1h3v1h8v-1h2v1h4v-1h1v1h1v-1h2v1h1v-1h4v1h6v-1h2v1h1v-1h1v1h4v-1h1v1h1v-1h6v1h3v-1h3v1h2v-1h2v1h1v-1h4v1h1v-1h2v1h1v-1h2v1h2v-1h1v1h5v-1h1v1h1v-1h1v1h1v-1h1v1h4v-1h1v1h3v-1h2v1h1v-1h3v1h2v-1h1v1h1v-1h1v1h4v-1h1v1h1v-1h2v1h1v-1h1v1h2v-1h1v1h7v-1h4v1h1v-1h3v1h1v-1h1v1h2v-1h1v1h6v-1h4v1h3v-1h2v1h1v-1h4v1h4v-1h2v1h6v-1h3v1h2v3h-4v1h-1v-1h-7v1h-4v-1h-1v1h-3v-1h-2v1h-1v-1h-9v1h-1v-1h-1v1h-1v-1h-5v1h-1v-1h-8v1h-1v-1h-2v1h-3v-1h-5v1h-2v-1h-1v1h-1v-1h-3v1h-2v-1h-1v1h-1v-1h-5v1h-3v-1h-4v1h-1v-1h-3v1h-2v-1h-4v1h-2v-1h-1v1h-1v-1h-1v1h-4v-1h-7v1h-1v-1h-4v1h-1v-1h-14v1h-1v-1h-6v1h-4v1h-1v-2h-4v1h-1v-1h-3v1h-2v-1h-1v1h-3v-1h-2v1h-1v-1h-2v1h-4v-1h-6v1h-2v-1h-4v1h-1v-1h-2v1h-1v1h-1v-1h-3v-1h-4v1h-1v-1h-1v1h-1v-1h-1v1h-1v-1h-3v1h-1v-1h-6v1h-1v-1h-4v1h-2v-1h-10v1h-1v-1h-1v1h-1v-1h-4v1h-3v-1h-1v1h-1v-1h-1v1h-1v-1h-2v1h-2v-1h-6v1h-2v-1h-6v1h-3v-1h-6v1h-1v-1h-6v1h-1v-1h-6v1h-1v-1h-1v1h-3v-1h-6v1h-3v-1h-3v1h-1v-1h-3v1h-1v-1h-4v1h-1v-1h-3v1h-2v-1h-13v1h-1v-1h-16v1h-2v-1h-3v1h-3v-1h-9v1h-1v-1h-1v1h-1v-1h-1v1h-1v-1h-1v1h-3v-1h-5v1h-3v-1h-1v1h-5v-1h-3v1h-2v-1h-7v1h-1v-1h-2v1h-2v-1h-13v1h-1v-1h-4v1h-2v-1h-1v1h-3v-1h-6v2h-1v-2h-2v2h-1v-2h-1v1h-1v-1h-1v1h-3v-1h-4v1h-2v-1h-1v1h-1v-1h-6v1h-1v-1h-2v1h-1v-1h-7v1h-2v-1h-10v1h-1v-1h-1v1h-2v-1h-2v1h-1v-1h-1v1h-1v-1h-1v1h-1v-1h-4v1h-1v-1h-14v1h-3v-1h-7v1h-2v-1h-2v1h-3v-1h-5v1h-2v-1h-8v1h-2v-1h-9v1h-5v-1h-6v1h-1v-1h-9v1h-1v-1h-2v1h-1v-1h-2v1h-4v-1h-1v1h-1v-1h-1v1h-1v-1h-1v1h-1v-1h-1v1h-3v-1h-7v1h-1v-1h-4v1h-2v-1h-4v1h-2v-1h-5v1h-1v-1h-2v1h-1v-1h-12v1h-3v-1h-5v1h-3v-1h-2v1h-3v-1h-8v1h-1v-1h-3v1h-1v-1h-6v1h-3v-1h-1v1h-2v-1h-2v1h-2v-1h-11v1h-1v-1h-3v1h-1v-1h-3v1h-2v-1h-2v1h-1v-1h-1v1h-1v-1h-5v1h-2v-1h-2v1h-3v-1h-3v1h-1v-1h-1v1h-2v-1h-1v1h-1v-1h-4v1h-4v-1h-1v1h-3v-1h-2v1h-2v-1h-6v1h-1v-1h-4v1h-1v-1h-2v1h-2v-1h-18v1h-1v-1h-11v1h-1v-1h-3v1h-1v-1h-2v1h-2v-1h-3v1h-2v-1h-2v1h-6v-1h-2v1h-1v-1h-2v1h-1v-1h-1v1h-1v-1h-2v1h-2v-1h-5v1h-1v-1h-1v1h-1v-1h-1v1h-4v-1h-1v1h-2v-1h-2v1h-1v-1h-8v1h-1v-1h-5v1h-1v-1h-4v1h-1v-1h-1v1h-2v-1h-6v1h-1v-1h-1v1h-3v-1h-2v1h-1v-1h-2v1h-4v-1h-1v1h-2v-1h-8v1h-3v-1h-9v1h-1v-1h-1v1h-1v-1h-2v1h-1v-1h-3v1h-5v-1h-4v1h-1v-1h-10v1h-1v-1h-2v1h-2v-1h-3v1h-1v-1h-16v1h-3v-1h-5v1h-3v-1h-2v1h-1v-1h-2v1h-2v-1h-7v1h-3v-1h-4v1h-2v-1h-3v1h-3v-1h-12v1h-2v-1h-3v1h-2v-1h-4v1h-4v-1h-12v1h-2v-1h-5v1h-1v-1h-2v1h-1v-1h-4v1h-1v-1h-3v1h-3v-1h-2v1h-4v-1h-3v1h-1v-1h-6v1h-1v-1h-6v1h-2v-1h-3v1h-1v-1h-5v1h-1v-1h-5v1h-1v-1h-4v1h-1v-1h-5v1h-3v-1h-10v1h-2v-1h-4v1h-1z M277 669h3v-1h1v1h1v-1h1v1h4v-1h3v1h6v-1h1v1h11v-1h1v1h3v-1h5v1h1v-1h1v1h1v-1h2v1h3v-1h3v1h2v-1h1v1h1v-1h1v1h1v-1h1v1h3v-1h1v1h2v-1h4v1h2v-1h1v1h7v-1h1v1h5v-1h1v1h6v-1h1v1h1v-1h3v1h1v-1h1v1h4v-1h7v1h1v-1h2v1h5v-1h3v1h6v-1h2v1h1v-1h1v1h1v-1h1v1h2v-1h2v1h11v-1h1v1h7v-1h1v1h1v-1h1v1h1v-1h1v1h5v-1h3v1h2v-1h1v1h2v-1h2v1h1v-1h1v1h2v-1h1v1h3v-1h1v1h2v-1h1v1h4v-1h2v1h1v-1h1v1h1v-1h3v1h2v-1h4v1h6v-1h3v1h1v-1h1v1h2v-1h1v1h4v-1h1v1h3v-1h2v1h3v-1h2v1h2v-1h2v1h1v-1h1v1h1v-1h1v1h2v-1h4v1h1v-1h1v1h3v-1h3v1h7v-1h3v1h1v-1h1v1h2v-1h2v1h2v-1h1v1h3v-1h1v1h2v-1h3v1h1v-1h2v1h7v-1h4v1h2v-1h1v1h2v-2h1v2h1v-1h1v1h2v-1h2v1h1v-1h7v1h2v-1h2v1h1v-1h2v1h4v-1h2v1h2v-1h1v1h1v-1h2v1h4v-1h1v1h1v-1h1v1h7v-1h2v1h7v-2h1v2h1v-1h1v1h2v-1h2v1h1v-1h1v1h2v-1h2v1h1v-1h1v1h5v-1h1v1h1v-1h1v1h6v-1h2v1h2v-1h1v1h2v-1h5v1h2v-1h2v1h4v-1h1v1h6v-1h3v1h2v-1h2v1h3v-1h4v1h1v-1h1v1h2v-1h1v1h1v-1h1v1h4v-1h1v1h3v-1h1v1h2v-1h1v1h3v-1h2v1h6v-1h4v1h2v-1h1v1h1v-1h3v1h3v-1h1v-1h1v2h2v-1h2v1h3v-1h3v1h4v-1h1v1h2v-1h2v1h10v-1h1v1h1v-1h2v1h2v-1h1v1h2v-1h2v1h1v-1h2v1h1v-1h6v1h3v-1h3v1h4v-1h1v1h2v-1h1v1h2v-1h1v1h4v-1h1v1h2v-1h2v1h2v-1h1v1h4v-1h3v1h1v-1h3v1h3v-1h1v1h3v-1h1v1h4v-1h1v1h1v-1h3v1h4v-1h1v1h9v-1h1v-1h1v2h2v-1h2v1h4v-1h1v1h1v-1h3v1h1v-1h2v1h1v-1h1v1h3v-1h3v1h1v-1h1v1h1v-1h1v1h1v-1h3v1h4v-1h2v1h2v-1h1v1h16v-1h5v1h3v-1h3v1h4v-1h3v1h7v-1h1v1h2v-1h2v1h1v-1h5v1h4v-1h4v1h3v-1h4v1h1v-1h4v1h1v-1h3v1h1v-1h1v1h3v-1h3v1h9v-1h2v1h7v-1h2v1h8v-1h2v1h4v-1h5v1h3v-1h1v1h3v-2h1v2h4v-1h2v1h1v-1h1v1h4v-1h1v1h3v-1h1v1h1v-1h1v1h5v-1h1v1h3v-1h1v1h12v-1h1v1h18v-1h1v1h3v-1h2v1h1v-1h1v1h4v-1h1v1h1v-1h1v1h2v-1h1v1h1v-1h1v1h4v-1h5v1h2v-1h2v1h3v-1h1v1h2v-1h1v1h6v-1h2v1h1v-1h1v1h3v-1h2v1h4v-1h3v1h11v-1h3v1h2v-1h1v1h2v-1h5v1h3v-1h3v1h2v-1h4v1h14v-1h1v1h7v-1h1v1h20v-1h3v1h2v-1h1v1h1v-1h1v1h3v-1h3v1h1v-2h1v2h2v-2h1v2h1v-1h1v1h2v-1h1v1h3v-1h5v1h2v-1h1v1h1v-1h4v1h2v-1h4v1h3v-1h1v1h9v-1h2v1h3v-1h1v1h8v-1h2v1h6v-2h1v2h4v-1h1v1h5v-1h1v1h1v-1h2v1h3v-1h2v1h6v-1h5v-1h1v1h1v1h2v-1h1v1h5v-1h1v1h6v-1h2v1h6v-1h3v1h1v-1h1v1h2v-1h1v1h6v-1h2v5h-1v-1h-3v1h-1v-1h-3v1h-1v-1h-3v1h-1v-1h-7v1h-1v-1h-3v1h-1v-1h-4v1h-1v-1h-5v1h-5v-1h-5v1h-1v-1h-3v1h-1v-1h-3v1h-2v-1h-2v1h-3v-1h-1v1h-1v-1h-9v1h-4v-1h-1v1h-1v-1h-3v1h-4v-1h-13v1h-1v-1h-4v1h-1v-1h-2v1h-1v-1h-7v1h-1v-1h-2v1h-7v-1h-9v1h-2v1h-1v-2h-6v1h-1v-1h-1v1h-2v-1h-3v1h-2v-1h-2v1h-1v-1h-4v1h-2v-1h-2v1h-2v-1h-8v1h-4v-1h-7v1h-1v-1h-2v1h-4v-1h-10v1h-2v-1h-5v1h-2v-1h-8v1h-1v-1h-9v1h-1v-1h-5v1h-1v-1h-6v1h-2v-1h-9v1h-1v-1h-2v1h-1v-1h-1v1h-1v-1h-1v1h-1v-1h-3v1h-3v-1h-3v1h-1v-1h-1v1h-1v-1h-14v1h-1v-1h-3v1h-3v-1h-3v1h-1v-1h-4v1h-1v-1h-1v1h-2v-1h-1v1h-1v-1h-6v1h-2v-1h-8v1h-1v-1h-6v1h-2v-1h-16v1h-2v-1h-1v1h-1v-1h-19v1h-1v-1h-1v1h-1v-1h-6v1h-1v-1h-6v1h-2v-1h-1v1h-2v-1h-3v1h-2v-1h-5v1h-3v-1h-2v2h-1v-2h-12v1h-1v-1h-12v1h-1v-1h-9v1h-4v-1h-2v1h-2v-1h-8v1h-3v-1h-2v1h-1v-1h-2v1h-1v-1h-2v1h-1v-1h-3v1h-1v1h-1v-2h-1v1h-3v-1h-3v1h-1v-1h-8v1h-3v-1h-1v1h-2v-1h-1v1h-3v-1h-1v1h-4v-1h-7v1h-3v-1h-8v1h-1v-1h-8v1h-2v-1h-1v1h-1v-1h-4v1h-2v-1h-1v1h-3v-1h-4v2h-1v-1h-1v-1h-2v1h-2v-1h-1v1h-1v-1h-4v1h-2v-1h-9v1h-2v-1h-2v1h-1v-1h-4v1h-2v-1h-6v1h-2v-1h-8v1h-3v-1h-1v1h-1v-1h-1v1h-1v-1h-5v1h-1v-1h-4v1h-1v-1h-3v1h-2v-1h-3v1h-2v-1h-1v1h-1v-1h-17v1h-5v-1h-4v1h-3v-1h-9v1h-2v-1h-3v1h-3v-1h-9v1h-2v-1h-5v1h-1v-1h-7v1h-3v-1h-9v1h-1v-1h-12v1h-2v-1h-1v1h-1v-1h-4v1h-3v-1h-2v1h-1v-1h-1v1h-3v-1h-1v1h-1v-1h-6v1h-2v-1h-3v1h-1v-1h-4v1h-1v-1h-6v1h-3v-1h-1v1h-2v-1h-11v1h-4v-1h-11v1h-3v-1h-2v1h-1v-1h-2v1h-3v-1h-6v1h-3v-1h-19v1h-2v-1h-1v1h-1v-1h-4v1h-1v-1h-8v1h-2v-1h-6v1h-1v-1h-2v1h-2v-1h-2v1h-1v-1h-4v1h-2v-1h-3v1h-3v-1h-1v1h-4v-1h-2v1h-3v-1h-8v1h-1v-1h-6v1h-3v-1h-2v1h-3v-1h-10v1h-1v-1h-3v1h-2v-1h-3v1h-3v-1h-6v1h-1v-1h-5v1h-1v-1h-3v1h-1v-1h-3v1h-1v-1h-6v1h-1v-1h-3v1h-1v-1h-3v1h-4v-1h-2v1h-1v-1h-1v1h-1v-1h-3v1h-1v-1h-4v1h-1v-1h-8v1h-1v-1h-5v1h-1v-1h-6v1h-1v-1h-8v1h-2v-1h-4v1h-1v-1h-2v1h-1v-1h-2v1h-1v-1h-3v1h-2v-1h-11v1h-1v-1h-4v1h-1v-1h-1v1h-1v-1h-1v1h-2v-1h-1v1h-3v-1h-4v1h-1v-1h-4v1h-2v-1h-5v1h-1v-1h-5v1h-1v-1h-8v1h-2v-1h-5v1h-2v-1h-3v1h-1v-1h-5v1h-4v-1h-6z M277 699h7v-1h1v1h1v-1h1v1h3v-1h1v1h5v-1h2v1h2v-1h3v1h2v-1h1v1h6v-1h1v1h6v-1h1v1h1v-1h3v1h4v-1h1v1h2v-1h2v1h4v-1h4v1h8v-1h1v1h3v-1h3v1h2v-1h1v1h1v-1h2v1h5v-2h1v2h2v-1h1v1h8v-1h1v1h2v-1h2v1h8v-1h1v1h1v-1h3v1h5v-1h1v1h2v-1h2v1h8v-1h1v1h10v-1h2v1h3v-1h3v1h1v-1h1v1h3v-1h3v1h3v-1h5v1h2v-1h1v1h7v-1h1v1h5v-1h1v1h4v-1h1v1h8v-1h3v1h1v-1h1v1h2v-1h1v1h2v-1h1v1h6v-2h1v2h1v-1h1v1h2v-1h2v1h1v-1h5v1h1v-1h1v1h5v-1h2v1h2v-1h1v1h7v-1h1v1h4v-1h1v1h5v-1h4v1h3v-1h1v1h3v-1h1v1h9v-1h1v1h4v-1h3v1h1v-1h1v1h1v-1h1v1h1v-1h3v1h1v-1h1v1h3v-1h3v1h3v-1h1v1h3v-1h1v1h7v-1h2v1h1v-1h2v1h11v-1h1v1h6v-1h2v1h2v-1h1v1h1v-1h8v1h3v-1h2v1h3v-1h1v1h9v-1h1v1h3v-1h1v1h5v-1h1v1h9v-1h2v1h2v-1h2v1h3v-1h3v1h1v-1h2v1h2v-1h1v1h5v-1h3v1h4v-1h1v1h15v-1h5v1h24v-1h1v1h2v-1h1v1h9v-1h1v1h5v-1h2v1h1v-1h1v1h6v-1h2v1h3v-1h1v1h11v-1h1v1h1v-1h1v1h10v-1h1v1h7v-1h1v1h1v-1h4v1h5v-1h1v1h1v-1h1v1h4v-1h1v1h3v-1h5v1h1v-1h1v1h2v-1h1v1h4v-1h2v1h1v-1h1v1h2v-1h1v1h7v-1h1v1h1v-1h1v1h12v-1h2v1h1v-1h1v1h1v-1h8v1h8v-1h2v1h2v-1h1v1h1v-1h3v1h5v-1h2v1h10v-1h1v1h2v-1h1v1h1v-1h1v1h5v-1h1v1h2v-1h5v1h1v-1h3v1h10v-1h3v1h6v-1h3v1h2v-1h4v-1h1v2h1v-1h1v1h5v-1h2v1h2v-1h1v1h6v-1h3v1h4v-1h1v1h10v-1h1v1h3v-1h3v1h5v-1h2v1h7v-1h1v1h2v-1h1v1h2v-1h1v1h2v-1h1v1h2v-1h2v1h4v-1h2v1h9v-1h2v1h13v-1h1v1h1v-1h3v1h11v-1h1v1h1v-1h1v1h13v-1h1v1h3v-1h2v1h13v-1h1v1h2v-1h3v1h3v-1h1v1h3v-1h1v1h7v-1h1v1h1v-1h1v1h2v-1h1v1h5v-1h3v1h4v-1h4v1h5v-1h3v1h18v-1h1v1h10v-1h2v1h3v-1h1v1h1v-1h1v1h9v-1h1v1h2v-1h1v1h2v-1h2v1h8v-1h1v1h2v-1h1v1h1v-1h2v1h5v-1h2v1h2v-1h1v1h1v-1h2v1h2v-1h2v1h4v-1h1v1h3v-1h2v1h6v-1h1v1h1v-1h1v1h3v-1h3v1h10v-1h3v1h4v-1h2v1h4v-1h1v1h8v-1h1v1h2v-1h1v1h4v-1h3v1h8v-1h2v1h1v-1h2v1h1v-1h1v1h3v-1h1v1h5v-1h1v1h8v-1h1v1h4v-1h1v1h19v-1h1v1h5v3h-2v1h-1v-1h-6v1h-1v-1h-7v1h-2v-1h-11v1h-1v-1h-1v1h-2v-1h-4v1h-2v-1h-1v1h-6v-1h-3v1h-5v-1h-5v1h-1v-1h-5v1h-1v-1h-1v1h-2v-1h-3v1h-1v-1h-7v1h-1v-1h-6v1h-2v-1h-6v1h-2v-1h-4v1h-1v-1h-4v1h-2v-1h-9v1h-1v-1h-10v1h-2v-1h-2v1h-1v-1h-1v1h-1v-1h-1v1h-1v-1h-4v1h-2v-1h-1v1h-1v-1h-3v1h-1v-1h-1v1h-1v-1h-2v1h-2v-1h-1v1h-3v-1h-1v1h-1v-1h-7v1h-5v-1h-1v1h-1v-1h-9v1h-3v-1h-2v1h-2v-1h-2v1h-1v-1h-3v1h-1v-1h-2v1h-2v-1h-4v1h-1v-1h-9v1h-2v-1h-4v1h-3v-1h-5v1h-2v-1h-3v1h-1v-1h-4v1h-1v-1h-8v1h-1v-1h-15v1h-1v-1h-2v1h-1v-1h-1v1h-1v-1h-2v1h-6v-1h-1v1h-2v-1h-3v1h-1v-1h-1v1h-2v-1h-1v1h-1v-1h-7v1h-1v-1h-7v1h-1v-1h-1v1h-1v-1h-1v1h-1v-1h-2v1h-3v-1h-2v1h-3v-1h-2v1h-1v-1h-3v1h-5v-1h-6v1h-1v-1h-13v1h-1v-1h-6v1h-1v-1h-4v1h-1v-1h-1v1h-1v-1h-5v1h-3v-1h-9v1h-3v-1h-2v1h-1v-1h-2v1h-1v-1h-1v1h-5v-1h-3v2h-1v-2h-2v1h-1v-1h-14v1h-2v-1h-1v1h-2v-1h-2v1h-1v-1h-7v1h-1v-1h-5v1h-1v-1h-1v1h-1v-1h-2v1h-1v-1h-1v2h-1v-2h-6v1h-1v-1h-8v1h-1v-1h-9v1h-1v-1h-11v1h-5v-1h-8v1h-3v-1h-5v1h-1v-1h-18v1h-4v-1h-10v1h-3v-1h-6v1h-1v-1h-1v1h-1v-1h-2v1h-2v-1h-6v1h-2v-1h-8v1h-1v-1h-3v1h-1v-1h-5v1h-1v-1h-5v1h-1v-1h-10v1h-1v-1h-8v1h-4v-1h-2v1h-2v-1h-17v1h-2v-1h-10v1h-2v-1h-5v1h-2v-1h-4v1h-5v-1h-2v1h-1v-1h-6v1h-3v-1h-1v1h-1v-1h-3v1h-3v-1h-1v1h-1v-1h-7v1h-2v-1h-5v1h-1v-1h-3v1h-1v-1h-2v1h-3v-1h-2v1h-1v-1h-4v1h-2v-1h-1v1h-3v-1h-7v1h-2v-1h-1v1h-1v-1h-6v1h-1v-1h-1v1h-3v-1h-8v1h-2v-1h-4v1h-1v-1h-3v1h-2v-1h-1v1h-1v-1h-15v1h-1v-1h-4v1h-1v-1h-1v1h-1v-1h-1v1h-2v-1h-8v1h-1v-1h-12v1h-1v-1h-6v1h-1v-1h-4v1h-1v-1h-1v1h-1v-1h-10v1h-1v-1h-6v1h-1v-1h-4v1h-2v-1h-5v1h-2v-1h-5v1h-1v-1h-5v1h-2v-1h-1v1h-1v-1h-4v1h-2v-1h-4v1h-1v-1h-4v1h-1v-1h-2v1h-1v-1h-9v1h-1v-1h-1v1h-1v-1h-1v1h-2v-1h-3v1h-1v-1h-5v1h-3v-1h-4v1h-1v-1h-6v1h-1v-1h-4v1h-2v-1h-1v1h-1v-1h-5v1h-3v-1h-19v1h-3v-1h-5v1h-1v-1h-9v1h-2v-1h-6v1h-1v-1h-3v1h-2v-1h-4v1h-1v-1h-19v1h-3v-1h-2v1h-1v-1h-4v1h-4v-1h-10v1h-1v-1h-5v1h-1v-1h-2v1h-1v-1h-1v1h-1v-1h-4v1h-1v-1h-5v1h-1v-1h-2v1h-1v-1h-1v1h-1v-1h-5v1h-1v-1h-3v1h-4v-1h-1v1h-5v-1h-2v1h-3v-1h-2v1h-2v-1h-2v2h-1v-2h-8v1h-1v-1h-2v2h-1v-2h-1v1h-1v-1h-1v1h-1v-1h-1v1h-1z M277 728h3v1h3v-1h1v1h2v-1h3v1h1v-1h1v1h2v-1h1v1h2v-1h1v1h1v-1h1v1h6v-1h1v1h6v-1h1v1h2v-1h1v1h7v-1h1v1h1v-1h2v1h1v-1h1v1h3v-1h4v1h3v-1h2v1h2v-1h4v1h6v-1h1v1h7v-1h1v1h4v-1h1v1h3v-1h2v1h1v-2h1v2h1v-1h1v1h1v-1h1v1h2v-1h3v1h2v-2h1v2h5v-1h1v1h7v-1h1v1h2v-1h1v1h1v-1h1v1h5v-1h2v1h2v-1h1v1h1v-1h1v1h1v-1h3v1h3v-1h1v1h1v-1h2v1h1v-1h1v1h2v-1h3v1h5v-1h3v1h3v-1h4v1h1v-1h1v1h4v-1h2v1h3v-1h2v1h2v-1h1v1h5v-1h1v1h2v-1h2v1h1v-1h2v1h1v-1h1v1h2v-1h3v1h2v-1h1v1h1v-1h1v1h2v-1h4v1h3v-1h1v1h3v-1h4v1h4v-1h2v1h4v-1h1v1h4v-1h4v1h5v-1h2v1h7v-1h1v1h2v-1h2v1h6v-1h1v1h2v-1h1v1h2v-1h2v1h2v-1h2v1h7v-1h2v1h5v-1h1v1h13v-1h9v1h3v-1h3v1h3v-1h3v1h5v-1h1v1h2v-1h1v1h1v-2h1v2h2v-1h6v1h2v-1h1v1h2v-1h2v1h15v-2h1v2h5v-1h1v1h2v-1h5v1h6v-1h1v1h1v-1h3v1h3v-1h1v1h1v-1h5v1h4v-1h6v1h1v-1h1v1h1v-1h2v1h1v-1h6v1h1v-1h1v1h2v-1h1v1h2v-1h1v1h2v-1h1v1h4v-1h1v1h2v-1h3v1h3v-1h4v1h2v-1h3v1h2v-1h1v1h5v-1h2v1h1v-1h1v1h1v-1h3v1h1v-1h1v1h1v-1h1v1h1v-1h1v1h10v-1h2v1h4v-1h3v1h5v-1h3v1h10v-1h1v1h1v-1h3v1h5v-1h3v1h2v-1h1v1h2v-1h1v1h6v-1h2v1h4v-1h2v1h5v-2h1v1h1v1h1v-1h6v1h2v-1h2v1h3v-1h3v1h1v-1h1v1h4v-1h1v1h7v-1h1v1h1v-1h1v1h1v-1h2v1h1v-1h1v1h5v-2h1v1h1v1h9v-1h2v1h1v-1h2v1h2v-1h6v1h5v-1h1v1h2v-1h2v1h2v-1h1v1h2v-1h1v1h4v-1h1v1h1v-1h1v1h13v-1h1v1h2v-1h3v1h4v-1h1v1h3v-1h3v1h4v-1h4v1h6v-1h2v1h9v-1h1v1h6v-1h1v1h1v-1h1v1h7v-1h2v1h1v-1h1v1h4v-1h1v1h4v-1h4v1h1v-1h2v1h10v-1h1v1h1v-1h3v1h3v-1h2v1h2v-1h1v1h2v-1h1v1h5v-1h1v1h6v-1h1v1h1v-1h2v1h1v-1h2v1h5v-1h3v1h7v-1h1v1h3v-1h2v1h1v-1h1v1h2v-1h1v1h3v-1h1v1h2v-1h3v1h6v-1h1v1h2v-1h1v1h12v-1h1v1h5v-1h3v1h5v-1h3v1h8v-1h1v1h3v-1h3v1h5v-1h1v1h2v-1h1v1h3v-1h2v1h1v-1h1v1h4v-1h3v1h2v-1h1v1h4v-1h4v1h2v-1h1v1h3v-1h2v1h5v-1h1v1h4v-1h1v1h2v-1h2v1h2v-1h2v1h4v-1h2v1h2v-1h2v1h1v-1h1v1h17v-1h1v1h6v-1h1v1h18v-1h3v1h1v-1h4v1h3v-1h3v1h1v-1h1v1h1v-1h2v1h4v-1h1v1h1v-1h1v1h10v-1h1v1h2v-1h3v1h6v-1h1v1h1v-1h4v1h8v-1h2v1h2v-1h1v1h3v-1h3v1h1v-1h4v1h2v-1h1v1h5v-1h1v1h2v-1h1v1h9v-1h2v1h6v-1h1v1h5v-1h1v1h1v-1h2v1h2v-1h4v1h3v3h-6v1h-1v-1h-9v1h-1v-1h-1v1h-2v-1h-3v1h-4v-1h-3v1h-1v-1h-3v1h-1v-1h-5v1h-1v-1h-7v1h-3v-1h-10v1h-1v-1h-2v1h-1v-1h-5v1h-7v-1h-4v1h-5v-1h-7v1h-5v-1h-13v1h-1v-1h-2v1h-1v-1h-2v1h-1v-1h-13v1h-3v-1h-1v1h-2v-1h-5v1h-1v-1h-1v1h-3v-1h-11v1h-1v-1h-1v1h-2v-1h-6v1h-1v-1h-1v1h-1v-1h-3v1h-1v-1h-10v1h-6v-1h-1v1h-1v-1h-1v1h-1v-1h-3v1h-2v-1h-10v1h-6v-1h-5v1h-3v-1h-4v1h-5v-1h-3v1h-2v-1h-1v1h-3v-1h-1v1h-1v-1h-3v1h-3v-1h-7v1h-1v-1h-2v1h-2v-1h-2v1h-4v-1h-5v1h-2v-1h-1v1h-2v-1h-8v1h-1v-1h-1v1h-1v-1h-5v1h-2v-1h-1v1h-1v-1h-8v1h-1v-1h-1v1h-2v-1h-4v1h-2v-1h-1v1h-4v-1h-6v1h-2v-1h-2v1h-7v-1h-1v1h-2v-1h-4v1h-3v-1h-1v1h-1v-1h-4v1h-1v-1h-1v1h-1v-1h-1v1h-3v-1h-5v1h-1v-1h-6v1h-1v-1h-1v1h-1v-1h-3v1h-1v-1h-3v1h-1v-1h-5v1h-1v-1h-3v1h-3v-1h-2v1h-2v-1h-1v1h-1v-1h-4v1h-1v-1h-2v1h-5v-1h-1v1h-2v-1h-4v1h-1v-1h-6v1h-3v-1h-1v1h-4v-1h-3v1h-1v-1h-1v1h-5v-1h-1v1h-1v-1h-5v1h-1v-1h-7v1h-1v-1h-1v1h-1v-1h-3v1h-2v-1h-1v1h-6v-1h-1v1h-1v-1h-5v1h-2v-1h-1v1h-2v-1h-2v1h-4v-1h-8v1h-2v-1h-7v1h-1v-1h-7v1h-2v-1h-3v1h-1v-1h-16v1h-4v-1h-5v1h-3v-1h-2v1h-3v-1h-2v1h-2v-1h-3v1h-1v-1h-2v1h-1v-1h-8v1h-2v-1h-2v1h-1v-1h-2v1h-2v-1h-1v1h-3v-1h-4v1h-1v-1h-2v1h-2v-1h-4v1h-2v-1h-1v1h-1v-1h-5v1h-1v-1h-2v1h-3v-1h-6v1h-1v-1h-1v1h-1v-1h-1v1h-1v-1h-2v1h-2v-1h-3v1h-2v-1h-3v1h-1v-1h-2v1h-1v-1h-3v1h-1v-1h-10v1h-1v-1h-3v1h-1v-1h-1v1h-2v-1h-6v1h-2v-1h-2v1h-3v-1h-1v1h-1v-1h-3v1h-1v-1h-9v1h-3v-1h-1v1h-1v-1h-9v1h-1v-1h-5v1h-5v-1h-1v1h-2v-1h-8v1h-3v-1h-3v1h-2v-1h-2v1h-1v-1h-2v1h-1v-1h-2v1h-1v-1h-3v1h-1v-1h-9v1h-3v-1h-2v1h-3v-1h-1v1h-4v-1h-5v1h-3v-1h-4v1h-3v-1h-1v1h-1v-1h-2v1h-2v-1h-8v1h-4v-1h-3v1h-3v-1h-1v1h-1v-1h-5v1h-2v-1h-4v1h-1v-1h-5v1h-1v-1h-6v1h-1v-1h-9v1h-4v-1h-13v1h-2v-1h-8v1h-1v-1h-12v1h-2v-1h-1v1h-3v-1h-1v1h-3v-1h-1v1h-1v-1h-4v1h-2v-1h-11v1h-2v-1h-6v1h-2v-1h-4v1h-1v-1h-4v1h-1v-1h-2v1h-2v-1h-5v1h-2v-1h-5v1h-1v-1h-10v1h-1v-1h-4v1h-1v-1h-1v1h-2v-1h-1v1h-5v-1h-8v1h-2v-1h-3v1h-2v-1h-2v1h-3v-1h-3v1h-1v-1h-7v1h-1v-1h-1v1h-1v-1h-5v1h-1v-1h-6v1h-1v-1h-2v1h-3v-1h-3v1h-3v-1h-1v1h-1v-1h-6v1h-1v-1h-4v1h-1v-1h-1v1h-2v-1h-3v2h-1v-1h-4v-1h-1v1h-1v-1h-1v1h-2v-1h-6v1h-2v-1h-8v1h-5v-1h-1v1h-1v-1h-5v1h-1v-1h-5v1h-4v-1h-6v1h-1v-1h-12z M277 759h2v-1h2v1h13v-1h1v1h4v-1h3v1h9v-1h2v1h1v-1h3v1h5v-1h3v1h1v-2h1v2h5v-1h1v1h2v-1h3v1h14v-1h2v1h1v-1h1v1h4v-1h1v1h12v-1h2v1h7v-1h4v1h1v-1h1v1h2v-1h1v1h8v-1h1v1h12v-1h1v1h6v-1h4v1h3v-1h1v1h3v-1h1v1h11v-2h1v2h12v-1h1v1h2v-1h2v1h2v-1h1v1h4v-1h1v1h6v-1h2v1h2v-1h3v1h4v-1h1v1h1v-1h5v1h4v-1h1v1h6v-1h4v1h13v-1h2v1h4v-1h3v1h4v-1h1v1h5v-1h2v1h3v-1h4v1h1v-1h2v1h3v-1h3v1h2v-1h1v1h2v-1h1v1h1v-1h1v1h3v-1h2v1h9v-1h1v1h1v-1h2v1h1v-1h1v1h1v-1h1v1h2v-1h2v1h3v-1h1v1h2v-1h1v1h2v-1h1v1h9v-1h2v1h5v-1h1v1h1v-1h1v1h2v-1h1v1h7v-1h2v1h3v-1h3v1h1v-1h2v1h2v-1h1v1h3v-1h1v1h3v-1h1v1h7v-1h1v1h1v-1h1v1h4v-1h1v1h2v-2h1v2h3v-1h1v1h6v-1h4v1h16v-1h2v1h11v-1h1v1h3v-1h1v1h1v-1h1v1h18v-1h3v1h12v-1h1v1h4v-1h3v1h1v-1h1v1h6v-1h1v1h3v-1h1v1h6v-1h1v1h5v-1h1v1h2v-1h1v1h1v-1h2v1h9v-1h1v1h7v-2h1v2h8v-1h4v1h1v-1h4v1h10v-1h1v1h9v-1h1v1h12v-2h1v2h1v-1h1v1h2v-1h2v1h6v-1h2v1h5v-1h1v1h4v-1h2v1h8v-2h1v2h2v-1h1v1h1v-1h2v1h5v-1h1v1h5v-1h2v1h3v-1h1v1h3v-1h3v1h4v-1h2v1h2v-1h2v1h3v-1h4v1h10v-1h3v1h2v-1h2v1h1v-1h2v1h13v-1h1v1h3v-1h2v1h10v-1h1v1h2v-1h3v1h2v-1h2v1h2v-1h1v1h3v-1h2v1h6v-1h1v1h5v-1h2v1h9v-1h2v1h2v-1h1v1h1v-1h1v1h5v-2h1v2h3v-1h3v1h4v-1h1v1h6v-1h1v1h6v-1h1v1h15v-1h2v1h10v-1h1v1h4v-1h1v1h6v-1h1v1h5v-1h1v1h1v-1h7v1h2v-1h3v1h3v-1h1v1h3v-1h1v1h5v-1h2v1h2v-1h2v1h3v-1h1v1h8v-1h2v1h1v-1h2v1h2v-1h1v1h5v-1h2v1h5v-1h3v1h1v-1h2v1h3v-1h1v1h1v-1h2v1h1v-1h2v1h16v-1h4v1h1v-1h1v1h6v-1h2v1h2v-1h1v1h4v-1h2v1h4v-1h1v1h2v-1h1v1h8v-1h1v1h1v-1h2v1h6v-1h2v1h6v-1h1v1h1v-1h1v1h7v-1h1v1h1v-1h1v1h10v-2h1v2h4v-1h1v1h1v-1h2v1h7v-1h2v1h1v-1h3v1h2v-1h2v1h5v-1h5v1h1v-1h1v1h7v-1h1v1h1v-1h2v1h33v-1h1v1h1v-1h1v1h17v-1h2v1h2v-1h2v1h1v5h-2v-1h-4v1h-1v-1h-4v1h-2v-1h-7v1h-1v-1h-5v1h-2v-1h-2v1h-1v-1h-1v1h-1v-1h-4v1h-3v-1h-6v1h-1v-1h-7v1h-1v-1h-13v1h-1v-1h-2v1h-3v-1h-3v1h-3v-1h-2v1h-3v-1h-3v1h-2v-1h-6v1h-1v-1h-2v1h-1v-1h-3v1h-6v-1h-3v1h-3v-1h-3v1h-1v-1h-3v1h-3v-1h-4v1h-1v-1h-2v1h-1v-1h-5v1h-1v-1h-2v1h-1v-1h-12v1h-2v-1h-1v1h-1v-1h-5v1h-1v-1h-2v1h-1v-1h-9v1h-1v-1h-10v1h-1v-1h-1v1h-1v-1h-2v1h-1v-1h-1v1h-1v-1h-2v1h-1v-1h-2v1h-2v-1h-2v1h-1v-1h-6v1h-3v-1h-3v1h-4v-1h-1v1h-1v-1h-5v1h-1v-1h-1v1h-1v-1h-2v1h-1v-1h-1v1h-1v-1h-6v2h-1v-2h-6v1h-1v-1h-5v1h-4v-1h-7v1h-2v-1h-10v1h-1v-1h-6v1h-6v-1h-3v1h-1v-1h-2v1h-4v-1h-10v1h-1v-1h-1v1h-1v-1h-10v1h-2v-1h-3v1h-3v-1h-8v1h-1v-1h-2v1h-1v-1h-2v1h-4v-1h-13v1h-1v-1h-3v1h-3v-1h-1v1h-1v-1h-1v1h-5v-1h-4v1h-3v-1h-2v1h-2v-1h-5v1h-1v-1h-1v1h-3v-1h-3v1h-3v-1h-1v1h-5v-1h-1v1h-2v-1h-3v1h-2v-1h-9v1h-2v-1h-3v1h-2v-1h-1v1h-1v-1h-3v1h-1v-1h-8v1h-3v-1h-1v1h-1v-1h-7v1h-2v-1h-5v1h-1v-1h-7v1h-3v-1h-1v1h-1v-1h-4v1h-2v-1h-1v1h-3v-1h-3v1h-2v-1h-8v1h-2v-1h-1v1h-1v-1h-1v1h-3v-1h-6v1h-2v1h-1v-1h-2v-1h-2v1h-2v-1h-1v1h-1v-1h-1v1h-3v-1h-1v1h-4v-1h-6v1h-1v-1h-8v1h-2v-1h-2v1h-1v-1h-2v1h-1v-1h-1v1h-1v-1h-2v1h-1v-1h-8v1h-2v-1h-6v1h-2v-1h-1v1h-2v-1h-1v1h-1v-1h-6v1h-1v-1h-7v1h-2v-1h-1v1h-1v-1h-12v1h-3v-1h-2v1h-1v-1h-5v1h-2v-1h-2v1h-1v-1h-6v1h-1v-1h-2v1h-2v-1h-8v1h-2v-1h-4v1h-1v-1h-1v1h-1v-1h-1v1h-3v-1h-1v1h-1v-1h-4v1h-1v-1h-1v1h-2v-1h-4v1h-2v-1h-6v1h-5v-1h-4v1h-1v-1h-3v1h-2v-1h-2v1h-1v-1h-3v1h-1v-1h-6v1h-1v-1h-2v1h-1v-1h-7v1h-2v-1h-12v1h-1v-1h-1v1h-4v-1h-4v1h-3v-1h-2v1h-2v-1h-1v1h-3v-1h-3v1h-2v-1h-3v1h-1v-1h-6v1h-1v-1h-3v1h-1v-1h-1v1h-1v-1h-1v1h-2v-1h-8v1h-1v-1h-2v1h-2v-1h-1v1h-2v-1h-13v1h-1v-1h-6v1h-1v-1h-2v1h-2v-1h-6v1h-2v-1h-1v1h-1v-1h-2v1h-1v-1h-4v1h-1v-1h-2v1h-1v-1h-2v1h-4v-1h-4v1h-3v-1h-1v1h-1v-1h-9v1h-2v-1h-7v1h-1v-1h-5v1h-1v-1h-3v1h-1v-1h-1v1h-1v-1h-8v1h-4v-1h-4v1h-4v-1h-4v1h-1v-1h-7v1h-3v-1h-4v1h-1v-1h-9v1h-2v-1h-2v1h-3v-1h-1v1h-2v-1h-1v1h-1v-1h-11v1h-2v-1h-9v1h-2v-1h-9v2h-1v-1h-1v-1h-1v1h-1v-1h-1v1h-3v-1h-4v1h-1v-1h-4v1h-2v-1h-2v1h-2v-1h-2v1h-2v-1h-1v1h-2v-1h-3v1h-1v-1h-6v1h-6v-1h-12v1h-2v-1h-1v1h-1v-1h-2v1h-1v-1h-16v1h-2v-1h-7v1h-1v-1h-1v1h-1v-1h-2v1h-1v-1h-13v1h-1v-1h-5v1h-2v-1h-2v1h-1v-1h-7v1h-3v-1h-2v1h-3z M277 790h2v-1h1v1h4v-1h1v1h10v-1h2v1h2v-1h5v1h1v-1h2v1h2v-1h1v1h6v-1h4v1h1v-1h1v1h3v-1h3v1h3v-1h1v1h7v-1h1v1h16v-1h1v1h3v-1h3v1h2v-2h1v2h4v-1h1v1h1v-1h2v1h1v-1h1v1h4v-1h3v1h1v-1h2v1h13v-1h1v1h2v-1h1v1h7v-1h1v1h4v-1h1v1h1v-1h2v1h1v-1h3v1h2v-1h6v1h1v-1h1v1h1v-1h1v1h1v-1h4v1h20v-1h1v1h2v-1h1v1h1v-1h3v1h14v-1h10v1h4v-1h2v1h1v-1h1v1h3v-1h1v1h3v-1h1v1h2v-1h1v1h3v-1h1v1h1v-1h1v1h1v-1h2v1h3v-1h2v1h4v-1h1v1h2v-1h3v1h1v-1h4v1h1v-1h2v1h10v-1h1v1h1v-1h1v1h1v-1h2v1h4v-1h1v1h2v-1h3v1h6v-1h1v1h7v-1h2v1h1v-1h1v1h3v-1h1v1h5v-1h2v1h1v-1h1v1h2v-1h1v1h2v-1h1v1h1v-1h1v1h1v-1h2v1h3v-1h1v1h1v-1h1v1h7v-1h1v1h1v-1h1v1h9v-1h2v1h8v-1h2v1h1v-1h1v1h1v-1h1v1h2v-1h3v1h7v-1h1v1h2v-1h1v1h12v-1h3v1h1v-1h1v1h10v-1h2v1h4v-2h1v2h1v-1h2v1h3v-1h1v1h3v-1h4v1h5v-1h3v1h1v-1h1v1h1v-1h1v1h2v-1h1v1h3v-1h3v1h2v-1h1v1h1v-1h3v1h3v-1h1v1h1v-1h3v1h11v-1h1v1h1v-1h2v1h1v-1h1v1h2v-1h1v1h5v-1h1v1h1v-1h1v1h6v-1h2v1h3v-1h5v1h4v-1h1v1h2v-1h1v1h10v-1h3v1h1v-1h3v1h4v-1h1v1h3v-1h1v1h6v-1h1v1h6v-1h1v1h3v-1h1v1h3v-1h2v1h3v-1h2v1h4v-1h2v1h1v-1h4v1h2v-1h1v1h5v-1h1v1h8v-1h2v1h4v-1h4v1h3v-1h1v1h2v-1h2v1h2v-1h2v1h13v-1h1v1h1v-1h2v1h1v-1h2v1h7v-1h2v1h3v-1h1v1h2v-1h1v1h1v-1h1v1h1v-1h6v1h1v-1h2v1h7v-1h3v1h2v-1h2v1h1v-1h3v1h4v-1h1v1h3v-1h1v1h2v-1h1v1h3v-1h1v1h6v-1h1v1h1v-1h1v1h12v-1h1v1h9v-1h1v1h10v-1h3v1h1v-1h1v1h6v-1h2v1h10v-1h1v1h1v-1h1v1h2v-1h2v1h1v-1h3v1h4v-1h1v1h5v-1h1v1h11v-1h3v1h2v-1h2v1h2v-1h3v1h4v-1h1v1h1v-1h1v1h2v-1h4v1h3v-1h5v1h2v-1h1v1h17v-1h1v1h3v-1h1v1h4v-1h3v1h1v-1h3v1h1v-1h1v1h1v-1h3v1h9v-1h1v1h1v-1h2v1h12v-1h3v1h6v-1h1v1h10v-1h2v1h2v-1h5v1h1v-1h1v1h2v-1h1v1h1v-1h2v1h6v-1h3v1h1v-1h3v1h1v-1h1v1h7v-1h1v1h13v-1h1v1h1v-1h3v1h2v-1h3v1h8v-1h3v1h3v-1h4v1h5v-1h5v1h4v-1h3v1h1v-1h1v1h3v-1h1v1h13v-1h5v1h5v-1h6v1h2v-1h1v1h7v-1h1v1h1v-2h2v1h4v1h1v-1h1v1h1v-1h1v1h2v-1h2v1h10v-1h3v1h3v-1h1v1h1v-1h1v1h3v-1h1v1h2v-1h1v1h7v-1h1v1h1v4h-3v-1h-5v1h-1v-1h-6v1h-2v-1h-3v1h-1v-1h-2v1h-3v-1h-3v1h-1v-1h-4v1h-6v-1h-1v1h-1v-1h-1v1h-2v1h-1v-1h-1v1h-2v-1h-4v-1h-1v1h-1v-1h-2v1h-1v-1h-1v1h-1v-1h-1v1h-1v-1h-1v1h-3v-1h-2v1h-1v-1h-1v1h-1v-1h-1v1h-3v-1h-3v1h-2v-1h-1v1h-3v-1h-2v1h-1v-1h-1v1h-2v-1h-2v1h-1v-1h-2v1h-1v-1h-2v1h-1v-1h-1v1h-1v-1h-6v1h-3v-1h-5v1h-1v-1h-1v1h-3v-1h-1v1h-3v-1h-6v1h-1v-1h-4v1h-3v-1h-1v1h-1v-1h-3v1h-4v-1h-1v1h-1v-1h-5v1h-4v-1h-2v1h-4v-1h-4v1h-4v-1h-1v1h-3v-1h-5v1h-2v-1h-5v1h-2v-1h-3v1h-1v-1h-2v1h-4v-1h-1v1h-2v-1h-1v1h-2v-1h-1v1h-1v-1h-2v1h-3v-1h-2v1h-1v-1h-13v1h-3v-1h-1v1h-1v-1h-4v1h-1v-1h-3v1h-1v-1h-1v1h-4v-1h-5v1h-1v-1h-7v1h-3v-1h-11v1h-3v-1h-1v1h-3v-1h-6v1h-1v-1h-4v1h-1v-1h-1v1h-2v-1h-3v1h-2v-1h-1v1h-2v-1h-1v1h-1v-1h-1v1h-2v-1h-1v1h-1v-1h-2v1h-3v-1h-1v1h-2v-1h-2v1h-1v-1h-1v1h-3v-1h-1v1h-1v-1h-1v1h-3v-1h-4v1h-1v-1h-1v1h-7v-1h-1v1h-2v-1h-1v1h-1v-1h-3v1h-1v-1h-1v1h-3v-1h-5v1h-3v-1h-2v1h-4v-1h-5v1h-2v-1h-2v1h-3v-1h-2v1h-10v-1h-4v1h-1v-1h-5v1h-2v-1h-1v1h-1v-1h-1v1h-2v-1h-4v1h-1v-1h-2v1h-1v-1h-2v1h-2v-1h-2v1h-1v-1h-1v1h-1v-1h-2v1h-1v-1h-1v1h-12v-1h-5v1h-3v-1h-2v1h-2v-1h-4v1h-3v-1h-3v1h-1v-1h-2v1h-1v-1h-1v1h-2v-1h-2v1h-1v-1h-3v1h-3v-1h-1v1h-2v-1h-4v1h-8v-1h-1v1h-1v-1h-1v1h-1v-1h-2v1h-1v-1h-6v1h-2v-1h-1v1h-1v-1h-1v1h-1v-1h-3v1h-6v-1h-4v1h-1v-1h-4v1h-4v-1h-4v1h-2v-1h-2v1h-3v-1h-4v1h-1v-1h-1v1h-1v-1h-1v1h-1v-1h-1v1h-2v-1h-1v1h-1v-1h-2v1h-1v-1h-1v1h-5v-1h-2v1h-1v-1h-1v1h-1v-1h-3v1h-2v-1h-2v1h-4v-1h-1v1h-1v-1h-3v1h-2v-1h-12v1h-1v-1h-5v1h-1v-1h-5v2h-1v-2h-1v1h-1v-1h-3v1h-1v-1h-4v1h-2v-1h-3v1h-1v-1h-2v1h-1v-1h-1v1h-1v-1h-1v1h-1v-1h-1v1h-2v-1h-2v1h-1v-1h-4v1h-6v-1h-6v1h-5v-1h-2v1h-3v-1h-1v1h-1v-1h-5v1h-4v-1h-1v1h-4v-1h-7v1h-2v-1h-3v1h-3v-1h-4v1h-1v-1h-2v1h-3v-1h-4v1h-1v-1h-4v1h-1v-1h-1v1h-3v-1h-4v1h-1v-1h-3v1h-1v-1h-3v1h-1v-1h-1v1h-3v-1h-3v1h-2v-1h-6v1h-3v-1h-4v1h-1v-1h-1v1h-5v-1h-1v1h-1v-1h-2v1h-2v-1h-2v1h-3v-1h-1v1h-1v-1h-1v1h-1v-1h-1v1h-3v-1h-1v1h-1v-1h-2v1h-1v-1h-1v1h-1v-1h-1v1h-2v-1h-1v1h-1v-1h-5v1h-2v-1h-2v1h-1v-1h-7v1h-1v-1h-7v1h-7v-1h-4v1h-1v-1h-1v1h-1v-1h-2v1h-1v-1h-1v1h-1v-1h-13v1h-1v-1h-5v1h-1v-1h-5v1h-2v-1h-3v1h-2v-1h-2v1h-2v-1h-1v1h-4v-1h-2v1h-1v-1h-2v1h-2v-1h-2v1h-2v-1h-6v1h-2v1h-1v-2h-2v1h-2v-1h-1v1h-1v-1h-1v1h-3v-1h-2v1h-1v-1h-1v1h-2v-1h-4v1h-1v-1h-2v1h-2v-1h-2v1h-2v-1h-3v1h-4v-1h-6v1h-1v-1h-1v1h-2v-1h-7v1h-1v-1h-1v1h-1v-1h-1v1h-1v-1h-4v2h-1v-2h-1v1h-1v-1h-2v1h-2v-1h-4v1h-1v-1h-2v1h-4v-1h-1v1h-1v-1h-1v1h-4v-1h-2v1h-1v-1h-2v1h-1v-1h-3v2h-1v-1h-2v-1h-3v1h-1v-1h-1v1h-1v-1h-11v1h-1v-1h-4v1h-1v-1h-1v1h-1v-1h-1v1h-3v-1h-2v1h-2v-1h-1v1h-2v-1h-9v1h-2v-1h-2v1h-4v-1h-1v1h-5v-1h-4v1h-2v-1h-3v1h-1v-1h-6v1h-4v-1h-2v1h-4v-1h-7v1h-2v-1h-2v1h-3v-1h-7v1h-1v-1h-1v1h-2v1h-1v-2h-1v1h-3z M277 819h1v1h1v-1h3v1h2v-1h10v1h7v-1h1v1h4v-1h2v1h1v-1h4v1h1v-1h1v1h3v-1h3v1h3v-1h5v1h1v-1h1v1h4v-1h1v1h1v-1h7v1h2v-1h2v1h1v-1h3v1h3v-1h2v1h2v-1h4v1h5v-1h1v1h1v-1h1v1h4v-1h1v1h2v-1h1v1h4v-1h2v1h2v-1h1v1h5v-1h2v1h10v-1h1v1h1v-1h2v1h2v-1h2v1h9v-1h2v1h6v-1h3v1h1v-1h1v1h3v-1h2v1h9v-1h1v1h2v-1h1v1h2v-1h1v1h1v-1h2v1h5v-1h1v1h10v-1h1v1h1v-1h1v1h1v-1h3v-1h1v2h3v-1h1v1h2v-1h2v1h1v-1h2v1h2v-1h2v1h3v-1h3v1h2v-1h2v1h2v-1h1v1h2v-1h3v1h4v-1h1v1h1v-1h1v1h2v-1h1v1h3v-1h1v1h1v-1h2v1h1v-1h6v1h2v-1h1v1h5v-1h2v1h5v-1h2v1h1v-1h6v1h1v-1h1v1h4v-1h2v1h6v-1h1v1h2v-1h1v1h1v-1h1v1h2v-1h3v1h4v-1h1v1h6v-1h1v1h1v-1h3v1h4v-1h3v1h1v-1h6v1h2v-1h2v1h7v-1h3v1h5v-1h2v1h2v-1h1v1h6v-1h1v1h3v-1h1v1h1v-1h10v1h7v-1h2v1h4v-1h1v1h3v-1h2v1h1v-1h1v1h2v-1h1v1h3v-1h1v1h6v-1h2v1h3v-1h2v1h1v-1h1v1h7v-1h3v1h1v-1h4v1h8v-1h1v1h6v-1h1v1h4v-1h1v1h1v-1h1v1h4v-1h2v1h9v-1h3v1h4v-1h1v1h2v-1h3v1h2v-1h2v1h6v-1h1v1h1v-1h2v1h2v-1h2v1h3v-1h3v1h2v-1h1v1h2v-1h1v1h3v-1h1v1h8v-1h2v1h1v-1h3v1h3v-1h3v1h6v-1h4v1h3v-1h3v1h6v-1h1v1h1v-1h2v1h4v-1h1v1h2v-1h6v1h7v-1h1v1h3v-1h2v1h1v-1h3v1h1v-1h5v1h3v-1h1v1h1v-1h2v1h2v-1h1v1h2v-1h1v1h2v-1h1v1h8v-1h1v1h1v-1h1v1h3v-1h2v1h15v-1h4v1h2v-1h1v1h1v-1h1v1h5v-1h6v1h1v-1h1v1h4v-1h1v1h1v-1h3v1h3v-1h1v1h6v-1h1v1h1v-1h2v1h1v-1h4v1h7v-1h1v1h6v-1h2v1h1v-1h6v1h7v-1h2v1h2v-1h1v1h6v-1h1v1h3v-1h2v1h1v-1h4v1h1v-1h2v1h1v-1h1v1h2v-1h4v1h1v-1h3v1h1v-1h3v1h2v-1h1v1h3v-1h3v1h1v-1h1v1h1v-1h4v1h4v-1h1v1h15v-1h1v1h3v-1h4v1h3v-1h4v1h1v-1h1v1h6v-1h3v1h1v-1h1v1h6v-1h3v1h3v-1h5v1h2v-1h2v1h3v-1h5v1h1v-1h2v1h6v-1h2v1h2v-1h1v1h1v-1h2v1h2v-1h3v1h1v-1h1v1h1v-1h5v1h1v-1h3v1h2v-1h1v1h5v-1h2v1h1v-1h3v1h1v-1h3v1h7v-1h1v1h8v-1h2v1h2v-1h1v1h1v-1h1v1h3v-1h1v1h6v-1h1v1h1v-2h1v1h1v1h2v-1h1v1h5v-1h1v1h1v-1h5v1h5v-2h1v2h4v-1h1v1h3v-1h2v1h1v-1h1v1h2v-1h1v1h7v-1h1v1h1v-1h1v1h8v-1h1v1h1v-1h2v1h2v-1h3v1h6v-1h4v1h9v-1h2v1h1v-1h1v1h4v-1h1v1h1v-1h2v1h4v-1h3v1h1v-1h3v1h4v-1h1v1h4v-2h1v1h3v1h3v-1h2v1h3v-1h1v1h2v-1h1v1h1v-1h1v1h1v-1h1v1h2v-1h3v1h1v-1h4v1h1v-1h1v1h4v-1h2v1h6v-1h4v4h-1v1h-2v-1h-1v1h-1v-1h-2v1h-3v-1h-6v1h-1v-1h-6v1h-3v-1h-5v1h-4v-1h-3v1h-4v-1h-1v1h-1v-1h-1v1h-1v-1h-1v1h-1v-1h-3v1h-1v-1h-5v1h-3v-1h-1v1h-2v-1h-1v1h-3v-1h-2v1h-4v-1h-7v1h-1v-1h-3v1h-1v-1h-2v1h-1v-1h-2v1h-3v-1h-1v1h-3v-1h-1v1h-6v-1h-3v1h-6v-1h-1v1h-2v-1h-3v1h-2v-1h-2v1h-1v-1h-2v1h-1v-1h-2v1h-1v-1h-2v1h-2v-1h-1v1h-1v-1h-11v1h-3v-1h-2v1h-1v-1h-1v1h-1v-1h-4v1h-2v-1h-1v1h-3v-1h-3v1h-2v-1h-3v1h-1v-1h-3v1h-1v-1h-1v1h-1v-1h-3v1h-5v-1h-2v1h-2v-1h-5v1h-1v-1h-1v1h-1v-1h-4v1h-1v-1h-2v1h-2v-1h-1v1h-6v-1h-12v1h-1v-1h-3v1h-1v-1h-4v1h-2v-1h-5v1h-1v-1h-1v1h-1v-1h-1v1h-1v-1h-1v1h-2v-1h-3v1h-2v-1h-1v1h-2v-1h-6v1h-3v-1h-3v1h-1v-1h-7v1h-1v-1h-3v1h-3v-1h-1v1h-1v-1h-4v1h-1v-1h-4v1h-2v-1h-1v1h-1v-1h-2v1h-1v-1h-1v1h-2v-1h-1v1h-2v-1h-5v1h-1v-1h-7v1h-1v-1h-3v1h-1v-1h-1v1h-4v-1h-4v1h-1v-1h-3v1h-1v-1h-2v1h-2v-1h-4v1h-1v-1h-3v1h-1v-1h-1v1h-1v-1h-1v1h-3v-1h-1v1h-6v-1h-2v1h-1v-1h-4v1h-2v-1h-6v1h-1v-1h-1v1h-3v-1h-1v1h-3v-1h-2v1h-1v-1h-1v1h-1v-1h-2v1h-3v-1h-1v1h-1v-1h-3v1h-2v-1h-1v1h-2v-1h-1v1h-1v-1h-5v1h-2v-1h-6v1h-3v-1h-2v1h-1v-1h-3v1h-2v-1h-13v1h-2v-1h-3v1h-5v-1h-2v1h-1v-1h-1v1h-2v-1h-5v1h-1v-1h-1v1h-2v-1h-3v1h-1v-1h-1v1h-1v-1h-6v1h-2v-1h-1v1h-1v-1h-1v1h-5v-1h-3v1h-1v-1h-2v1h-3v-1h-3v1h-1v-1h-2v1h-3v-1h-1v1h-1v-1h-2v1h-6v-1h-4v1h-4v-1h-3v1h-3v-1h-1v1h-2v-1h-2v1h-2v-1h-3v1h-3v-1h-2v1h-1v-1h-2v1h-1v-1h-3v1h-1v-1h-1v1h-5v-1h-2v1h-1v-1h-2v1h-1v-1h-1v1h-1v-1h-2v1h-7v-1h-4v1h-2v-1h-2v1h-1v-1h-1v1h-1v-1h-6v1h-1v-1h-2v1h-2v-1h-6v1h-1v-1h-2v1h-3v-1h-1v1h-2v-1h-1v1h-3v-1h-4v1h-2v-1h-2v1h-3v-1h-4v1h-2v-1h-1v1h-1v-1h-5v1h-2v-1h-1v1h-1v-1h-3v1h-2v-1h-1v1h-3v-1h-1v1h-1v-1h-4v1h-1v-1h-1v1h-2v-1h-4v1h-1v-1h-5v1h-3v-1h-5v1h-1v-1h-4v1h-1v-1h-8v1h-1v-1h-1v1h-2v-1h-3v1h-3v-1h-3v1h-6v-1h-2v1h-1v-1h-2v1h-4v-1h-1v1h-4v-1h-3v1h-2v-1h-1v1h-1v-1h-1v1h-1v-1h-2v1h-4v-1h-1v1h-2v-1h-1v1h-1v-1h-2v1h-1v-1h-1v1h-2v-1h-1v1h-1v-1h-2v1h-10v-1h-7v1h-1v-1h-1v1h-3v-1h-2v1h-3v-1h-1v1h-3v-1h-1v1h-4v-1h-4v1h-10v-1h-2v1h-4v-1h-2v1h-1v-1h-1v1h-1v-1h-3v1h-1v-1h-3v1h-1v-1h-2v1h-1v-1h-1v1h-2v-1h-2v1h-2v-1h-1v1h-1v-1h-2v1h-4v-1h-2v1h-3v-1h-4v1h-2v-1h-2v1h-1v-1h-1v1h-1v-1h-1v1h-1v-1h-3v2h-1v-1h-3v-1h-3v1h-2v-1h-1v1h-3v-1h-2v1h-1v-1h-2v1h-1v-1h-2v1h-2v-1h-2v1h-3v-1h-3v1h-4v-1h-7v1h-1v-1h-5v1h-4v-1h-4v1h-2v-1h-1v1h-1v-1h-2v1h-2v-1h-3v1h-3v-1h-1v1h-1v-1h-3v1h-2v-1h-3v1h-4v-1h-2v1h-2v-1h-1v1h-2v-1h-14v1h-1v-1h-5v1h-4v-1h-4v1h-1v-1h-1v1h-1v-1h-2v1h-1v-1h-3v1h-6v-1h-1v1h-3v-1h-2v1h-1v-1h-3v1h-1v-1h-4v1h-3v-1h-3v1h-2v-1h-1v1h-2v-1h-1v1h-1v-1h-5v1h-2v-1h-8v1h-2v-1h-2v1h-1v-1h-1v1h-3v-1h-3v1h-1v-1h-4v1h-2v-1h-1v1h-7v-1h-4v1h-1v-1h-7v1h-1v-1h-1v1h-4v-1h-1v1h-3v-1h-2v1h-4v-1h-2v1h-2v-1h-6v1h-1v-1h-4z M277 850h11v-1h2v1h11v-1h1v1h7v-1h1v1h5v-1h2v1h8v-1h4v1h17v-1h1v1h4v-1h1v1h1v-1h1v1h3v-1h1v1h9v-1h4v1h1v-1h1v1h2v-1h4v1h17v-1h3v1h1v-1h1v1h2v-1h1v1h8v-1h2v1h1v-1h1v1h1v-1h5v1h5v-1h1v1h3v-1h2v1h3v-1h1v1h6v-1h1v1h4v-1h1v1h1v-1h1v1h2v-1h1v1h16v-1h1v1h1v-1h1v1h4v-1h2v1h2v-1h2v1h2v-1h1v1h2v-1h1v1h1v-1h2v1h1v-1h2v1h2v-1h1v-1h1v2h5v-1h4v1h10v-1h2v1h2v-1h2v1h3v-1h1v1h1v-1h3v1h3v-1h1v1h1v-1h1v1h1v-1h3v1h4v-1h1v1h6v-1h1v1h21v-1h2v1h2v-1h1v1h3v-1h1v1h1v-1h3v1h3v-1h4v1h2v-1h1v1h1v-1h2v1h7v-1h1v1h1v-1h1v1h13v-1h1v1h5v-1h1v1h4v-1h2v1h20v-1h2v1h12v-1h1v1h8v-1h1v1h21v-1h1v1h6v-1h2v1h4v-1h1v1h9v-1h1v1h2v-1h1v1h1v-1h3v1h4v-1h4v1h1v-1h1v1h10v-1h1v1h3v-1h3v1h3v-1h1v1h1v-1h2v1h7v-1h1v1h11v-1h2v1h10v-1h1v1h14v-1h1v1h3v-1h2v1h6v-1h1v1h2v-1h1v1h3v-1h3v1h2v-1h3v1h6v-2h1v2h4v-1h2v1h5v-1h1v1h1v-1h2v1h11v-1h1v1h6v-1h3v1h1v-1h2v1h5v-1h3v1h1v-1h1v1h10v-1h1v1h21v-1h1v1h6v-1h1v1h3v-1h1v1h10v-1h1v1h1v-2h1v2h12v-1h3v1h5v-1h1v1h3v-1h2v1h5v-1h1v1h6v-1h1v1h9v-1h1v1h6v-1h1v1h3v-1h1v1h9v-1h2v1h5v-1h1v1h8v-1h1v1h2v-1h4v1h10v-1h2v1h12v-1h3v1h1v-1h3v1h1v-1h1v1h1v-1h1v1h1v-1h1v1h2v-1h1v1h4v-1h5v1h3v-1h1v1h2v-1h1v1h7v-1h1v1h5v-1h1v1h15v-1h2v1h9v-1h3v1h1v-1h1v1h7v-1h2v1h3v-2h1v2h5v-1h2v1h5v-1h1v1h6v-1h3v1h2v-1h2v1h6v-1h2v1h2v-1h3v1h1v-1h3v1h6v-1h2v1h3v-1h1v1h5v-1h1v1h2v-1h1v1h4v-1h1v1h3v-1h3v1h1v-1h1v1h1v-1h1v1h2v-1h1v1h8v-1h1v1h4v-1h2v1h5v-1h3v1h1v-1h1v1h2v-1h3v1h5v-1h1v1h1v-1h3v1h3v-1h2v1h20v-1h2v1h5v-1h4v1h7v-1h2v1h5v-1h1v1h11v-1h1v1h8v-1h2v1h4v-1h1v1h2v-1h1v1h3v-1h3v1h1v-1h2v1h4v-1h2v1h5v-1h1v1h3v-1h1v1h15v4h-5v1h-2v-1h-1v1h-1v-1h-7v1h-2v-1h-4v1h-1v-1h-4v1h-3v-1h-4v1h-2v-1h-1v1h-2v-1h-5v1h-1v-1h-7v1h-3v-1h-3v1h-1v-1h-2v1h-2v-1h-3v1h-1v-1h-3v1h-2v-1h-1v1h-1v-1h-1v1h-2v-1h-1v1h-2v-1h-2v1h-1v-1h-2v1h-6v-1h-2v1h-2v-1h-3v1h-2v-1h-8v1h-5v-1h-1v1h-2v-1h-3v1h-3v-1h-4v1h-1v-1h-1v1h-1v-1h-1v1h-1v-1h-1v1h-1v-1h-5v1h-2v-1h-1v1h-2v-1h-3v1h-4v-1h-3v1h-1v-1h-1v1h-1v-1h-1v1h-2v-1h-14v1h-1v-1h-4v1h-1v-1h-8v1h-1v-1h-11v1h-4v-1h-4v1h-1v-1h-6v1h-3v-1h-2v1h-1v-1h-10v1h-1v-1h-10v1h-2v-1h-1v1h-2v-1h-2v1h-1v-1h-1v1h-2v-1h-3v1h-1v-1h-6v1h-2v-1h-9v1h-2v-1h-3v1h-1v-1h-1v1h-1v-1h-3v1h-1v-1h-8v1h-1v-1h-1v1h-1v-1h-4v1h-2v-1h-2v1h-1v-1h-10v1h-3v-1h-3v1h-1v-1h-2v1h-2v-1h-3v1h-1v-1h-1v1h-2v-1h-8v1h-4v-1h-11v1h-1v-1h-2v1h-3v-1h-7v1h-1v-1h-8v1h-1v-1h-2v1h-3v-1h-2v1h-1v-1h-9v1h-1v-1h-4v1h-12v-1h-1v1h-1v-1h-2v1h-2v-1h-2v1h-3v-1h-7v1h-2v-1h-1v1h-1v-1h-3v1h-1v-1h-1v1h-1v-1h-5v1h-2v-1h-1v1h-1v-1h-12v1h-2v-1h-6v1h-1v-1h-2v1h-1v-1h-10v1h-3v-1h-1v1h-2v-1h-13v1h-1v-1h-11v1h-1v-1h-4v1h-6v-1h-4v1h-1v-1h-6v1h-1v-1h-6v1h-1v-1h-4v1h-1v-1h-3v1h-2v-1h-1v1h-3v-1h-3v1h-3v-1h-3v1h-1v-1h-1v1h-1v-1h-4v1h-1v-1h-2v1h-2v-1h-7v1h-1v-1h-1v1h-1v-1h-10v1h-2v-1h-2v1h-5v-1h-1v1h-1v-1h-7v2h-1v-1h-1v-1h-1v1h-1v-1h-2v1h-2v-1h-6v1h-1v-1h-10v1h-2v-1h-2v1h-2v-1h-1v1h-2v-1h-5v1h-2v-1h-1v1h-2v-1h-9v1h-1v-1h-2v1h-1v-1h-3v1h-1v-1h-1v1h-2v-1h-1v1h-2v-1h-4v1h-3v-1h-2v1h-1v-1h-11v1h-2v-1h-2v1h-1v-1h-10v1h-3v-1h-2v1h-1v-1h-2v1h-1v-1h-1v1h-1v-1h-2v1h-1v-1h-1v1h-3v-1h-5v1h-1v-1h-1v1h-3v-1h-5v1h-2v-1h-8v1h-1v-1h-1v1h-3v-1h-1v1h-2v-1h-6v1h-1v-1h-3v1h-1v-1h-1v1h-3v-1h-5v1h-2v-1h-2v1h-2v-1h-4v1h-1v-1h-4v1h-1v-1h-5v1h-3v-1h-2v1h-1v-1h-6v1h-4v-1h-1v1h-5v-1h-1v1h-2v-1h-1v1h-2v-1h-5v1h-1v-1h-3v1h-3v-1h-3v1h-6v-1h-3v1h-5v-1h-1v1h-1v-1h-2v1h-1v-1h-1v1h-1v-1h-2v1h-1v-1h-1v1h-2v-1h-4v2h-1v-1h-1v-1h-1v1h-1v-1h-9v1h-1v-1h-4v1h-1v-1h-4v1h-3v-1h-7v1h-2v-1h-3v1h-1v-1h-12v1h-2v-1h-2v1h-1v-1h-1v1h-1v-1h-2v1h-5v-1h-2v1h-4v-1h-3v1h-1v-1h-3v1h-2v-1h-2v1h-1v-1h-4v1h-4v-1h-2v1h-1v-1h-8v1h-2v-1h-4v1h-1v-1h-1v1h-4v-1h-4v1h-3v-1h-4v1h-1v-1h-4v1h-2v-1h-11v1h-4v-1h-7v1h-2v-1h-1v1h-1v-1h-20v1h-6v-1h-2v1h-1v-1h-2v1h-1v-1h-1v1h-1v-1h-1v1h-10v-1h-1v1h-1v-1h-7v1h-1v-1h-2v1h-2v-1h-2v1h-1v-1h-3v1h-5v-1h-4v1h-6z M277 880h1v-1h1v1h5v-1h1v1h9v-1h5v-1h1v2h1v-1h3v1h1v-1h3v1h3v-1h1v1h4v-1h4v1h16v-1h3v1h8v-1h2v1h3v-1h2v1h1v-1h1v1h9v-1h1v1h2v-1h1v1h5v-1h1v1h5v-1h2v1h12v-1h1v1h1v-1h1v1h6v-1h1v1h16v-1h3v1h3v-1h3v1h13v-2h1v2h2v-1h3v1h2v-1h1v1h1v-1h1v1h4v-1h1v1h11v-1h2v1h5v-1h1v1h4v-1h6v1h5v-1h1v1h10v-1h3v1h5v-1h1v1h2v-1h2v1h5v-1h1v1h2v-1h3v1h4v-1h1v1h16v-1h1v1h4v-1h3v1h3v-1h1v1h1v-1h1v1h6v-1h1v1h6v-1h1v1h4v-1h1v1h2v-1h3v1h3v-1h3v1h1v-1h1v1h2v-1h2v1h1v-1h5v1h12v-1h1v1h6v-1h3v1h2v-1h1v1h15v-1h3v1h5v-1h1v1h4v-1h4v1h6v-1h2v1h4v-1h1v1h5v-1h2v1h16v-1h1v1h12v-1h1v1h4v-1h4v1h10v-1h1v1h1v-1h1v1h5v-1h1v1h5v-1h1v1h2v-1h1v1h2v-1h1v1h1v-2h1v1h2v1h1v-1h2v1h2v-1h1v1h1v-1h1v1h2v-1h1v1h2v-1h3v1h2v-1h3v1h4v-1h5v1h7v-1h3v1h1v-1h1v1h4v-1h1v1h5v-1h1v1h5v-1h1v1h1v-1h1v1h3v-1h2v1h3v-1h1v1h2v-1h1v1h1v-1h1v1h8v-1h7v1h4v-1h1v1h8v-1h1v1h2v-1h1v1h1v-1h3v1h1v-1h2v1h1v-1h1v1h3v-1h3v1h1v-1h3v1h8v-1h1v1h5v-1h4v1h10v-1h2v1h4v-1h1v1h4v-1h1v1h6v-1h2v1h5v-1h2v1h3v-1h1v1h5v-2h2v1h2v-1h5v1h1v1h1v-1h1v1h3v-1h2v1h2v-2h1v1h3v1h2v-1h2v1h4v-1h1v1h1v-1h1v1h3v-1h1v1h4v-1h3v1h2v-1h2v1h11v-1h1v1h4v-1h2v1h3v-1h2v1h1v-1h1v1h3v-1h3v1h6v-1h1v1h8v-1h2v1h10v-1h2v1h3v-1h1v1h5v-1h3v1h10v-1h3v1h9v-1h2v1h2v-1h1v1h3v-1h2v1h1v-1h2v1h8v-1h7v1h3v-1h1v1h5v-1h1v1h6v-1h1v1h1v-1h1v1h8v-1h1v1h1v-1h1v1h2v-1h2v1h4v-1h1v1h4v-1h2v1h2v-1h2v1h9v-1h3v1h1v-1h2v1h7v-1h1v1h1v-1h1v1h3v-1h1v1h1v-1h1v1h5v-1h2v1h2v-1h1v1h5v-1h1v1h6v-1h2v1h2v-1h2v1h11v-1h2v1h3v-1h1v1h3v-1h2v1h3v-1h1v1h3v-1h1v1h6v-1h1v-1h1v1h1v-1h1v1h1v1h2v-1h1v1h3v-1h2v1h6v-1h1v1h13v-1h2v1h3v-1h1v1h2v-1h2v1h1v-1h2v1h17v-1h1v1h4v-1h3v1h3v-1h1v1h8v-1h2v1h3v-1h1v1h3v-1h1v1h8v-1h1v1h2v-1h1v1h4v-1h2v1h1v-2h1v2h5v-1h1v1h3v-1h1v1h7v-1h1v1h3v-1h3v1h1v-1h1v1h4v5h-2v-1h-2v1h-1v-1h-1v1h-3v-1h-5v1h-1v-1h-3v1h-1v-1h-4v1h-2v-1h-4v1h-1v-1h-1v1h-6v-1h-1v1h-2v-1h-2v1h-2v-1h-1v1h-1v-1h-3v1h-1v-1h-1v1h-1v-1h-7v1h-2v-1h-10v1h-1v-1h-1v1h-2v-1h-3v1h-1v-1h-4v1h-2v-1h-1v1h-1v-1h-7v1h-1v-1h-2v1h-1v-1h-2v1h-1v-1h-3v1h-2v-1h-9v1h-1v-1h-12v1h-1v-1h-2v1h-3v-1h-3v1h-1v-1h-1v2h-1v-2h-1v2h-1v-1h-1v-1h-7v1h-1v-1h-2v1h-4v-1h-1v1h-4v-1h-1v1h-1v-1h-2v1h-4v-1h-2v1h-1v-1h-3v1h-1v-1h-12v1h-1v-1h-9v1h-1v-1h-4v1h-1v-1h-4v1h-2v-1h-9v1h-1v-1h-5v1h-1v-1h-7v1h-1v-1h-3v1h-3v-1h-9v1h-4v-1h-4v1h-2v-1h-7v1h-3v-1h-1v1h-2v-1h-3v1h-2v-1h-9v1h-1v-1h-8v1h-1v-1h-2v1h-1v-1h-1v1h-1v-1h-3v1h-3v-1h-4v1h-1v-1h-1v1h-4v-1h-1v1h-3v-1h-1v1h-1v-1h-1v1h-1v-1h-1v1h-2v-1h-3v2h-1v-2h-1v1h-4v-1h-3v1h-1v-1h-5v1h-7v-1h-1v1h-1v-1h-5v1h-3v-1h-2v1h-1v-1h-1v1h-1v-1h-2v1h-3v-1h-6v1h-1v-1h-6v1h-1v-1h-3v1h-1v-1h-6v1h-1v-1h-1v1h-2v-1h-8v1h-4v-1h-8v1h-3v-1h-1v1h-3v-1h-4v1h-3v-1h-1v1h-4v-1h-1v1h-1v-1h-3v1h-1v-1h-1v1h-1v2h-1v-1h-2v1h-1v-1h-1v-1h-1v1h-1v-1h-3v-1h-1v1h-1v-1h-4v1h-1v-1h-2v1h-1v-1h-4v1h-1v-1h-2v1h-6v-1h-10v1h-1v-1h-6v1h-3v-1h-1v1h-2v-1h-19v1h-1v-1h-2v1h-1v-1h-1v1h-1v-1h-1v1h-2v-1h-5v1h-1v-1h-4v1h-1v-1h-2v1h-2v-1h-6v1h-2v-1h-2v1h-2v1h-1v-1h-2v1h-1v-1h-1v-1h-4v1h-1v-1h-8v1h-2v-1h-5v1h-2v-1h-4v1h-1v-1h-3v1h-2v-1h-8v1h-1v-1h-1v1h-1v-1h-3v1h-1v-1h-1v1h-2v-1h-1v1h-1v-1h-2v1h-2v-1h-7v1h-1v-1h-1v1h-2v-1h-2v1h-1v-1h-4v1h-5v-1h-5v1h-1v-1h-6v1h-1v-1h-5v1h-2v-1h-1v1h-1v-1h-2v1h-1v-1h-1v1h-1v-1h-1v1h-1v-1h-2v1h-2v-1h-5v1h-1v-1h-8v1h-3v-1h-4v1h-1v-1h-15v1h-3v-1h-1v1h-1v-1h-1v1h-5v-1h-2v1h-1v-1h-2v1h-4v-1h-4v1h-1v-1h-2v1h-4v-1h-2v1h-4v-1h-2v1h-2v-1h-4v1h-2v-1h-3v1h-2v-1h-4v1h-1v-1h-6v1h-2v-1h-1v1h-7v-1h-1v1h-3v-1h-1v1h-1v-1h-3v1h-2v-1h-7v1h-1v-1h-9v1h-1v-1h-1v1h-4v-1h-10v1h-1v-1h-2v1h-2v-1h-4v1h-2v-1h-4v1h-1v-1h-5v1h-1v-1h-4v1h-2v-1h-3v1h-1v-1h-3v1h-1v-1h-1v1h-1v-1h-17v1h-1v-1h-1v1h-1v-1h-6v1h-2v-1h-3v1h-1v-1h-15v1h-1v-1h-8v1h-5v-1h-1v1h-1v-1h-1v1h-2v-1h-3v1h-1v-1h-3v1h-3v-1h-1v1h-1v-1h-1v1h-1v-1h-3v1h-1v-1h-4v1h-1v-1h-1v1h-2v1h-1v-1h-1v-1h-2v1h-4v-1h-4v1h-2v-1h-4v1h-5v-1h-2v1h-1v-1h-2v1h-4v-1h-5v1h-3v-1h-2v1h-1v-1h-3v1h-3v-1h-8v1h-4v-1h-5v1h-1v-1h-1v1h-3v-1h-2v1h-2v-1h-1v1h-2v-1h-7v1h-1v-1h-1v1h-1v-1h-1v1h-1v-1h-6v1h-2v-1h-14v1h-3v-1h-1v1h-4v-1h-4v1h-2v-1h-2v1h-1v-1h-1v1h-2v-1h-2v1h-1v-1h-12v1h-2v-1h-4v1h-1v-1h-1v1h-2v-1h-1v1h-2v-1h-2v1h-1v-1h-1z M277 910h6v-1h3v1h3v-1h2v1h4v-1h1v1h9v-1h1v1h4v-1h1v1h12v-1h2v1h7v-1h1v1h7v-1h1v1h3v-1h3v1h3v-1h3v1h6v-1h1v1h6v-1h2v1h7v-1h1v1h2v-1h1v1h13v-1h2v1h10v-1h3v1h4v-1h1v1h12v-1h2v1h3v-1h2v1h5v-1h3v1h6v-1h2v1h9v-1h3v1h1v-1h3v1h1v-1h2v1h3v-1h4v1h4v-1h3v1h1v-1h1v1h3v-1h1v1h6v-1h2v1h11v-1h1v1h3v-1h3v1h9v-1h1v1h6v-1h3v1h25v-1h2v1h2v-1h7v1h4v-1h2v1h2v-1h1v1h14v-1h1v1h4v-1h4v1h7v-1h3v1h2v-1h2v1h1v-1h1v1h7v-1h6v1h1v-1h1v1h7v-1h1v1h2v-1h1v1h10v-1h1v1h2v-1h2v1h1v-1h1v1h7v-1h1v1h1v-1h1v1h2v-1h1v1h2v-1h1v1h6v-1h2v1h2v-1h2v1h2v-1h1v1h1v-2h1v2h5v-1h1v1h7v-1h2v1h2v-1h1v1h17v-1h2v1h4v-1h4v1h8v-1h1v1h2v-1h1v1h1v-1h1v-1h1v2h1v-1h4v1h1v-1h2v1h2v-1h1v1h3v-1h1v1h1v-2h1v2h5v-1h3v1h3v-1h2v1h5v-1h1v1h1v-1h1v1h4v-1h4v1h15v-1h1v1h6v-1h1v1h6v-2h1v2h4v-2h1v2h4v-1h2v1h11v-1h8v1h2v-1h2v1h3v-1h1v1h9v-1h1v1h1v-1h1v1h5v-1h3v1h1v-1h1v1h3v-1h1v1h1v-1h1v1h1v-1h1v1h2v-1h3v1h6v-2h1v2h1v-1h1v1h2v-1h3v1h5v-1h2v1h1v-1h2v1h3v-2h1v2h2v-1h3v1h3v-1h1v1h3v-1h5v1h3v-1h3v1h4v-1h2v1h4v-1h1v1h2v-1h1v1h2v-1h1v1h3v-1h2v1h3v-1h1v1h13v-1h1v1h5v-1h1v1h8v-1h1v1h3v-1h4v1h2v-2h2v1h1v-1h3v-1h3v1h3v1h3v1h8v-1h1v1h1v-1h1v1h1v-1h3v1h1v-1h1v1h1v-2h1v2h1v-1h1v1h1v-1h2v1h8v-1h1v1h4v-1h3v1h1v-1h2v1h2v-1h1v1h13v-2h1v2h8v-1h1v1h12v-1h1v1h1v-1h1v1h3v-1h1v1h1v-1h5v1h3v-1h1v1h10v-1h1v1h11v-1h1v1h4v-1h1v1h1v-1h4v1h9v-1h1v1h4v-1h2v1h6v-1h2v1h3v-1h1v1h5v-1h2v1h1v-1h1v1h4v-1h1v1h2v-1h1v1h5v-1h1v1h36v-1h3v1h7v-1h1v1h4v-1h1v1h4v-1h1v1h5v-1h2v1h2v-1h1v1h1v-1h3v1h4v-1h1v1h1v-1h2v1h1v-1h1v1h8v-1h2v1h1v-2h1v1h1v1h4v-1h1v1h1v-1h2v1h1v-1h3v1h7v-1h1v1h2v-1h3v1h1v-1h1v1h2v-1h2v1h1v-1h1v1h3v-1h1v-1h4v1h2v8h-4v1h-2v-3h-11v1h-1v-1h-2v1h-3v-1h-1v1h-1v-1h-2v1h-3v-1h-2v1h-1v-1h-3v1h-1v-1h-5v1h-1v-1h-12v1h-2v-1h-13v1h-2v-1h-1v1h-1v-1h-4v1h-3v-1h-2v1h-2v-1h-1v1h-3v-1h-3v1h-2v-1h-7v1h-2v-1h-1v1h-5v-1h-5v1h-1v-1h-3v1h-1v-1h-4v1h-1v-1h-1v1h-2v-1h-4v1h-1v-1h-2v1h-2v-1h-3v1h-1v-1h-2v1h-4v-1h-2v1h-3v1h-1v-1h-3v-1h-10v1h-1v-1h-1v1h-2v-1h-3v1h-3v-1h-2v1h-1v-1h-2v1h-1v-1h-7v1h-1v-1h-3v1h-2v-1h-1v1h-3v-1h-1v1h-1v-1h-7v1h-2v-1h-2v1h-1v-1h-5v1h-1v-1h-1v1h-1v-1h-1v1h-1v-1h-4v1h-2v-1h-2v1h-1v-1h-1v1h-1v-1h-6v1h-3v-1h-2v1h-1v-1h-16v1h-3v-1h-8v1h-3v-1h-1v1h-3v-1h-4v1h-1v-1h-3v1h-1v-1h-1v1h-1v-1h-5v1h-3v-1h-1v1h-2v-1h-1v1h-1v-1h-3v1h-3v-1h-1v1h-5v-1h-2v1h-3v1h-5v2h-1v-1h-2v-1h-3v-1h-2v1h-1v-2h-3v1h-1v-1h-1v1h-1v-1h-2v1h-1v-1h-3v1h-1v-1h-1v2h-1v-2h-5v1h-1v-1h-1v1h-6v-1h-4v1h-3v-1h-2v1h-1v-1h-1v1h-1v-1h-8v1h-1v-1h-2v1h-1v-1h-1v2h-1v-2h-8v1h-1v-1h-1v1h-2v-1h-4v1h-4v-1h-7v1h-2v-1h-2v1h-3v-1h-5v1h-1v-1h-1v1h-3v-1h-8v1h-1v-1h-1v2h-1v-2h-11v1h-1v-1h-3v1h-1v-1h-2v1h-2v-1h-1v1h-1v-1h-5v1h-2v-1h-5v1h-1v-1h-1v1h-3v-1h-2v1h-2v-1h-1v1h-3v-1h-7v1h-1v-1h-8v1h-3v-1h-1v1h-1v-1h-4v1h-3v-1h-1v1h-2v-1h-3v1h-2v-1h-1v1h-3v-1h-8v1h-1v-1h-5v1h-2v-1h-1v1h-1v-1h-16v1h-3v-1h-2v1h-5v-1h-2v1h-1v-1h-1v1h-1v-1h-1v1h-2v-1h-1v1h-1v-1h-11v1h-2v-1h-1v2h-1v-2h-7v1h-1v-1h-6v1h-1v-1h-6v1h-1v-1h-3v1h-1v-1h-3v1h-3v-1h-5v1h-1v-1h-5v1h-2v-1h-2v1h-4v-1h-2v1h-3v-1h-3v1h-1v-1h-4v1h-1v-1h-7v1h-1v-1h-6v1h-2v-1h-7v1h-2v-1h-6v1h-3v-1h-5v1h-3v-1h-2v2h-1v-2h-1v1h-2v-1h-5v1h-2v-1h-3v1h-1v-1h-5v1h-1v-1h-2v1h-1v-1h-4v1h-2v-1h-2v1h-1v-1h-2v1h-2v-1h-4v1h-1v-1h-10v1h-2v-1h-4v1h-1v-1h-4v1h-4v-1h-3v1h-2v-1h-10v1h-2v-1h-1v1h-4v-1h-1v1h-1v-1h-3v1h-2v-1h-4v1h-1v-1h-4v1h-1v-1h-7v1h-1v-1h-1v1h-1v-1h-1v1h-2v-1h-1v1h-1v-1h-2v1h-1v-1h-14v1h-4v-1h-1v1h-1v-1h-3v2h-1v-2h-2v1h-1v-1h-5v1h-2v-1h-4v1h-1v-1h-4v1h-1v-1h-2v1h-1v-1h-2v1h-1v-1h-5v1h-1v-1h-4v1h-4v-1h-5v1h-2v-1h-1v1h-3v-1h-3v1h-1v-1h-3v1h-1v-1h-2v1h-1v-1h-1v1h-2v-1h-2v2h-1v-1h-2v-1h-1v1h-3v-1h-4v1h-1v-1h-3v1h-1v-1h-1v1h-4v-1h-1v1h-3v-1h-1v1h-4v-1h-3v1h-1v-1h-2v1h-2v-1h-2v1h-1v-1h-6v1h-8v-1h-4v2h-1v-1h-1v-1h-1v1h-4v-1h-5v1h-1v-1h-1v1h-1v-1h-2v1h-3v-1h-2v1h-3v-1h-2v1h-2v-1h-3v1h-3v-1h-1v1h-1v-1h-6v1h-1v-1h-11v1h-1v-1h-2v1h-2v-1h-2v1h-2v-1h-4v1h-1v-1h-2v1h-3v-1h-10v1h-2v-1h-4z"/>
<path fill="#00ffff" d="M576 205h1v23h-1zM689 198h1v34h-1zM970 196h1v36h-1zM1005 199h1v34h-1zM715 230h1v31h-1zM1395 240h1v11h-1zM952 270h1v11h-1zM1217 271h1v11h-1zM512 286h1v38h-1zM591 294h1v31h-1zM645 287h1v36h-1zM1301 289h1v34h-1zM1399 294h1v30h-1zM824 323h1v28h-1zM1073 318h1v35h-1zM427 350h1v33h-1zM585 351h1v34h-1zM1081 449h1v22h-1zM1251 475h1v27h-1zM400 506h1v32h-1zM929 504h1v32h-1zM321 534h1v30h-1zM1268 655h1v25h-1zM354 872h1v21h-1zM1261 865h1v29h-1zM751 902h1v27h-1zM907 894h1v33h-1zM1196 901h1v28h-1z"/>
<text x="277" y="121" class="t16">Département de géologie et de génie géologique</text>
<text x="277" y="140" class="t16">Faculté des sciences et de génie</text>
<text x="277" y="159" class="t16">Université Laval</text>
<text x="840" y="142" class="t20" text-anchor="middle">Séismographe QCQ (CGC/GSC)</text>
<text x="840" y="1001" class="t18" text-anchor="middle">Minutes écoulées</text>
<text x="1423.7" y="192" style="font-size:18.67px;fill:#ff0000" text-anchor="middle">UTC</text>
<g shape-rendering="geometricPrecision">
  <path d="M1300.5 114.5 H1332.5 V147 Q1332.5 150.6 1328.5 150.6 H1319.6 L1316.3 155 L1313 150.6 H1304.5 Q1300.5 150.6 1300.5 147 Z" fill="#e8141c" stroke="#6a0c0c" stroke-width="0.9"/>
  <rect x="1313" y="115" width="6.6" height="36" fill="#fdc600"/>
  <rect x="1301" y="129.5" width="31" height="6.2" fill="#fdc600"/>
  <path d="M1313 150.6 L1316.3 154.6 L1319.6 150.6 Z" fill="#fdc600"/>
  <g fill="#1b8fd8">
    <ellipse cx="1316.3" cy="122.6" rx="2.4" ry="1.9"/>
    <ellipse cx="1316.3" cy="132.8" rx="2.4" ry="1.9"/>
    <ellipse cx="1307.1" cy="132.8" rx="2.4" ry="1.9"/>
    <ellipse cx="1325.7" cy="132.8" rx="2.4" ry="1.9"/>
    <ellipse cx="1316.3" cy="142.9" rx="2.4" ry="1.9"/>
  </g>
  <g fill="#e4e4e4">
    <path id="fl" d="M0 -2.2 Q1.9 -2.2 1.9 -0.4 Q1.9 0.8 0.9 1 L0.9 2.3 L-0.9 2.3 L-0.9 1 Q-1.9 0.8 -1.9 -0.4 Q-1.9 -2.2 0 -2.2Z" transform="translate(1304.1 118.6)"/>
    <path d="M0 -2.2 Q1.9 -2.2 1.9 -0.4 Q1.9 0.8 0.9 1 L0.9 2.3 L-0.9 2.3 L-0.9 1 Q-1.9 0.8 -1.9 -0.4 Q-1.9 -2.2 0 -2.2Z" transform="translate(1310.1 118.6)"/>
    <path d="M0 -2.2 Q1.9 -2.2 1.9 -0.4 Q1.9 0.8 0.9 1 L0.9 2.3 L-0.9 2.3 L-0.9 1 Q-1.9 0.8 -1.9 -0.4 Q-1.9 -2.2 0 -2.2Z" transform="translate(1322.7 118.6)"/>
    <path d="M0 -2.2 Q1.9 -2.2 1.9 -0.4 Q1.9 0.8 0.9 1 L0.9 2.3 L-0.9 2.3 L-0.9 1 Q-1.9 0.8 -1.9 -0.4 Q-1.9 -2.2 0 -2.2Z" transform="translate(1328.7 118.6)"/>
    <path d="M0 -2.2 Q1.9 -2.2 1.9 -0.4 Q1.9 0.8 0.9 1 L0.9 2.3 L-0.9 2.3 L-0.9 1 Q-1.9 0.8 -1.9 -0.4 Q-1.9 -2.2 0 -2.2Z" transform="translate(1304.1 125.6)"/>
    <path d="M0 -2.2 Q1.9 -2.2 1.9 -0.4 Q1.9 0.8 0.9 1 L0.9 2.3 L-0.9 2.3 L-0.9 1 Q-1.9 0.8 -1.9 -0.4 Q-1.9 -2.2 0 -2.2Z" transform="translate(1310.1 125.6)"/>
    <path d="M0 -2.2 Q1.9 -2.2 1.9 -0.4 Q1.9 0.8 0.9 1 L0.9 2.3 L-0.9 2.3 L-0.9 1 Q-1.9 0.8 -1.9 -0.4 Q-1.9 -2.2 0 -2.2Z" transform="translate(1322.7 125.6)"/>
    <path d="M0 -2.2 Q1.9 -2.2 1.9 -0.4 Q1.9 0.8 0.9 1 L0.9 2.3 L-0.9 2.3 L-0.9 1 Q-1.9 0.8 -1.9 -0.4 Q-1.9 -2.2 0 -2.2Z" transform="translate(1328.7 125.6)"/>
    <path d="M0 -2.2 Q1.9 -2.2 1.9 -0.4 Q1.9 0.8 0.9 1 L0.9 2.3 L-0.9 2.3 L-0.9 1 Q-1.9 0.8 -1.9 -0.4 Q-1.9 -2.2 0 -2.2Z" transform="translate(1304.1 139.4)"/>
    <path d="M0 -2.2 Q1.9 -2.2 1.9 -0.4 Q1.9 0.8 0.9 1 L0.9 2.3 L-0.9 2.3 L-0.9 1 Q-1.9 0.8 -1.9 -0.4 Q-1.9 -2.2 0 -2.2Z" transform="translate(1310.1 139.4)"/>
    <path d="M0 -2.2 Q1.9 -2.2 1.9 -0.4 Q1.9 0.8 0.9 1 L0.9 2.3 L-0.9 2.3 L-0.9 1 Q-1.9 0.8 -1.9 -0.4 Q-1.9 -2.2 0 -2.2Z" transform="translate(1322.7 139.4)"/>
    <path d="M0 -2.2 Q1.9 -2.2 1.9 -0.4 Q1.9 0.8 0.9 1 L0.9 2.3 L-0.9 2.3 L-0.9 1 Q-1.9 0.8 -1.9 -0.4 Q-1.9 -2.2 0 -2.2Z" transform="translate(1328.7 139.4)"/>
    <path d="M0 -2.2 Q1.9 -2.2 1.9 -0.4 Q1.9 0.8 0.9 1 L0.9 2.3 L-0.9 2.3 L-0.9 1 Q-1.9 0.8 -1.9 -0.4 Q-1.9 -2.2 0 -2.2Z" transform="translate(1304.1 146.2)"/>
    <path d="M0 -2.2 Q1.9 -2.2 1.9 -0.4 Q1.9 0.8 0.9 1 L0.9 2.3 L-0.9 2.3 L-0.9 1 Q-1.9 0.8 -1.9 -0.4 Q-1.9 -2.2 0 -2.2Z" transform="translate(1310.1 146.2)"/>
    <path d="M0 -2.2 Q1.9 -2.2 1.9 -0.4 Q1.9 0.8 0.9 1 L0.9 2.3 L-0.9 2.3 L-0.9 1 Q-1.9 0.8 -1.9 -0.4 Q-1.9 -2.2 0 -2.2Z" transform="translate(1322.7 146.2)"/>
    <path d="M0 -2.2 Q1.9 -2.2 1.9 -0.4 Q1.9 0.8 0.9 1 L0.9 2.3 L-0.9 2.3 L-0.9 1 Q-1.9 0.8 -1.9 -0.4 Q-1.9 -2.2 0 -2.2Z" transform="translate(1328.7 146.2)"/>
  </g>
  <text x="1338.6" y="126.8" style="font-size:10.5px;letter-spacing:0.1px;fill:#262626">UNIVERSITÉ</text>
  <g fill="#1a1a1a">
    <path d="M1339.3 130 H1341.7 V144 H1349.2 V146.2 H1339.3 Z"/>
    <path d="M1347.6 146.2 L1353.9 130 H1356.9 L1363.8 146.2 H1361.2 L1355.3 132.8 L1350.1 146.2 Z"/>
    <rect x="1350.8" y="139.4" width="9.2" height="2.1"/>
    <path d="M1360.5 130 H1363.2 L1369.1 143.6 L1373.5 130 H1376 L1370.9 146.2 H1367.2 Z"/>
    <path d="M1373.4 146.2 L1379.8 130 H1383.1 L1390.2 146.2 H1387.5 L1381.5 132.8 L1376 146.2 Z"/>
    <rect x="1377.2" y="139.4" width="9.2" height="2.1"/>
    <path d="M1391.3 130 H1393.7 V144 H1401 V146.2 H1391.3 Z"/>
  </g>
</g>

</svg>
</body></html>
